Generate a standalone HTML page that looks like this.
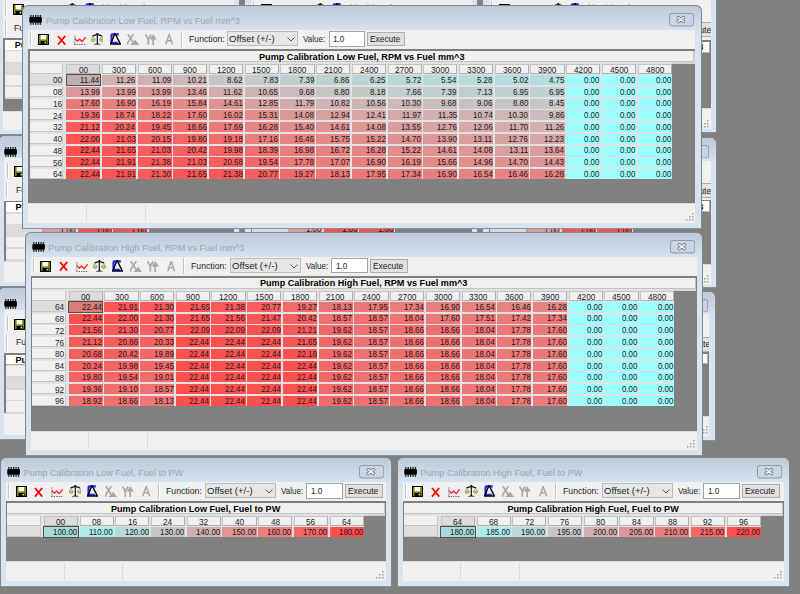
<!DOCTYPE html>
<html><head><meta charset="utf-8"><style>
html,body{margin:0;padding:0;}
body{width:800px;height:594px;overflow:hidden;position:relative;background:#808080;font-family:"Liberation Sans", sans-serif;}
.win{position:absolute;overflow:hidden;}
.win div{position:absolute;}
.t{white-space:nowrap;line-height:1;transform-origin:0 0;}
</style></head><body>
<div class="win" style="left:-3.5px;top:-27px;width:243.5px;height:162px;">
<div style="left:0px;top:0px;width:243.5px;height:162px;background:linear-gradient(#bccad9 0px,#c6d4e3 10px,#d4e0ed 22px,#d8e4f0 30px);border:1px solid #80868e;border-bottom-color:#8a9098;border-radius:6px 6px 0 0;box-sizing:border-box;"></div>
<svg style="position:absolute;left:6.5px;top:11.8px" width="13.2" height="9.8" viewBox="0 0 13.2 9.8"><rect x="0.3" y="2.1" width="12.6" height="5.6" rx="1" fill="#000"/><rect x="1.20" y="0" width="1.3" height="2.6" fill="#222"/><rect x="1.20" y="7.2" width="1.3" height="2.6" fill="#222"/><rect x="3.60" y="0" width="1.3" height="2.6" fill="#222"/><rect x="3.60" y="7.2" width="1.3" height="2.6" fill="#222"/><rect x="6.00" y="0" width="1.3" height="2.6" fill="#222"/><rect x="6.00" y="7.2" width="1.3" height="2.6" fill="#222"/><rect x="8.40" y="0" width="1.3" height="2.6" fill="#222"/><rect x="8.40" y="7.2" width="1.3" height="2.6" fill="#222"/><rect x="10.80" y="0" width="1.3" height="2.6" fill="#222"/><rect x="10.80" y="7.2" width="1.3" height="2.6" fill="#222"/></svg>
<svg style="position:absolute;left:210.5px;top:7.5px" width="25.2" height="13.5" viewBox="0 0 25.2 13.5"><rect x="0.5" y="0.5" width="24.2" height="12.5" rx="2.5" fill="#c9d5e2" stroke="#8d9bae" stroke-width="1"/><path d="M9.2 4.6 L14.6 8.6 M14.6 4.6 L9.2 8.6" stroke="#737b86" stroke-width="3.4" stroke-linecap="round" fill="none"/><path d="M9.2 4.6 L14.6 8.6 M14.6 4.6 L9.2 8.6" stroke="#f0f0f0" stroke-width="1.8" stroke-linecap="round" fill="none"/></svg>
<div style="left:6.5px;top:22.3px;width:230.8px;height:134.7px;background:#f0f0f0;"></div>
<div style="left:8.9px;top:28.2px;width:1px;height:15px;background:#c4c4c4;border-right:1px solid #fff;"></div>
<svg style="position:absolute;left:16.5px;top:31px" width="11" height="11" viewBox="0 0 11 11"><rect x="0.5" y="0.5" width="10" height="10" fill="#808000" stroke="#000" stroke-width="1"/><rect x="2.6" y="1" width="5.6" height="4.4" fill="#fff"/><rect x="2.6" y="7" width="6" height="3" fill="#000"/><rect x="6.6" y="7.8" width="1.3" height="1.6" fill="#fff"/></svg>
<svg style="position:absolute;left:35.3px;top:31.6px" width="9.2" height="10.6" viewBox="0 0 9.2 10.6"><path d="M1 1 L8.2 9.6 M8.2 1 L1 9.6" stroke="#ff0000" stroke-width="1.8" fill="none"/></svg>
<svg style="position:absolute;left:52.2px;top:31.9px" width="12" height="10.4" viewBox="0 0 12 10.4"><rect x="0.3" y="0" width="1.1" height="9.6" fill="#a8a8a8"/><path d="M0.3 9.7 H12" stroke="#333" stroke-width="1.1" stroke-dasharray="1.3 1.1" fill="none"/><path d="M0.8 3.6 L3.3 6.2 L5.6 4.2 L8.2 6.6 L11.6 2.2" stroke="#ff2020" stroke-width="1.3" fill="none"/></svg>
<svg style="position:absolute;left:69.5px;top:30.2px" width="12.6" height="11.8" viewBox="0 0 12.6 11.8"><path d="M1.6 2.8 L6.3 1.4 L11 2.8" stroke="#111" stroke-width="1.3" fill="none"/><circle cx="6.3" cy="1.2" r="1.1" fill="#000"/><rect x="5.7" y="1" width="1.3" height="10" fill="#222"/><path d="M1.8 2.8 L0.2 6.6 M1.8 2.8 L3.6 6.6 M10.8 2.8 L9 6.6 M10.8 2.8 L12.4 6.6" stroke="#888" stroke-width="0.7" fill="none"/><path d="M-0.2 6.3 H4.2 Q4 8.6 2 8.6 Q0 8.6 -0.2 6.3 Z" fill="#e2e200" stroke="#666" stroke-width="0.5"/><path d="M8.4 6.3 H12.8 Q12.6 8.6 10.6 8.6 Q8.6 8.6 8.4 6.3 Z" fill="#e2e200" stroke="#666" stroke-width="0.5"/><path d="M2.4 11.6 Q6.3 9.6 10.2 11.6 Z" fill="#000"/></svg>
<svg style="position:absolute;left:88.2px;top:30px" width="11" height="11.8" viewBox="0 0 11 11.8"><path d="M8.8 1.4 H2.6 Q1.5 1.4 1.5 2.6 V9.8 H7.8" stroke="#2020ff" stroke-width="2.1" fill="none"/><path d="M5.0 0.3 L0.7 11.0 H10.3 Z" stroke="#000" stroke-width="1.4" fill="none" stroke-linejoin="miter"/></svg>
<svg style="position:absolute;left:105.7px;top:31.2px" width="12" height="11" viewBox="0 0 12 11"><path d="M0.8 0.2 L6.3 8.5 M6.3 0.2 L0.8 8.5 L0.3 10.8" stroke="#a8a8a8" stroke-width="1.6" fill="none"/><path d="M3.2 11 L8.3 5.8 L12 11 Z" fill="#a8a8a8"/></svg>
<svg style="position:absolute;left:123.3px;top:31.2px" width="12" height="11" viewBox="0 0 12 11"><path d="M0.5 0.5 L3.3 5.2 L6.1 0.5 M3.3 5 V10.8" stroke="#a8a8a8" stroke-width="1.7" fill="none"/><path d="M8.2 11 V4.5" stroke="#a8a8a8" stroke-width="1.7" fill="none"/><path d="M4.6 5.6 L8.2 0.2 L11.8 5.6 Z" fill="#a8a8a8"/></svg>
<svg style="position:absolute;left:143.3px;top:31.2px" width="8.4" height="10.6" viewBox="0 0 8.4 10.6"><path d="M0.7 10.3 L4.2 0.5 L7.7 10.3 M2 6.8 H6.4" stroke="#a8a8a8" stroke-width="1.5" fill="none"/></svg>
<div style="left:8.5px;top:47px;width:1px;height:16.7px;background:#c4c4c4;border-right:1px solid #fff;"></div>
<div class="t" style="left:17.8px;top:51.28px;font-size:9px;color:#1e1e1e;transform:scaleX(0.9661);">Function:</div>
<div style="left:56.6px;top:47.3px;width:70.9px;height:14.6px;background:#e6e6e6;border:1px solid #bcbcbc;box-sizing:border-box;"></div>
<div class="t" style="left:58.67px;top:51.28px;font-size:9px;color:#1e1e1e;transform:scaleX(1.0577);">Offset (+/-)</div>
<svg style="position:absolute;left:116.5px;top:53px" width="8" height="5" viewBox="0 0 8 5"><path d="M0.5 0.5 L4 4 L7.5 0.5" stroke="#5a5a5a" stroke-width="1" fill="none"/></svg>
<div class="t" style="left:132.5px;top:51.28px;font-size:9px;color:#1e1e1e;transform:scaleX(0.8930);">Value:</div>
<div style="left:158px;top:47.1px;width:36.7px;height:15.3px;background:#fff;border:1px solid #a5a5a5;box-sizing:border-box;"></div>
<div class="t" style="left:162.68px;top:51.28px;font-size:9px;color:#1e1e1e;transform:scaleX(0.9115);">1.0</div>
<div style="left:203.3px;top:46.5px;width:38.3px;height:15px;background:#e1e1e1;border:1px solid #adadad;box-sizing:border-box;"></div>
<div class="t" style="left:206.61px;top:49.88px;font-size:9px;color:#1e1e1e;transform:scaleX(0.9615);">Execute</div>
<div style="left:237.3px;top:45.5px;width:5.2px;height:17px;background:#d8e4f0;"></div>
<div style="left:6.5px;top:65.4px;width:230.8px;height:72.2px;background:#808080;"></div>
<div style="left:8px;top:66.9px;width:228.3px;height:10.8px;background:#ffffff;border-right:1px solid #b0b0b0;border-bottom:1px solid #b0b0b0;box-sizing:border-box;"></div>
<div class="t" style="left:18.23px;top:68.2px;font-size:9.1px;color:#000;font-weight:bold;">Pump Calibration High Fuel, RPM vs Fuel mm^3</div>
<div style="left:8px;top:76.9px;width:143.16px;height:48.7px;background:#d9d9d9;"></div>
<div style="left:8.2px;top:78.4px;width:33.8px;height:10.2px;background:#f0f0f0;"></div>
<div style="left:44px;top:78.4px;width:34.2px;height:10.2px;background:#f0f0f0;border-right:1px solid #c2c2c2;border-bottom:1px solid #c2c2c2;box-sizing:border-box;"></div>
<div style="left:79.72px;top:78.4px;width:34.2px;height:10.2px;background:#f0f0f0;border-right:1px solid #c2c2c2;border-bottom:1px solid #c2c2c2;box-sizing:border-box;"></div>
<div style="left:115.44px;top:78.4px;width:34.2px;height:10.2px;background:#f0f0f0;border-right:1px solid #c2c2c2;border-bottom:1px solid #c2c2c2;box-sizing:border-box;"></div>
<div style="left:8.2px;top:90.2px;width:33.8px;height:10.2px;background:#dcdcdc;"></div>
<div style="left:44px;top:90.2px;width:34.2px;height:10.2px;background:#d89a9a;"></div>
<div class="t" style="left:62.09px;top:91.02px;font-size:8.6px;color:#1a1a1a;transform:scaleX(0.9200);">1.00</div>
<div style="left:79.72px;top:90.2px;width:34.2px;height:10.2px;background:#ff5050;"></div>
<div class="t" style="left:97.81px;top:91.02px;font-size:8.6px;color:#1a1a1a;transform:scaleX(0.9200);">1.00</div>
<div style="left:115.44px;top:90.2px;width:34.2px;height:10.2px;background:#ff5050;"></div>
<div class="t" style="left:133.53px;top:91.02px;font-size:8.6px;color:#1a1a1a;transform:scaleX(0.9200);">1.00</div>
<div style="left:8.2px;top:102px;width:33.8px;height:10.2px;background:#f0f0f0;"></div>
<div style="left:44px;top:102px;width:34.2px;height:10.2px;background:#ff5050;"></div>
<div class="t" style="left:62.09px;top:102.82px;font-size:8.6px;color:#1a1a1a;transform:scaleX(0.9200);">1.00</div>
<div style="left:79.72px;top:102px;width:34.2px;height:10.2px;background:#ff5050;"></div>
<div class="t" style="left:97.81px;top:102.82px;font-size:8.6px;color:#1a1a1a;transform:scaleX(0.9200);">1.00</div>
<div style="left:115.44px;top:102px;width:34.2px;height:10.2px;background:#ff5050;"></div>
<div class="t" style="left:133.53px;top:102.82px;font-size:8.6px;color:#1a1a1a;transform:scaleX(0.9200);">1.00</div>
<div style="left:8.2px;top:113.8px;width:33.8px;height:10.2px;background:#f0f0f0;"></div>
<div style="left:44px;top:113.8px;width:34.2px;height:10.2px;background:#ff5050;"></div>
<div class="t" style="left:62.09px;top:114.62px;font-size:8.6px;color:#1a1a1a;transform:scaleX(0.9200);">1.00</div>
<div style="left:79.72px;top:113.8px;width:34.2px;height:10.2px;background:#ff5050;"></div>
<div class="t" style="left:97.81px;top:114.62px;font-size:8.6px;color:#1a1a1a;transform:scaleX(0.9200);">1.00</div>
<div style="left:115.44px;top:113.8px;width:34.2px;height:10.2px;background:#ff5050;"></div>
<div class="t" style="left:133.53px;top:114.62px;font-size:8.6px;color:#1a1a1a;transform:scaleX(0.9200);">1.00</div>
<div style="left:6.5px;top:137.6px;width:230.8px;height:19.2px;background:#f0f0f0;border-top:1px solid #dadada;box-sizing:border-box;"></div>
<svg style="position:absolute;left:227.8px;top:147.3px" width="8" height="8" viewBox="0 0 8 8"><rect x="6" y="0" width="1.5" height="1.5" fill="#a0a0a0"/><rect x="6" y="3" width="1.5" height="1.5" fill="#a0a0a0"/><rect x="3" y="3" width="1.5" height="1.5" fill="#a0a0a0"/><rect x="6" y="6" width="1.5" height="1.5" fill="#a0a0a0"/><rect x="3" y="6" width="1.5" height="1.5" fill="#a0a0a0"/><rect x="0" y="6" width="1.5" height="1.5" fill="#a0a0a0"/></svg>
</div>
<div class="win" style="left:-2.2px;top:135.3px;width:242.2px;height:151.4px;">
<div style="left:0px;top:0px;width:242.2px;height:151.4px;background:linear-gradient(#bccad9 0px,#c6d4e3 10px,#d4e0ed 22px,#d8e4f0 30px);border:1px solid #80868e;border-bottom-color:#8a9098;border-radius:6px 6px 0 0;box-sizing:border-box;"></div>
<svg style="position:absolute;left:6.5px;top:11.8px" width="13.2" height="9.8" viewBox="0 0 13.2 9.8"><rect x="0.3" y="2.1" width="12.6" height="5.6" rx="1" fill="#000"/><rect x="1.20" y="0" width="1.3" height="2.6" fill="#222"/><rect x="1.20" y="7.2" width="1.3" height="2.6" fill="#222"/><rect x="3.60" y="0" width="1.3" height="2.6" fill="#222"/><rect x="3.60" y="7.2" width="1.3" height="2.6" fill="#222"/><rect x="6.00" y="0" width="1.3" height="2.6" fill="#222"/><rect x="6.00" y="7.2" width="1.3" height="2.6" fill="#222"/><rect x="8.40" y="0" width="1.3" height="2.6" fill="#222"/><rect x="8.40" y="7.2" width="1.3" height="2.6" fill="#222"/><rect x="10.80" y="0" width="1.3" height="2.6" fill="#222"/><rect x="10.80" y="7.2" width="1.3" height="2.6" fill="#222"/></svg>
<svg style="position:absolute;left:209.2px;top:7.5px" width="25.2" height="13.5" viewBox="0 0 25.2 13.5"><rect x="0.5" y="0.5" width="24.2" height="12.5" rx="2.5" fill="#c9d5e2" stroke="#8d9bae" stroke-width="1"/><path d="M9.2 4.6 L14.6 8.6 M14.6 4.6 L9.2 8.6" stroke="#737b86" stroke-width="3.4" stroke-linecap="round" fill="none"/><path d="M9.2 4.6 L14.6 8.6 M14.6 4.6 L9.2 8.6" stroke="#f0f0f0" stroke-width="1.8" stroke-linecap="round" fill="none"/></svg>
<div style="left:6.5px;top:22.3px;width:229.5px;height:124.1px;background:#f0f0f0;"></div>
<div style="left:8.9px;top:27.9px;width:1px;height:15px;background:#c4c4c4;border-right:1px solid #fff;"></div>
<svg style="position:absolute;left:16.5px;top:30.7px" width="11" height="11" viewBox="0 0 11 11"><rect x="0.5" y="0.5" width="10" height="10" fill="#808000" stroke="#000" stroke-width="1"/><rect x="2.6" y="1" width="5.6" height="4.4" fill="#fff"/><rect x="2.6" y="7" width="6" height="3" fill="#000"/><rect x="6.6" y="7.8" width="1.3" height="1.6" fill="#fff"/></svg>
<svg style="position:absolute;left:35.3px;top:31.3px" width="9.2" height="10.6" viewBox="0 0 9.2 10.6"><path d="M1 1 L8.2 9.6 M8.2 1 L1 9.6" stroke="#ff0000" stroke-width="1.8" fill="none"/></svg>
<svg style="position:absolute;left:52.2px;top:31.6px" width="12" height="10.4" viewBox="0 0 12 10.4"><rect x="0.3" y="0" width="1.1" height="9.6" fill="#a8a8a8"/><path d="M0.3 9.7 H12" stroke="#333" stroke-width="1.1" stroke-dasharray="1.3 1.1" fill="none"/><path d="M0.8 3.6 L3.3 6.2 L5.6 4.2 L8.2 6.6 L11.6 2.2" stroke="#ff2020" stroke-width="1.3" fill="none"/></svg>
<svg style="position:absolute;left:69.5px;top:29.9px" width="12.6" height="11.8" viewBox="0 0 12.6 11.8"><path d="M1.6 2.8 L6.3 1.4 L11 2.8" stroke="#111" stroke-width="1.3" fill="none"/><circle cx="6.3" cy="1.2" r="1.1" fill="#000"/><rect x="5.7" y="1" width="1.3" height="10" fill="#222"/><path d="M1.8 2.8 L0.2 6.6 M1.8 2.8 L3.6 6.6 M10.8 2.8 L9 6.6 M10.8 2.8 L12.4 6.6" stroke="#888" stroke-width="0.7" fill="none"/><path d="M-0.2 6.3 H4.2 Q4 8.6 2 8.6 Q0 8.6 -0.2 6.3 Z" fill="#e2e200" stroke="#666" stroke-width="0.5"/><path d="M8.4 6.3 H12.8 Q12.6 8.6 10.6 8.6 Q8.6 8.6 8.4 6.3 Z" fill="#e2e200" stroke="#666" stroke-width="0.5"/><path d="M2.4 11.6 Q6.3 9.6 10.2 11.6 Z" fill="#000"/></svg>
<svg style="position:absolute;left:88.2px;top:29.7px" width="11" height="11.8" viewBox="0 0 11 11.8"><path d="M8.8 1.4 H2.6 Q1.5 1.4 1.5 2.6 V9.8 H7.8" stroke="#2020ff" stroke-width="2.1" fill="none"/><path d="M5.0 0.3 L0.7 11.0 H10.3 Z" stroke="#000" stroke-width="1.4" fill="none" stroke-linejoin="miter"/></svg>
<svg style="position:absolute;left:105.7px;top:30.9px" width="12" height="11" viewBox="0 0 12 11"><path d="M0.8 0.2 L6.3 8.5 M6.3 0.2 L0.8 8.5 L0.3 10.8" stroke="#a8a8a8" stroke-width="1.6" fill="none"/><path d="M3.2 11 L8.3 5.8 L12 11 Z" fill="#a8a8a8"/></svg>
<svg style="position:absolute;left:123.3px;top:30.9px" width="12" height="11" viewBox="0 0 12 11"><path d="M0.5 0.5 L3.3 5.2 L6.1 0.5 M3.3 5 V10.8" stroke="#a8a8a8" stroke-width="1.7" fill="none"/><path d="M8.2 11 V4.5" stroke="#a8a8a8" stroke-width="1.7" fill="none"/><path d="M4.6 5.6 L8.2 0.2 L11.8 5.6 Z" fill="#a8a8a8"/></svg>
<svg style="position:absolute;left:143.3px;top:30.9px" width="8.4" height="10.6" viewBox="0 0 8.4 10.6"><path d="M0.7 10.3 L4.2 0.5 L7.7 10.3 M2 6.8 H6.4" stroke="#a8a8a8" stroke-width="1.5" fill="none"/></svg>
<div style="left:8.5px;top:46.5px;width:1px;height:16.7px;background:#c4c4c4;border-right:1px solid #fff;"></div>
<div class="t" style="left:17.8px;top:50.78px;font-size:9px;color:#1e1e1e;transform:scaleX(0.9661);">Function:</div>
<div style="left:56.6px;top:46.8px;width:70.9px;height:14.6px;background:#e6e6e6;border:1px solid #bcbcbc;box-sizing:border-box;"></div>
<div class="t" style="left:58.67px;top:50.78px;font-size:9px;color:#1e1e1e;transform:scaleX(1.0577);">Offset (+/-)</div>
<svg style="position:absolute;left:116.5px;top:52.5px" width="8" height="5" viewBox="0 0 8 5"><path d="M0.5 0.5 L4 4 L7.5 0.5" stroke="#5a5a5a" stroke-width="1" fill="none"/></svg>
<div class="t" style="left:132.5px;top:50.78px;font-size:9px;color:#1e1e1e;transform:scaleX(0.8930);">Value:</div>
<div style="left:158px;top:46.6px;width:36.7px;height:15.3px;background:#fff;border:1px solid #a5a5a5;box-sizing:border-box;"></div>
<div class="t" style="left:162.68px;top:50.78px;font-size:9px;color:#1e1e1e;transform:scaleX(0.9115);">1.0</div>
<div style="left:202px;top:46.2px;width:38.3px;height:15px;background:#e1e1e1;border:1px solid #adadad;box-sizing:border-box;"></div>
<div class="t" style="left:205.31px;top:49.58px;font-size:9px;color:#1e1e1e;transform:scaleX(0.9615);">Execute</div>
<div style="left:236px;top:45.2px;width:5.2px;height:17px;background:#d8e4f0;"></div>
<div style="left:6.5px;top:65.3px;width:229.5px;height:60.8px;background:#808080;"></div>
<div style="left:8px;top:66.8px;width:227px;height:10.8px;background:#ffffff;border-right:1px solid #b0b0b0;border-bottom:1px solid #b0b0b0;box-sizing:border-box;"></div>
<div class="t" style="left:17.58px;top:68.1px;font-size:9.1px;color:#000;font-weight:bold;">Pump Calibration High Fuel, RPM vs Fuel mm^3</div>
<div style="left:8px;top:76.8px;width:143.16px;height:48.7px;background:#d9d9d9;"></div>
<div style="left:8.2px;top:78.3px;width:33.8px;height:10.2px;background:#f0f0f0;"></div>
<div style="left:44px;top:78.3px;width:34.2px;height:10.2px;background:#f0f0f0;border-right:1px solid #c2c2c2;border-bottom:1px solid #c2c2c2;box-sizing:border-box;"></div>
<div style="left:79.72px;top:78.3px;width:34.2px;height:10.2px;background:#f0f0f0;border-right:1px solid #c2c2c2;border-bottom:1px solid #c2c2c2;box-sizing:border-box;"></div>
<div style="left:115.44px;top:78.3px;width:34.2px;height:10.2px;background:#f0f0f0;border-right:1px solid #c2c2c2;border-bottom:1px solid #c2c2c2;box-sizing:border-box;"></div>
<div style="left:8.2px;top:90.1px;width:33.8px;height:10.2px;background:#dcdcdc;"></div>
<div style="left:44px;top:90.1px;width:34.2px;height:10.2px;background:#d89a9a;"></div>
<div class="t" style="left:62.09px;top:90.92px;font-size:8.6px;color:#1a1a1a;transform:scaleX(0.9200);">1.00</div>
<div style="left:79.72px;top:90.1px;width:34.2px;height:10.2px;background:#ff5050;"></div>
<div class="t" style="left:97.81px;top:90.92px;font-size:8.6px;color:#1a1a1a;transform:scaleX(0.9200);">1.00</div>
<div style="left:115.44px;top:90.1px;width:34.2px;height:10.2px;background:#ff5050;"></div>
<div class="t" style="left:133.53px;top:90.92px;font-size:8.6px;color:#1a1a1a;transform:scaleX(0.9200);">1.00</div>
<div style="left:8.2px;top:101.9px;width:33.8px;height:10.2px;background:#f0f0f0;"></div>
<div style="left:44px;top:101.9px;width:34.2px;height:10.2px;background:#ff5050;"></div>
<div class="t" style="left:62.09px;top:102.72px;font-size:8.6px;color:#1a1a1a;transform:scaleX(0.9200);">1.00</div>
<div style="left:79.72px;top:101.9px;width:34.2px;height:10.2px;background:#ff5050;"></div>
<div class="t" style="left:97.81px;top:102.72px;font-size:8.6px;color:#1a1a1a;transform:scaleX(0.9200);">1.00</div>
<div style="left:115.44px;top:101.9px;width:34.2px;height:10.2px;background:#ff5050;"></div>
<div class="t" style="left:133.53px;top:102.72px;font-size:8.6px;color:#1a1a1a;transform:scaleX(0.9200);">1.00</div>
<div style="left:8.2px;top:113.7px;width:33.8px;height:10.2px;background:#f0f0f0;"></div>
<div style="left:44px;top:113.7px;width:34.2px;height:10.2px;background:#ff5050;"></div>
<div class="t" style="left:62.09px;top:114.52px;font-size:8.6px;color:#1a1a1a;transform:scaleX(0.9200);">1.00</div>
<div style="left:79.72px;top:113.7px;width:34.2px;height:10.2px;background:#ff5050;"></div>
<div class="t" style="left:97.81px;top:114.52px;font-size:8.6px;color:#1a1a1a;transform:scaleX(0.9200);">1.00</div>
<div style="left:115.44px;top:113.7px;width:34.2px;height:10.2px;background:#ff5050;"></div>
<div class="t" style="left:133.53px;top:114.52px;font-size:8.6px;color:#1a1a1a;transform:scaleX(0.9200);">1.00</div>
<div style="left:6.5px;top:126.1px;width:229.5px;height:20.6px;background:#f0f0f0;border-top:1px solid #dadada;box-sizing:border-box;"></div>
<svg style="position:absolute;left:226.5px;top:137.2px" width="8" height="8" viewBox="0 0 8 8"><rect x="6" y="0" width="1.5" height="1.5" fill="#a0a0a0"/><rect x="6" y="3" width="1.5" height="1.5" fill="#a0a0a0"/><rect x="3" y="3" width="1.5" height="1.5" fill="#a0a0a0"/><rect x="6" y="6" width="1.5" height="1.5" fill="#a0a0a0"/><rect x="3" y="6" width="1.5" height="1.5" fill="#a0a0a0"/><rect x="0" y="6" width="1.5" height="1.5" fill="#a0a0a0"/></svg>
</div>
<div class="win" style="left:-2.2px;top:287px;width:242.2px;height:152.5px;">
<div style="left:0px;top:0px;width:242.2px;height:152.5px;background:linear-gradient(#bccad9 0px,#c6d4e3 10px,#d4e0ed 22px,#d8e4f0 30px);border:1px solid #80868e;border-bottom-color:#8a9098;border-radius:6px 6px 0 0;box-sizing:border-box;"></div>
<svg style="position:absolute;left:6.5px;top:11.8px" width="13.2" height="9.8" viewBox="0 0 13.2 9.8"><rect x="0.3" y="2.1" width="12.6" height="5.6" rx="1" fill="#000"/><rect x="1.20" y="0" width="1.3" height="2.6" fill="#222"/><rect x="1.20" y="7.2" width="1.3" height="2.6" fill="#222"/><rect x="3.60" y="0" width="1.3" height="2.6" fill="#222"/><rect x="3.60" y="7.2" width="1.3" height="2.6" fill="#222"/><rect x="6.00" y="0" width="1.3" height="2.6" fill="#222"/><rect x="6.00" y="7.2" width="1.3" height="2.6" fill="#222"/><rect x="8.40" y="0" width="1.3" height="2.6" fill="#222"/><rect x="8.40" y="7.2" width="1.3" height="2.6" fill="#222"/><rect x="10.80" y="0" width="1.3" height="2.6" fill="#222"/><rect x="10.80" y="7.2" width="1.3" height="2.6" fill="#222"/></svg>
<svg style="position:absolute;left:209.2px;top:7.5px" width="25.2" height="13.5" viewBox="0 0 25.2 13.5"><rect x="0.5" y="0.5" width="24.2" height="12.5" rx="2.5" fill="#c9d5e2" stroke="#8d9bae" stroke-width="1"/><path d="M9.2 4.6 L14.6 8.6 M14.6 4.6 L9.2 8.6" stroke="#737b86" stroke-width="3.4" stroke-linecap="round" fill="none"/><path d="M9.2 4.6 L14.6 8.6 M14.6 4.6 L9.2 8.6" stroke="#f0f0f0" stroke-width="1.8" stroke-linecap="round" fill="none"/></svg>
<div style="left:6.5px;top:23px;width:229.5px;height:124.5px;background:#f0f0f0;"></div>
<div style="left:8.9px;top:28.7px;width:1px;height:15px;background:#c4c4c4;border-right:1px solid #fff;"></div>
<svg style="position:absolute;left:16.5px;top:31.5px" width="11" height="11" viewBox="0 0 11 11"><rect x="0.5" y="0.5" width="10" height="10" fill="#808000" stroke="#000" stroke-width="1"/><rect x="2.6" y="1" width="5.6" height="4.4" fill="#fff"/><rect x="2.6" y="7" width="6" height="3" fill="#000"/><rect x="6.6" y="7.8" width="1.3" height="1.6" fill="#fff"/></svg>
<svg style="position:absolute;left:35.3px;top:32.1px" width="9.2" height="10.6" viewBox="0 0 9.2 10.6"><path d="M1 1 L8.2 9.6 M8.2 1 L1 9.6" stroke="#ff0000" stroke-width="1.8" fill="none"/></svg>
<svg style="position:absolute;left:52.2px;top:32.4px" width="12" height="10.4" viewBox="0 0 12 10.4"><rect x="0.3" y="0" width="1.1" height="9.6" fill="#a8a8a8"/><path d="M0.3 9.7 H12" stroke="#333" stroke-width="1.1" stroke-dasharray="1.3 1.1" fill="none"/><path d="M0.8 3.6 L3.3 6.2 L5.6 4.2 L8.2 6.6 L11.6 2.2" stroke="#ff2020" stroke-width="1.3" fill="none"/></svg>
<svg style="position:absolute;left:69.5px;top:30.7px" width="12.6" height="11.8" viewBox="0 0 12.6 11.8"><path d="M1.6 2.8 L6.3 1.4 L11 2.8" stroke="#111" stroke-width="1.3" fill="none"/><circle cx="6.3" cy="1.2" r="1.1" fill="#000"/><rect x="5.7" y="1" width="1.3" height="10" fill="#222"/><path d="M1.8 2.8 L0.2 6.6 M1.8 2.8 L3.6 6.6 M10.8 2.8 L9 6.6 M10.8 2.8 L12.4 6.6" stroke="#888" stroke-width="0.7" fill="none"/><path d="M-0.2 6.3 H4.2 Q4 8.6 2 8.6 Q0 8.6 -0.2 6.3 Z" fill="#e2e200" stroke="#666" stroke-width="0.5"/><path d="M8.4 6.3 H12.8 Q12.6 8.6 10.6 8.6 Q8.6 8.6 8.4 6.3 Z" fill="#e2e200" stroke="#666" stroke-width="0.5"/><path d="M2.4 11.6 Q6.3 9.6 10.2 11.6 Z" fill="#000"/></svg>
<svg style="position:absolute;left:88.2px;top:30.5px" width="11" height="11.8" viewBox="0 0 11 11.8"><path d="M8.8 1.4 H2.6 Q1.5 1.4 1.5 2.6 V9.8 H7.8" stroke="#2020ff" stroke-width="2.1" fill="none"/><path d="M5.0 0.3 L0.7 11.0 H10.3 Z" stroke="#000" stroke-width="1.4" fill="none" stroke-linejoin="miter"/></svg>
<svg style="position:absolute;left:105.7px;top:31.7px" width="12" height="11" viewBox="0 0 12 11"><path d="M0.8 0.2 L6.3 8.5 M6.3 0.2 L0.8 8.5 L0.3 10.8" stroke="#a8a8a8" stroke-width="1.6" fill="none"/><path d="M3.2 11 L8.3 5.8 L12 11 Z" fill="#a8a8a8"/></svg>
<svg style="position:absolute;left:123.3px;top:31.7px" width="12" height="11" viewBox="0 0 12 11"><path d="M0.5 0.5 L3.3 5.2 L6.1 0.5 M3.3 5 V10.8" stroke="#a8a8a8" stroke-width="1.7" fill="none"/><path d="M8.2 11 V4.5" stroke="#a8a8a8" stroke-width="1.7" fill="none"/><path d="M4.6 5.6 L8.2 0.2 L11.8 5.6 Z" fill="#a8a8a8"/></svg>
<svg style="position:absolute;left:143.3px;top:31.7px" width="8.4" height="10.6" viewBox="0 0 8.4 10.6"><path d="M0.7 10.3 L4.2 0.5 L7.7 10.3 M2 6.8 H6.4" stroke="#a8a8a8" stroke-width="1.5" fill="none"/></svg>
<div style="left:8.5px;top:47px;width:1px;height:16.7px;background:#c4c4c4;border-right:1px solid #fff;"></div>
<div class="t" style="left:17.8px;top:51.28px;font-size:9px;color:#1e1e1e;transform:scaleX(0.9661);">Function:</div>
<div style="left:56.6px;top:47.3px;width:70.9px;height:14.6px;background:#e6e6e6;border:1px solid #bcbcbc;box-sizing:border-box;"></div>
<div class="t" style="left:58.67px;top:51.28px;font-size:9px;color:#1e1e1e;transform:scaleX(1.0577);">Offset (+/-)</div>
<svg style="position:absolute;left:116.5px;top:53px" width="8" height="5" viewBox="0 0 8 5"><path d="M0.5 0.5 L4 4 L7.5 0.5" stroke="#5a5a5a" stroke-width="1" fill="none"/></svg>
<div class="t" style="left:132.5px;top:51.28px;font-size:9px;color:#1e1e1e;transform:scaleX(0.8930);">Value:</div>
<div style="left:158px;top:47.1px;width:36.7px;height:15.3px;background:#fff;border:1px solid #a5a5a5;box-sizing:border-box;"></div>
<div class="t" style="left:162.68px;top:51.28px;font-size:9px;color:#1e1e1e;transform:scaleX(0.9115);">1.0</div>
<div style="left:202px;top:47px;width:38.3px;height:15px;background:#e1e1e1;border:1px solid #adadad;box-sizing:border-box;"></div>
<div class="t" style="left:205.31px;top:50.38px;font-size:9px;color:#1e1e1e;transform:scaleX(0.9615);">Execute</div>
<div style="left:236px;top:46px;width:5.2px;height:17px;background:#d8e4f0;"></div>
<div style="left:6.5px;top:66px;width:229.5px;height:59.8px;background:#808080;"></div>
<div style="left:8px;top:67.5px;width:227px;height:10.8px;background:#ffffff;border-right:1px solid #b0b0b0;border-bottom:1px solid #b0b0b0;box-sizing:border-box;"></div>
<div class="t" style="left:17.58px;top:68.8px;font-size:9.1px;color:#000;font-weight:bold;">Pump Calibration High Fuel, RPM vs Fuel mm^3</div>
<div style="left:8px;top:77.5px;width:143.16px;height:48.7px;background:#d9d9d9;"></div>
<div style="left:8.2px;top:79px;width:33.8px;height:10.2px;background:#f0f0f0;"></div>
<div style="left:44px;top:79px;width:34.2px;height:10.2px;background:#f0f0f0;border-right:1px solid #c2c2c2;border-bottom:1px solid #c2c2c2;box-sizing:border-box;"></div>
<div style="left:79.72px;top:79px;width:34.2px;height:10.2px;background:#f0f0f0;border-right:1px solid #c2c2c2;border-bottom:1px solid #c2c2c2;box-sizing:border-box;"></div>
<div style="left:115.44px;top:79px;width:34.2px;height:10.2px;background:#f0f0f0;border-right:1px solid #c2c2c2;border-bottom:1px solid #c2c2c2;box-sizing:border-box;"></div>
<div style="left:8.2px;top:90.8px;width:33.8px;height:10.2px;background:#dcdcdc;"></div>
<div style="left:44px;top:90.8px;width:34.2px;height:10.2px;background:#d89a9a;"></div>
<div class="t" style="left:62.09px;top:91.62px;font-size:8.6px;color:#1a1a1a;transform:scaleX(0.9200);">1.00</div>
<div style="left:79.72px;top:90.8px;width:34.2px;height:10.2px;background:#ff5050;"></div>
<div class="t" style="left:97.81px;top:91.62px;font-size:8.6px;color:#1a1a1a;transform:scaleX(0.9200);">1.00</div>
<div style="left:115.44px;top:90.8px;width:34.2px;height:10.2px;background:#ff5050;"></div>
<div class="t" style="left:133.53px;top:91.62px;font-size:8.6px;color:#1a1a1a;transform:scaleX(0.9200);">1.00</div>
<div style="left:8.2px;top:102.6px;width:33.8px;height:10.2px;background:#f0f0f0;"></div>
<div style="left:44px;top:102.6px;width:34.2px;height:10.2px;background:#ff5050;"></div>
<div class="t" style="left:62.09px;top:103.42px;font-size:8.6px;color:#1a1a1a;transform:scaleX(0.9200);">1.00</div>
<div style="left:79.72px;top:102.6px;width:34.2px;height:10.2px;background:#ff5050;"></div>
<div class="t" style="left:97.81px;top:103.42px;font-size:8.6px;color:#1a1a1a;transform:scaleX(0.9200);">1.00</div>
<div style="left:115.44px;top:102.6px;width:34.2px;height:10.2px;background:#ff5050;"></div>
<div class="t" style="left:133.53px;top:103.42px;font-size:8.6px;color:#1a1a1a;transform:scaleX(0.9200);">1.00</div>
<div style="left:8.2px;top:114.4px;width:33.8px;height:10.2px;background:#f0f0f0;"></div>
<div style="left:44px;top:114.4px;width:34.2px;height:10.2px;background:#ff5050;"></div>
<div class="t" style="left:62.09px;top:115.22px;font-size:8.6px;color:#1a1a1a;transform:scaleX(0.9200);">1.00</div>
<div style="left:79.72px;top:114.4px;width:34.2px;height:10.2px;background:#ff5050;"></div>
<div class="t" style="left:97.81px;top:115.22px;font-size:8.6px;color:#1a1a1a;transform:scaleX(0.9200);">1.00</div>
<div style="left:115.44px;top:114.4px;width:34.2px;height:10.2px;background:#ff5050;"></div>
<div class="t" style="left:133.53px;top:115.22px;font-size:8.6px;color:#1a1a1a;transform:scaleX(0.9200);">1.00</div>
<div style="left:6.5px;top:125.8px;width:229.5px;height:21.2px;background:#f0f0f0;border-top:1px solid #dadada;box-sizing:border-box;"></div>
<svg style="position:absolute;left:226.5px;top:137.5px" width="8" height="8" viewBox="0 0 8 8"><rect x="6" y="0" width="1.5" height="1.5" fill="#a0a0a0"/><rect x="6" y="3" width="1.5" height="1.5" fill="#a0a0a0"/><rect x="3" y="3" width="1.5" height="1.5" fill="#a0a0a0"/><rect x="6" y="6" width="1.5" height="1.5" fill="#a0a0a0"/><rect x="3" y="6" width="1.5" height="1.5" fill="#a0a0a0"/><rect x="0" y="6" width="1.5" height="1.5" fill="#a0a0a0"/></svg>
</div>
<div class="win" style="left:244px;top:-27px;width:234px;height:162px;">
<div style="left:0px;top:0px;width:234px;height:162px;background:linear-gradient(#bccad9 0px,#c6d4e3 10px,#d4e0ed 22px,#d8e4f0 30px);border:1px solid #80868e;border-bottom-color:#8a9098;border-radius:6px 6px 0 0;box-sizing:border-box;"></div>
<svg style="position:absolute;left:6.5px;top:11.8px" width="13.2" height="9.8" viewBox="0 0 13.2 9.8"><rect x="0.3" y="2.1" width="12.6" height="5.6" rx="1" fill="#000"/><rect x="1.20" y="0" width="1.3" height="2.6" fill="#222"/><rect x="1.20" y="7.2" width="1.3" height="2.6" fill="#222"/><rect x="3.60" y="0" width="1.3" height="2.6" fill="#222"/><rect x="3.60" y="7.2" width="1.3" height="2.6" fill="#222"/><rect x="6.00" y="0" width="1.3" height="2.6" fill="#222"/><rect x="6.00" y="7.2" width="1.3" height="2.6" fill="#222"/><rect x="8.40" y="0" width="1.3" height="2.6" fill="#222"/><rect x="8.40" y="7.2" width="1.3" height="2.6" fill="#222"/><rect x="10.80" y="0" width="1.3" height="2.6" fill="#222"/><rect x="10.80" y="7.2" width="1.3" height="2.6" fill="#222"/></svg>
<svg style="position:absolute;left:201px;top:7.5px" width="25.2" height="13.5" viewBox="0 0 25.2 13.5"><rect x="0.5" y="0.5" width="24.2" height="12.5" rx="2.5" fill="#c9d5e2" stroke="#8d9bae" stroke-width="1"/><path d="M9.2 4.6 L14.6 8.6 M14.6 4.6 L9.2 8.6" stroke="#737b86" stroke-width="3.4" stroke-linecap="round" fill="none"/><path d="M9.2 4.6 L14.6 8.6 M14.6 4.6 L9.2 8.6" stroke="#f0f0f0" stroke-width="1.8" stroke-linecap="round" fill="none"/></svg>
<div style="left:6.5px;top:22.3px;width:221.3px;height:134.7px;background:#f0f0f0;"></div>
<div style="left:8.9px;top:28.2px;width:1px;height:15px;background:#c4c4c4;border-right:1px solid #fff;"></div>
<svg style="position:absolute;left:16.5px;top:31px" width="11" height="11" viewBox="0 0 11 11"><rect x="0.5" y="0.5" width="10" height="10" fill="#808000" stroke="#000" stroke-width="1"/><rect x="2.6" y="1" width="5.6" height="4.4" fill="#fff"/><rect x="2.6" y="7" width="6" height="3" fill="#000"/><rect x="6.6" y="7.8" width="1.3" height="1.6" fill="#fff"/></svg>
<svg style="position:absolute;left:35.3px;top:31.6px" width="9.2" height="10.6" viewBox="0 0 9.2 10.6"><path d="M1 1 L8.2 9.6 M8.2 1 L1 9.6" stroke="#ff0000" stroke-width="1.8" fill="none"/></svg>
<svg style="position:absolute;left:52.2px;top:31.9px" width="12" height="10.4" viewBox="0 0 12 10.4"><rect x="0.3" y="0" width="1.1" height="9.6" fill="#a8a8a8"/><path d="M0.3 9.7 H12" stroke="#333" stroke-width="1.1" stroke-dasharray="1.3 1.1" fill="none"/><path d="M0.8 3.6 L3.3 6.2 L5.6 4.2 L8.2 6.6 L11.6 2.2" stroke="#ff2020" stroke-width="1.3" fill="none"/></svg>
<svg style="position:absolute;left:69.5px;top:30.2px" width="12.6" height="11.8" viewBox="0 0 12.6 11.8"><path d="M1.6 2.8 L6.3 1.4 L11 2.8" stroke="#111" stroke-width="1.3" fill="none"/><circle cx="6.3" cy="1.2" r="1.1" fill="#000"/><rect x="5.7" y="1" width="1.3" height="10" fill="#222"/><path d="M1.8 2.8 L0.2 6.6 M1.8 2.8 L3.6 6.6 M10.8 2.8 L9 6.6 M10.8 2.8 L12.4 6.6" stroke="#888" stroke-width="0.7" fill="none"/><path d="M-0.2 6.3 H4.2 Q4 8.6 2 8.6 Q0 8.6 -0.2 6.3 Z" fill="#e2e200" stroke="#666" stroke-width="0.5"/><path d="M8.4 6.3 H12.8 Q12.6 8.6 10.6 8.6 Q8.6 8.6 8.4 6.3 Z" fill="#e2e200" stroke="#666" stroke-width="0.5"/><path d="M2.4 11.6 Q6.3 9.6 10.2 11.6 Z" fill="#000"/></svg>
<svg style="position:absolute;left:88.2px;top:30px" width="11" height="11.8" viewBox="0 0 11 11.8"><path d="M8.8 1.4 H2.6 Q1.5 1.4 1.5 2.6 V9.8 H7.8" stroke="#2020ff" stroke-width="2.1" fill="none"/><path d="M5.0 0.3 L0.7 11.0 H10.3 Z" stroke="#000" stroke-width="1.4" fill="none" stroke-linejoin="miter"/></svg>
<svg style="position:absolute;left:105.7px;top:31.2px" width="12" height="11" viewBox="0 0 12 11"><path d="M0.8 0.2 L6.3 8.5 M6.3 0.2 L0.8 8.5 L0.3 10.8" stroke="#a8a8a8" stroke-width="1.6" fill="none"/><path d="M3.2 11 L8.3 5.8 L12 11 Z" fill="#a8a8a8"/></svg>
<svg style="position:absolute;left:123.3px;top:31.2px" width="12" height="11" viewBox="0 0 12 11"><path d="M0.5 0.5 L3.3 5.2 L6.1 0.5 M3.3 5 V10.8" stroke="#a8a8a8" stroke-width="1.7" fill="none"/><path d="M8.2 11 V4.5" stroke="#a8a8a8" stroke-width="1.7" fill="none"/><path d="M4.6 5.6 L8.2 0.2 L11.8 5.6 Z" fill="#a8a8a8"/></svg>
<svg style="position:absolute;left:143.3px;top:31.2px" width="8.4" height="10.6" viewBox="0 0 8.4 10.6"><path d="M0.7 10.3 L4.2 0.5 L7.7 10.3 M2 6.8 H6.4" stroke="#a8a8a8" stroke-width="1.5" fill="none"/></svg>
<div style="left:8.5px;top:47px;width:1px;height:16.7px;background:#c4c4c4;border-right:1px solid #fff;"></div>
<div class="t" style="left:17.8px;top:51.28px;font-size:9px;color:#1e1e1e;transform:scaleX(0.9661);">Function:</div>
<div style="left:56.6px;top:47.3px;width:70.9px;height:14.6px;background:#e6e6e6;border:1px solid #bcbcbc;box-sizing:border-box;"></div>
<div class="t" style="left:58.67px;top:51.28px;font-size:9px;color:#1e1e1e;transform:scaleX(1.0577);">Offset (+/-)</div>
<svg style="position:absolute;left:116.5px;top:53px" width="8" height="5" viewBox="0 0 8 5"><path d="M0.5 0.5 L4 4 L7.5 0.5" stroke="#5a5a5a" stroke-width="1" fill="none"/></svg>
<div class="t" style="left:132.5px;top:51.28px;font-size:9px;color:#1e1e1e;transform:scaleX(0.8930);">Value:</div>
<div style="left:158px;top:47.1px;width:36.7px;height:15.3px;background:#fff;border:1px solid #a5a5a5;box-sizing:border-box;"></div>
<div class="t" style="left:162.68px;top:51.28px;font-size:9px;color:#1e1e1e;transform:scaleX(0.9115);">1.0</div>
<div style="left:193.8px;top:46.5px;width:38.3px;height:15px;background:#e1e1e1;border:1px solid #adadad;box-sizing:border-box;"></div>
<div class="t" style="left:197.11px;top:49.88px;font-size:9px;color:#1e1e1e;transform:scaleX(0.9615);">Execute</div>
<div style="left:227.8px;top:45.5px;width:5.2px;height:17px;background:#d8e4f0;"></div>
<div style="left:6.5px;top:65.4px;width:221.3px;height:72.2px;background:#808080;"></div>
<div style="left:8px;top:66.9px;width:218.8px;height:10.8px;background:#ffffff;border-right:1px solid #b0b0b0;border-bottom:1px solid #b0b0b0;box-sizing:border-box;"></div>
<div class="t" style="left:13.48px;top:68.2px;font-size:9.1px;color:#000;font-weight:bold;">Pump Calibration High Fuel, RPM vs Fuel mm^3</div>
<div style="left:8px;top:76.9px;width:143.16px;height:48.7px;background:#d9d9d9;"></div>
<div style="left:8.2px;top:78.4px;width:33.8px;height:10.2px;background:#f0f0f0;"></div>
<div style="left:44px;top:78.4px;width:34.2px;height:10.2px;background:#f0f0f0;border-right:1px solid #c2c2c2;border-bottom:1px solid #c2c2c2;box-sizing:border-box;"></div>
<div style="left:79.72px;top:78.4px;width:34.2px;height:10.2px;background:#f0f0f0;border-right:1px solid #c2c2c2;border-bottom:1px solid #c2c2c2;box-sizing:border-box;"></div>
<div style="left:115.44px;top:78.4px;width:34.2px;height:10.2px;background:#f0f0f0;border-right:1px solid #c2c2c2;border-bottom:1px solid #c2c2c2;box-sizing:border-box;"></div>
<div style="left:8.2px;top:90.2px;width:33.8px;height:10.2px;background:#dcdcdc;"></div>
<div style="left:44px;top:90.2px;width:34.2px;height:10.2px;background:#d89a9a;"></div>
<div class="t" style="left:62.09px;top:91.02px;font-size:8.6px;color:#1a1a1a;transform:scaleX(0.9200);">1.00</div>
<div style="left:79.72px;top:90.2px;width:34.2px;height:10.2px;background:#ff5050;"></div>
<div class="t" style="left:97.81px;top:91.02px;font-size:8.6px;color:#1a1a1a;transform:scaleX(0.9200);">1.00</div>
<div style="left:115.44px;top:90.2px;width:34.2px;height:10.2px;background:#ff5050;"></div>
<div class="t" style="left:133.53px;top:91.02px;font-size:8.6px;color:#1a1a1a;transform:scaleX(0.9200);">1.00</div>
<div style="left:8.2px;top:102px;width:33.8px;height:10.2px;background:#f0f0f0;"></div>
<div style="left:44px;top:102px;width:34.2px;height:10.2px;background:#ff5050;"></div>
<div class="t" style="left:62.09px;top:102.82px;font-size:8.6px;color:#1a1a1a;transform:scaleX(0.9200);">1.00</div>
<div style="left:79.72px;top:102px;width:34.2px;height:10.2px;background:#ff5050;"></div>
<div class="t" style="left:97.81px;top:102.82px;font-size:8.6px;color:#1a1a1a;transform:scaleX(0.9200);">1.00</div>
<div style="left:115.44px;top:102px;width:34.2px;height:10.2px;background:#ff5050;"></div>
<div class="t" style="left:133.53px;top:102.82px;font-size:8.6px;color:#1a1a1a;transform:scaleX(0.9200);">1.00</div>
<div style="left:8.2px;top:113.8px;width:33.8px;height:10.2px;background:#f0f0f0;"></div>
<div style="left:44px;top:113.8px;width:34.2px;height:10.2px;background:#ff5050;"></div>
<div class="t" style="left:62.09px;top:114.62px;font-size:8.6px;color:#1a1a1a;transform:scaleX(0.9200);">1.00</div>
<div style="left:79.72px;top:113.8px;width:34.2px;height:10.2px;background:#ff5050;"></div>
<div class="t" style="left:97.81px;top:114.62px;font-size:8.6px;color:#1a1a1a;transform:scaleX(0.9200);">1.00</div>
<div style="left:115.44px;top:113.8px;width:34.2px;height:10.2px;background:#ff5050;"></div>
<div class="t" style="left:133.53px;top:114.62px;font-size:8.6px;color:#1a1a1a;transform:scaleX(0.9200);">1.00</div>
<div style="left:6.5px;top:137.6px;width:221.3px;height:19.2px;background:#f0f0f0;border-top:1px solid #dadada;box-sizing:border-box;"></div>
<svg style="position:absolute;left:218.3px;top:147.3px" width="8" height="8" viewBox="0 0 8 8"><rect x="6" y="0" width="1.5" height="1.5" fill="#a0a0a0"/><rect x="6" y="3" width="1.5" height="1.5" fill="#a0a0a0"/><rect x="3" y="3" width="1.5" height="1.5" fill="#a0a0a0"/><rect x="6" y="6" width="1.5" height="1.5" fill="#a0a0a0"/><rect x="3" y="6" width="1.5" height="1.5" fill="#a0a0a0"/><rect x="0" y="6" width="1.5" height="1.5" fill="#a0a0a0"/></svg>
</div>
<div class="win" style="left:244px;top:137px;width:234px;height:153px;">
<div style="left:0px;top:0px;width:234px;height:153px;background:linear-gradient(#bccad9 0px,#c6d4e3 10px,#d4e0ed 22px,#d8e4f0 30px);border:1px solid #80868e;border-bottom-color:#8a9098;border-radius:6px 6px 0 0;box-sizing:border-box;"></div>
<svg style="position:absolute;left:6.5px;top:11.8px" width="13.2" height="9.8" viewBox="0 0 13.2 9.8"><rect x="0.3" y="2.1" width="12.6" height="5.6" rx="1" fill="#000"/><rect x="1.20" y="0" width="1.3" height="2.6" fill="#222"/><rect x="1.20" y="7.2" width="1.3" height="2.6" fill="#222"/><rect x="3.60" y="0" width="1.3" height="2.6" fill="#222"/><rect x="3.60" y="7.2" width="1.3" height="2.6" fill="#222"/><rect x="6.00" y="0" width="1.3" height="2.6" fill="#222"/><rect x="6.00" y="7.2" width="1.3" height="2.6" fill="#222"/><rect x="8.40" y="0" width="1.3" height="2.6" fill="#222"/><rect x="8.40" y="7.2" width="1.3" height="2.6" fill="#222"/><rect x="10.80" y="0" width="1.3" height="2.6" fill="#222"/><rect x="10.80" y="7.2" width="1.3" height="2.6" fill="#222"/></svg>
<svg style="position:absolute;left:201px;top:7.5px" width="25.2" height="13.5" viewBox="0 0 25.2 13.5"><rect x="0.5" y="0.5" width="24.2" height="12.5" rx="2.5" fill="#c9d5e2" stroke="#8d9bae" stroke-width="1"/><path d="M9.2 4.6 L14.6 8.6 M14.6 4.6 L9.2 8.6" stroke="#737b86" stroke-width="3.4" stroke-linecap="round" fill="none"/><path d="M9.2 4.6 L14.6 8.6 M14.6 4.6 L9.2 8.6" stroke="#f0f0f0" stroke-width="1.8" stroke-linecap="round" fill="none"/></svg>
<div style="left:6.5px;top:23.5px;width:221.3px;height:124.5px;background:#f0f0f0;"></div>
<div style="left:8.9px;top:29.2px;width:1px;height:15px;background:#c4c4c4;border-right:1px solid #fff;"></div>
<svg style="position:absolute;left:16.5px;top:32px" width="11" height="11" viewBox="0 0 11 11"><rect x="0.5" y="0.5" width="10" height="10" fill="#808000" stroke="#000" stroke-width="1"/><rect x="2.6" y="1" width="5.6" height="4.4" fill="#fff"/><rect x="2.6" y="7" width="6" height="3" fill="#000"/><rect x="6.6" y="7.8" width="1.3" height="1.6" fill="#fff"/></svg>
<svg style="position:absolute;left:35.3px;top:32.6px" width="9.2" height="10.6" viewBox="0 0 9.2 10.6"><path d="M1 1 L8.2 9.6 M8.2 1 L1 9.6" stroke="#ff0000" stroke-width="1.8" fill="none"/></svg>
<svg style="position:absolute;left:52.2px;top:32.9px" width="12" height="10.4" viewBox="0 0 12 10.4"><rect x="0.3" y="0" width="1.1" height="9.6" fill="#a8a8a8"/><path d="M0.3 9.7 H12" stroke="#333" stroke-width="1.1" stroke-dasharray="1.3 1.1" fill="none"/><path d="M0.8 3.6 L3.3 6.2 L5.6 4.2 L8.2 6.6 L11.6 2.2" stroke="#ff2020" stroke-width="1.3" fill="none"/></svg>
<svg style="position:absolute;left:69.5px;top:31.2px" width="12.6" height="11.8" viewBox="0 0 12.6 11.8"><path d="M1.6 2.8 L6.3 1.4 L11 2.8" stroke="#111" stroke-width="1.3" fill="none"/><circle cx="6.3" cy="1.2" r="1.1" fill="#000"/><rect x="5.7" y="1" width="1.3" height="10" fill="#222"/><path d="M1.8 2.8 L0.2 6.6 M1.8 2.8 L3.6 6.6 M10.8 2.8 L9 6.6 M10.8 2.8 L12.4 6.6" stroke="#888" stroke-width="0.7" fill="none"/><path d="M-0.2 6.3 H4.2 Q4 8.6 2 8.6 Q0 8.6 -0.2 6.3 Z" fill="#e2e200" stroke="#666" stroke-width="0.5"/><path d="M8.4 6.3 H12.8 Q12.6 8.6 10.6 8.6 Q8.6 8.6 8.4 6.3 Z" fill="#e2e200" stroke="#666" stroke-width="0.5"/><path d="M2.4 11.6 Q6.3 9.6 10.2 11.6 Z" fill="#000"/></svg>
<svg style="position:absolute;left:88.2px;top:31px" width="11" height="11.8" viewBox="0 0 11 11.8"><path d="M8.8 1.4 H2.6 Q1.5 1.4 1.5 2.6 V9.8 H7.8" stroke="#2020ff" stroke-width="2.1" fill="none"/><path d="M5.0 0.3 L0.7 11.0 H10.3 Z" stroke="#000" stroke-width="1.4" fill="none" stroke-linejoin="miter"/></svg>
<svg style="position:absolute;left:105.7px;top:32.2px" width="12" height="11" viewBox="0 0 12 11"><path d="M0.8 0.2 L6.3 8.5 M6.3 0.2 L0.8 8.5 L0.3 10.8" stroke="#a8a8a8" stroke-width="1.6" fill="none"/><path d="M3.2 11 L8.3 5.8 L12 11 Z" fill="#a8a8a8"/></svg>
<svg style="position:absolute;left:123.3px;top:32.2px" width="12" height="11" viewBox="0 0 12 11"><path d="M0.5 0.5 L3.3 5.2 L6.1 0.5 M3.3 5 V10.8" stroke="#a8a8a8" stroke-width="1.7" fill="none"/><path d="M8.2 11 V4.5" stroke="#a8a8a8" stroke-width="1.7" fill="none"/><path d="M4.6 5.6 L8.2 0.2 L11.8 5.6 Z" fill="#a8a8a8"/></svg>
<svg style="position:absolute;left:143.3px;top:32.2px" width="8.4" height="10.6" viewBox="0 0 8.4 10.6"><path d="M0.7 10.3 L4.2 0.5 L7.7 10.3 M2 6.8 H6.4" stroke="#a8a8a8" stroke-width="1.5" fill="none"/></svg>
<div style="left:8.5px;top:45px;width:1px;height:16.7px;background:#c4c4c4;border-right:1px solid #fff;"></div>
<div class="t" style="left:17.8px;top:49.28px;font-size:9px;color:#1e1e1e;transform:scaleX(0.9661);">Function:</div>
<div style="left:56.6px;top:45.3px;width:70.9px;height:14.6px;background:#e6e6e6;border:1px solid #bcbcbc;box-sizing:border-box;"></div>
<div class="t" style="left:58.67px;top:49.28px;font-size:9px;color:#1e1e1e;transform:scaleX(1.0577);">Offset (+/-)</div>
<svg style="position:absolute;left:116.5px;top:51px" width="8" height="5" viewBox="0 0 8 5"><path d="M0.5 0.5 L4 4 L7.5 0.5" stroke="#5a5a5a" stroke-width="1" fill="none"/></svg>
<div class="t" style="left:132.5px;top:49.28px;font-size:9px;color:#1e1e1e;transform:scaleX(0.8930);">Value:</div>
<div style="left:158px;top:45.1px;width:36.7px;height:15.3px;background:#fff;border:1px solid #a5a5a5;box-sizing:border-box;"></div>
<div class="t" style="left:162.68px;top:49.28px;font-size:9px;color:#1e1e1e;transform:scaleX(0.9115);">1.0</div>
<div style="left:193.8px;top:45.3px;width:38.3px;height:15px;background:#e1e1e1;border:1px solid #adadad;box-sizing:border-box;"></div>
<div class="t" style="left:197.11px;top:48.68px;font-size:9px;color:#1e1e1e;transform:scaleX(0.9615);">Execute</div>
<div style="left:227.8px;top:44.3px;width:5.2px;height:17px;background:#d8e4f0;"></div>
<div style="left:6.5px;top:62.7px;width:221.3px;height:65.3px;background:#808080;"></div>
<div style="left:8px;top:64.2px;width:218.8px;height:10.8px;background:#ffffff;border-right:1px solid #b0b0b0;border-bottom:1px solid #b0b0b0;box-sizing:border-box;"></div>
<div class="t" style="left:13.48px;top:65.5px;font-size:9.1px;color:#000;font-weight:bold;">Pump Calibration High Fuel, RPM vs Fuel mm^3</div>
<div style="left:8px;top:74.2px;width:143.16px;height:48.7px;background:#d9d9d9;"></div>
<div style="left:8.2px;top:75.7px;width:33.8px;height:10.2px;background:#f0f0f0;"></div>
<div style="left:44px;top:75.7px;width:34.2px;height:10.2px;background:#f0f0f0;border-right:1px solid #c2c2c2;border-bottom:1px solid #c2c2c2;box-sizing:border-box;"></div>
<div style="left:79.72px;top:75.7px;width:34.2px;height:10.2px;background:#f0f0f0;border-right:1px solid #c2c2c2;border-bottom:1px solid #c2c2c2;box-sizing:border-box;"></div>
<div style="left:115.44px;top:75.7px;width:34.2px;height:10.2px;background:#f0f0f0;border-right:1px solid #c2c2c2;border-bottom:1px solid #c2c2c2;box-sizing:border-box;"></div>
<div style="left:8.2px;top:87.5px;width:33.8px;height:10.2px;background:#dcdcdc;"></div>
<div style="left:44px;top:87.5px;width:34.2px;height:10.2px;background:#d89a9a;"></div>
<div class="t" style="left:62.09px;top:88.32px;font-size:8.6px;color:#1a1a1a;transform:scaleX(0.9200);">1.00</div>
<div style="left:79.72px;top:87.5px;width:34.2px;height:10.2px;background:#ff5050;"></div>
<div class="t" style="left:97.81px;top:88.32px;font-size:8.6px;color:#1a1a1a;transform:scaleX(0.9200);">1.00</div>
<div style="left:115.44px;top:87.5px;width:34.2px;height:10.2px;background:#ff5050;"></div>
<div class="t" style="left:133.53px;top:88.32px;font-size:8.6px;color:#1a1a1a;transform:scaleX(0.9200);">1.00</div>
<div style="left:8.2px;top:99.3px;width:33.8px;height:10.2px;background:#f0f0f0;"></div>
<div style="left:44px;top:99.3px;width:34.2px;height:10.2px;background:#ff5050;"></div>
<div class="t" style="left:62.09px;top:100.12px;font-size:8.6px;color:#1a1a1a;transform:scaleX(0.9200);">1.00</div>
<div style="left:79.72px;top:99.3px;width:34.2px;height:10.2px;background:#ff5050;"></div>
<div class="t" style="left:97.81px;top:100.12px;font-size:8.6px;color:#1a1a1a;transform:scaleX(0.9200);">1.00</div>
<div style="left:115.44px;top:99.3px;width:34.2px;height:10.2px;background:#ff5050;"></div>
<div class="t" style="left:133.53px;top:100.12px;font-size:8.6px;color:#1a1a1a;transform:scaleX(0.9200);">1.00</div>
<div style="left:8.2px;top:111.1px;width:33.8px;height:10.2px;background:#f0f0f0;"></div>
<div style="left:44px;top:111.1px;width:34.2px;height:10.2px;background:#ff5050;"></div>
<div class="t" style="left:62.09px;top:111.92px;font-size:8.6px;color:#1a1a1a;transform:scaleX(0.9200);">1.00</div>
<div style="left:79.72px;top:111.1px;width:34.2px;height:10.2px;background:#ff5050;"></div>
<div class="t" style="left:97.81px;top:111.92px;font-size:8.6px;color:#1a1a1a;transform:scaleX(0.9200);">1.00</div>
<div style="left:115.44px;top:111.1px;width:34.2px;height:10.2px;background:#ff5050;"></div>
<div class="t" style="left:133.53px;top:111.92px;font-size:8.6px;color:#1a1a1a;transform:scaleX(0.9200);">1.00</div>
<div style="left:6.5px;top:128px;width:221.3px;height:20px;background:#f0f0f0;border-top:1px solid #dadada;box-sizing:border-box;"></div>
<svg style="position:absolute;left:218.3px;top:138.5px" width="8" height="8" viewBox="0 0 8 8"><rect x="6" y="0" width="1.5" height="1.5" fill="#a0a0a0"/><rect x="6" y="3" width="1.5" height="1.5" fill="#a0a0a0"/><rect x="3" y="3" width="1.5" height="1.5" fill="#a0a0a0"/><rect x="6" y="6" width="1.5" height="1.5" fill="#a0a0a0"/><rect x="3" y="6" width="1.5" height="1.5" fill="#a0a0a0"/><rect x="0" y="6" width="1.5" height="1.5" fill="#a0a0a0"/></svg>
</div>
<div class="win" style="left:244px;top:291px;width:234px;height:149.4px;">
<div style="left:0px;top:0px;width:234px;height:149.4px;background:linear-gradient(#bccad9 0px,#c6d4e3 10px,#d4e0ed 22px,#d8e4f0 30px);border:1px solid #80868e;border-bottom-color:#8a9098;border-radius:6px 6px 0 0;box-sizing:border-box;"></div>
<svg style="position:absolute;left:6.5px;top:11.8px" width="13.2" height="9.8" viewBox="0 0 13.2 9.8"><rect x="0.3" y="2.1" width="12.6" height="5.6" rx="1" fill="#000"/><rect x="1.20" y="0" width="1.3" height="2.6" fill="#222"/><rect x="1.20" y="7.2" width="1.3" height="2.6" fill="#222"/><rect x="3.60" y="0" width="1.3" height="2.6" fill="#222"/><rect x="3.60" y="7.2" width="1.3" height="2.6" fill="#222"/><rect x="6.00" y="0" width="1.3" height="2.6" fill="#222"/><rect x="6.00" y="7.2" width="1.3" height="2.6" fill="#222"/><rect x="8.40" y="0" width="1.3" height="2.6" fill="#222"/><rect x="8.40" y="7.2" width="1.3" height="2.6" fill="#222"/><rect x="10.80" y="0" width="1.3" height="2.6" fill="#222"/><rect x="10.80" y="7.2" width="1.3" height="2.6" fill="#222"/></svg>
<svg style="position:absolute;left:201px;top:7.5px" width="25.2" height="13.5" viewBox="0 0 25.2 13.5"><rect x="0.5" y="0.5" width="24.2" height="12.5" rx="2.5" fill="#c9d5e2" stroke="#8d9bae" stroke-width="1"/><path d="M9.2 4.6 L14.6 8.6 M14.6 4.6 L9.2 8.6" stroke="#737b86" stroke-width="3.4" stroke-linecap="round" fill="none"/><path d="M9.2 4.6 L14.6 8.6 M14.6 4.6 L9.2 8.6" stroke="#f0f0f0" stroke-width="1.8" stroke-linecap="round" fill="none"/></svg>
<div style="left:6.5px;top:23px;width:221.3px;height:121.4px;background:#f0f0f0;"></div>
<div style="left:8.9px;top:28.7px;width:1px;height:15px;background:#c4c4c4;border-right:1px solid #fff;"></div>
<svg style="position:absolute;left:16.5px;top:31.5px" width="11" height="11" viewBox="0 0 11 11"><rect x="0.5" y="0.5" width="10" height="10" fill="#808000" stroke="#000" stroke-width="1"/><rect x="2.6" y="1" width="5.6" height="4.4" fill="#fff"/><rect x="2.6" y="7" width="6" height="3" fill="#000"/><rect x="6.6" y="7.8" width="1.3" height="1.6" fill="#fff"/></svg>
<svg style="position:absolute;left:35.3px;top:32.1px" width="9.2" height="10.6" viewBox="0 0 9.2 10.6"><path d="M1 1 L8.2 9.6 M8.2 1 L1 9.6" stroke="#ff0000" stroke-width="1.8" fill="none"/></svg>
<svg style="position:absolute;left:52.2px;top:32.4px" width="12" height="10.4" viewBox="0 0 12 10.4"><rect x="0.3" y="0" width="1.1" height="9.6" fill="#a8a8a8"/><path d="M0.3 9.7 H12" stroke="#333" stroke-width="1.1" stroke-dasharray="1.3 1.1" fill="none"/><path d="M0.8 3.6 L3.3 6.2 L5.6 4.2 L8.2 6.6 L11.6 2.2" stroke="#ff2020" stroke-width="1.3" fill="none"/></svg>
<svg style="position:absolute;left:69.5px;top:30.7px" width="12.6" height="11.8" viewBox="0 0 12.6 11.8"><path d="M1.6 2.8 L6.3 1.4 L11 2.8" stroke="#111" stroke-width="1.3" fill="none"/><circle cx="6.3" cy="1.2" r="1.1" fill="#000"/><rect x="5.7" y="1" width="1.3" height="10" fill="#222"/><path d="M1.8 2.8 L0.2 6.6 M1.8 2.8 L3.6 6.6 M10.8 2.8 L9 6.6 M10.8 2.8 L12.4 6.6" stroke="#888" stroke-width="0.7" fill="none"/><path d="M-0.2 6.3 H4.2 Q4 8.6 2 8.6 Q0 8.6 -0.2 6.3 Z" fill="#e2e200" stroke="#666" stroke-width="0.5"/><path d="M8.4 6.3 H12.8 Q12.6 8.6 10.6 8.6 Q8.6 8.6 8.4 6.3 Z" fill="#e2e200" stroke="#666" stroke-width="0.5"/><path d="M2.4 11.6 Q6.3 9.6 10.2 11.6 Z" fill="#000"/></svg>
<svg style="position:absolute;left:88.2px;top:30.5px" width="11" height="11.8" viewBox="0 0 11 11.8"><path d="M8.8 1.4 H2.6 Q1.5 1.4 1.5 2.6 V9.8 H7.8" stroke="#2020ff" stroke-width="2.1" fill="none"/><path d="M5.0 0.3 L0.7 11.0 H10.3 Z" stroke="#000" stroke-width="1.4" fill="none" stroke-linejoin="miter"/></svg>
<svg style="position:absolute;left:105.7px;top:31.7px" width="12" height="11" viewBox="0 0 12 11"><path d="M0.8 0.2 L6.3 8.5 M6.3 0.2 L0.8 8.5 L0.3 10.8" stroke="#a8a8a8" stroke-width="1.6" fill="none"/><path d="M3.2 11 L8.3 5.8 L12 11 Z" fill="#a8a8a8"/></svg>
<svg style="position:absolute;left:123.3px;top:31.7px" width="12" height="11" viewBox="0 0 12 11"><path d="M0.5 0.5 L3.3 5.2 L6.1 0.5 M3.3 5 V10.8" stroke="#a8a8a8" stroke-width="1.7" fill="none"/><path d="M8.2 11 V4.5" stroke="#a8a8a8" stroke-width="1.7" fill="none"/><path d="M4.6 5.6 L8.2 0.2 L11.8 5.6 Z" fill="#a8a8a8"/></svg>
<svg style="position:absolute;left:143.3px;top:31.7px" width="8.4" height="10.6" viewBox="0 0 8.4 10.6"><path d="M0.7 10.3 L4.2 0.5 L7.7 10.3 M2 6.8 H6.4" stroke="#a8a8a8" stroke-width="1.5" fill="none"/></svg>
<div style="left:8.5px;top:47px;width:1px;height:16.7px;background:#c4c4c4;border-right:1px solid #fff;"></div>
<div class="t" style="left:17.8px;top:51.28px;font-size:9px;color:#1e1e1e;transform:scaleX(0.9661);">Function:</div>
<div style="left:56.6px;top:47.3px;width:70.9px;height:14.6px;background:#e6e6e6;border:1px solid #bcbcbc;box-sizing:border-box;"></div>
<div class="t" style="left:58.67px;top:51.28px;font-size:9px;color:#1e1e1e;transform:scaleX(1.0577);">Offset (+/-)</div>
<svg style="position:absolute;left:116.5px;top:53px" width="8" height="5" viewBox="0 0 8 5"><path d="M0.5 0.5 L4 4 L7.5 0.5" stroke="#5a5a5a" stroke-width="1" fill="none"/></svg>
<div class="t" style="left:132.5px;top:51.28px;font-size:9px;color:#1e1e1e;transform:scaleX(0.8930);">Value:</div>
<div style="left:158px;top:47.1px;width:36.7px;height:15.3px;background:#fff;border:1px solid #a5a5a5;box-sizing:border-box;"></div>
<div class="t" style="left:162.68px;top:51.28px;font-size:9px;color:#1e1e1e;transform:scaleX(0.9115);">1.0</div>
<div style="left:193.8px;top:47px;width:38.3px;height:15px;background:#e1e1e1;border:1px solid #adadad;box-sizing:border-box;"></div>
<div class="t" style="left:197.11px;top:50.38px;font-size:9px;color:#1e1e1e;transform:scaleX(0.9615);">Execute</div>
<div style="left:227.8px;top:46px;width:5.2px;height:17px;background:#d8e4f0;"></div>
<div style="left:6.5px;top:64px;width:221.3px;height:60px;background:#808080;"></div>
<div style="left:8px;top:65.5px;width:218.8px;height:10.8px;background:#ffffff;border-right:1px solid #b0b0b0;border-bottom:1px solid #b0b0b0;box-sizing:border-box;"></div>
<div class="t" style="left:13.48px;top:66.8px;font-size:9.1px;color:#000;font-weight:bold;">Pump Calibration High Fuel, RPM vs Fuel mm^3</div>
<div style="left:8px;top:75.5px;width:143.16px;height:48.7px;background:#d9d9d9;"></div>
<div style="left:8.2px;top:77px;width:33.8px;height:10.2px;background:#f0f0f0;"></div>
<div style="left:44px;top:77px;width:34.2px;height:10.2px;background:#f0f0f0;border-right:1px solid #c2c2c2;border-bottom:1px solid #c2c2c2;box-sizing:border-box;"></div>
<div style="left:79.72px;top:77px;width:34.2px;height:10.2px;background:#f0f0f0;border-right:1px solid #c2c2c2;border-bottom:1px solid #c2c2c2;box-sizing:border-box;"></div>
<div style="left:115.44px;top:77px;width:34.2px;height:10.2px;background:#f0f0f0;border-right:1px solid #c2c2c2;border-bottom:1px solid #c2c2c2;box-sizing:border-box;"></div>
<div style="left:8.2px;top:88.8px;width:33.8px;height:10.2px;background:#dcdcdc;"></div>
<div style="left:44px;top:88.8px;width:34.2px;height:10.2px;background:#d89a9a;"></div>
<div class="t" style="left:62.09px;top:89.62px;font-size:8.6px;color:#1a1a1a;transform:scaleX(0.9200);">1.00</div>
<div style="left:79.72px;top:88.8px;width:34.2px;height:10.2px;background:#ff5050;"></div>
<div class="t" style="left:97.81px;top:89.62px;font-size:8.6px;color:#1a1a1a;transform:scaleX(0.9200);">1.00</div>
<div style="left:115.44px;top:88.8px;width:34.2px;height:10.2px;background:#ff5050;"></div>
<div class="t" style="left:133.53px;top:89.62px;font-size:8.6px;color:#1a1a1a;transform:scaleX(0.9200);">1.00</div>
<div style="left:8.2px;top:100.6px;width:33.8px;height:10.2px;background:#f0f0f0;"></div>
<div style="left:44px;top:100.6px;width:34.2px;height:10.2px;background:#ff5050;"></div>
<div class="t" style="left:62.09px;top:101.42px;font-size:8.6px;color:#1a1a1a;transform:scaleX(0.9200);">1.00</div>
<div style="left:79.72px;top:100.6px;width:34.2px;height:10.2px;background:#ff5050;"></div>
<div class="t" style="left:97.81px;top:101.42px;font-size:8.6px;color:#1a1a1a;transform:scaleX(0.9200);">1.00</div>
<div style="left:115.44px;top:100.6px;width:34.2px;height:10.2px;background:#ff5050;"></div>
<div class="t" style="left:133.53px;top:101.42px;font-size:8.6px;color:#1a1a1a;transform:scaleX(0.9200);">1.00</div>
<div style="left:8.2px;top:112.4px;width:33.8px;height:10.2px;background:#f0f0f0;"></div>
<div style="left:44px;top:112.4px;width:34.2px;height:10.2px;background:#ff5050;"></div>
<div class="t" style="left:62.09px;top:113.22px;font-size:8.6px;color:#1a1a1a;transform:scaleX(0.9200);">1.00</div>
<div style="left:79.72px;top:112.4px;width:34.2px;height:10.2px;background:#ff5050;"></div>
<div class="t" style="left:97.81px;top:113.22px;font-size:8.6px;color:#1a1a1a;transform:scaleX(0.9200);">1.00</div>
<div style="left:115.44px;top:112.4px;width:34.2px;height:10.2px;background:#ff5050;"></div>
<div class="t" style="left:133.53px;top:113.22px;font-size:8.6px;color:#1a1a1a;transform:scaleX(0.9200);">1.00</div>
<div style="left:6.5px;top:124px;width:221.3px;height:20px;background:#f0f0f0;border-top:1px solid #dadada;box-sizing:border-box;"></div>
<svg style="position:absolute;left:218.3px;top:134.5px" width="8" height="8" viewBox="0 0 8 8"><rect x="6" y="0" width="1.5" height="1.5" fill="#a0a0a0"/><rect x="6" y="3" width="1.5" height="1.5" fill="#a0a0a0"/><rect x="3" y="3" width="1.5" height="1.5" fill="#a0a0a0"/><rect x="6" y="6" width="1.5" height="1.5" fill="#a0a0a0"/><rect x="3" y="6" width="1.5" height="1.5" fill="#a0a0a0"/><rect x="0" y="6" width="1.5" height="1.5" fill="#a0a0a0"/></svg>
</div>
<div class="win" style="left:482px;top:-27px;width:234.8px;height:160.4px;">
<div style="left:0px;top:0px;width:234.8px;height:160.4px;background:linear-gradient(#bccad9 0px,#c6d4e3 10px,#d4e0ed 22px,#d8e4f0 30px);border:1px solid #80868e;border-bottom-color:#8a9098;border-radius:6px 6px 0 0;box-sizing:border-box;"></div>
<svg style="position:absolute;left:6.5px;top:11.8px" width="13.2" height="9.8" viewBox="0 0 13.2 9.8"><rect x="0.3" y="2.1" width="12.6" height="5.6" rx="1" fill="#000"/><rect x="1.20" y="0" width="1.3" height="2.6" fill="#222"/><rect x="1.20" y="7.2" width="1.3" height="2.6" fill="#222"/><rect x="3.60" y="0" width="1.3" height="2.6" fill="#222"/><rect x="3.60" y="7.2" width="1.3" height="2.6" fill="#222"/><rect x="6.00" y="0" width="1.3" height="2.6" fill="#222"/><rect x="6.00" y="7.2" width="1.3" height="2.6" fill="#222"/><rect x="8.40" y="0" width="1.3" height="2.6" fill="#222"/><rect x="8.40" y="7.2" width="1.3" height="2.6" fill="#222"/><rect x="10.80" y="0" width="1.3" height="2.6" fill="#222"/><rect x="10.80" y="7.2" width="1.3" height="2.6" fill="#222"/></svg>
<svg style="position:absolute;left:201.8px;top:7.5px" width="25.2" height="13.5" viewBox="0 0 25.2 13.5"><rect x="0.5" y="0.5" width="24.2" height="12.5" rx="2.5" fill="#c9d5e2" stroke="#8d9bae" stroke-width="1"/><path d="M9.2 4.6 L14.6 8.6 M14.6 4.6 L9.2 8.6" stroke="#737b86" stroke-width="3.4" stroke-linecap="round" fill="none"/><path d="M9.2 4.6 L14.6 8.6 M14.6 4.6 L9.2 8.6" stroke="#f0f0f0" stroke-width="1.8" stroke-linecap="round" fill="none"/></svg>
<div style="left:6.5px;top:22.3px;width:222.1px;height:133.1px;background:#f0f0f0;"></div>
<div style="left:8.9px;top:28.2px;width:1px;height:15px;background:#c4c4c4;border-right:1px solid #fff;"></div>
<svg style="position:absolute;left:16.5px;top:31px" width="11" height="11" viewBox="0 0 11 11"><rect x="0.5" y="0.5" width="10" height="10" fill="#808000" stroke="#000" stroke-width="1"/><rect x="2.6" y="1" width="5.6" height="4.4" fill="#fff"/><rect x="2.6" y="7" width="6" height="3" fill="#000"/><rect x="6.6" y="7.8" width="1.3" height="1.6" fill="#fff"/></svg>
<svg style="position:absolute;left:35.3px;top:31.6px" width="9.2" height="10.6" viewBox="0 0 9.2 10.6"><path d="M1 1 L8.2 9.6 M8.2 1 L1 9.6" stroke="#ff0000" stroke-width="1.8" fill="none"/></svg>
<svg style="position:absolute;left:52.2px;top:31.9px" width="12" height="10.4" viewBox="0 0 12 10.4"><rect x="0.3" y="0" width="1.1" height="9.6" fill="#a8a8a8"/><path d="M0.3 9.7 H12" stroke="#333" stroke-width="1.1" stroke-dasharray="1.3 1.1" fill="none"/><path d="M0.8 3.6 L3.3 6.2 L5.6 4.2 L8.2 6.6 L11.6 2.2" stroke="#ff2020" stroke-width="1.3" fill="none"/></svg>
<svg style="position:absolute;left:69.5px;top:30.2px" width="12.6" height="11.8" viewBox="0 0 12.6 11.8"><path d="M1.6 2.8 L6.3 1.4 L11 2.8" stroke="#111" stroke-width="1.3" fill="none"/><circle cx="6.3" cy="1.2" r="1.1" fill="#000"/><rect x="5.7" y="1" width="1.3" height="10" fill="#222"/><path d="M1.8 2.8 L0.2 6.6 M1.8 2.8 L3.6 6.6 M10.8 2.8 L9 6.6 M10.8 2.8 L12.4 6.6" stroke="#888" stroke-width="0.7" fill="none"/><path d="M-0.2 6.3 H4.2 Q4 8.6 2 8.6 Q0 8.6 -0.2 6.3 Z" fill="#e2e200" stroke="#666" stroke-width="0.5"/><path d="M8.4 6.3 H12.8 Q12.6 8.6 10.6 8.6 Q8.6 8.6 8.4 6.3 Z" fill="#e2e200" stroke="#666" stroke-width="0.5"/><path d="M2.4 11.6 Q6.3 9.6 10.2 11.6 Z" fill="#000"/></svg>
<svg style="position:absolute;left:88.2px;top:30px" width="11" height="11.8" viewBox="0 0 11 11.8"><path d="M8.8 1.4 H2.6 Q1.5 1.4 1.5 2.6 V9.8 H7.8" stroke="#2020ff" stroke-width="2.1" fill="none"/><path d="M5.0 0.3 L0.7 11.0 H10.3 Z" stroke="#000" stroke-width="1.4" fill="none" stroke-linejoin="miter"/></svg>
<svg style="position:absolute;left:105.7px;top:31.2px" width="12" height="11" viewBox="0 0 12 11"><path d="M0.8 0.2 L6.3 8.5 M6.3 0.2 L0.8 8.5 L0.3 10.8" stroke="#a8a8a8" stroke-width="1.6" fill="none"/><path d="M3.2 11 L8.3 5.8 L12 11 Z" fill="#a8a8a8"/></svg>
<svg style="position:absolute;left:123.3px;top:31.2px" width="12" height="11" viewBox="0 0 12 11"><path d="M0.5 0.5 L3.3 5.2 L6.1 0.5 M3.3 5 V10.8" stroke="#a8a8a8" stroke-width="1.7" fill="none"/><path d="M8.2 11 V4.5" stroke="#a8a8a8" stroke-width="1.7" fill="none"/><path d="M4.6 5.6 L8.2 0.2 L11.8 5.6 Z" fill="#a8a8a8"/></svg>
<svg style="position:absolute;left:143.3px;top:31.2px" width="8.4" height="10.6" viewBox="0 0 8.4 10.6"><path d="M0.7 10.3 L4.2 0.5 L7.7 10.3 M2 6.8 H6.4" stroke="#a8a8a8" stroke-width="1.5" fill="none"/></svg>
<div style="left:8.5px;top:47px;width:1px;height:16.7px;background:#c4c4c4;border-right:1px solid #fff;"></div>
<div class="t" style="left:17.8px;top:51.28px;font-size:9px;color:#1e1e1e;transform:scaleX(0.9661);">Function:</div>
<div style="left:56.6px;top:47.3px;width:70.9px;height:14.6px;background:#e6e6e6;border:1px solid #bcbcbc;box-sizing:border-box;"></div>
<div class="t" style="left:58.67px;top:51.28px;font-size:9px;color:#1e1e1e;transform:scaleX(1.0577);">Offset (+/-)</div>
<svg style="position:absolute;left:116.5px;top:53px" width="8" height="5" viewBox="0 0 8 5"><path d="M0.5 0.5 L4 4 L7.5 0.5" stroke="#5a5a5a" stroke-width="1" fill="none"/></svg>
<div class="t" style="left:132.5px;top:51.28px;font-size:9px;color:#1e1e1e;transform:scaleX(0.8930);">Value:</div>
<div style="left:158px;top:47.1px;width:36.7px;height:15.3px;background:#fff;border:1px solid #a5a5a5;box-sizing:border-box;"></div>
<div class="t" style="left:162.68px;top:51.28px;font-size:9px;color:#1e1e1e;transform:scaleX(0.9115);">1.0</div>
<div style="left:194.6px;top:49.2px;width:38.3px;height:15px;background:#e1e1e1;border:1px solid #adadad;box-sizing:border-box;"></div>
<div class="t" style="left:197.91px;top:52.58px;font-size:9px;color:#1e1e1e;transform:scaleX(0.9615);">Execute</div>
<div style="left:228.6px;top:48.2px;width:5.2px;height:17px;background:#d8e4f0;"></div>
<div style="left:6.5px;top:67.4px;width:222.1px;height:67.6px;background:#808080;"></div>
<div style="left:8px;top:68.9px;width:219.6px;height:10.8px;background:#ffffff;border-right:1px solid #b0b0b0;border-bottom:1px solid #b0b0b0;box-sizing:border-box;"></div>
<div class="t" style="left:13.88px;top:70.2px;font-size:9.1px;color:#000;font-weight:bold;">Pump Calibration High Fuel, RPM vs Fuel mm^3</div>
<div style="left:8px;top:78.9px;width:143.16px;height:48.7px;background:#d9d9d9;"></div>
<div style="left:8.2px;top:80.4px;width:33.8px;height:10.2px;background:#f0f0f0;"></div>
<div style="left:44px;top:80.4px;width:34.2px;height:10.2px;background:#f0f0f0;border-right:1px solid #c2c2c2;border-bottom:1px solid #c2c2c2;box-sizing:border-box;"></div>
<div style="left:79.72px;top:80.4px;width:34.2px;height:10.2px;background:#f0f0f0;border-right:1px solid #c2c2c2;border-bottom:1px solid #c2c2c2;box-sizing:border-box;"></div>
<div style="left:115.44px;top:80.4px;width:34.2px;height:10.2px;background:#f0f0f0;border-right:1px solid #c2c2c2;border-bottom:1px solid #c2c2c2;box-sizing:border-box;"></div>
<div style="left:8.2px;top:92.2px;width:33.8px;height:10.2px;background:#dcdcdc;"></div>
<div style="left:44px;top:92.2px;width:34.2px;height:10.2px;background:#d89a9a;"></div>
<div class="t" style="left:62.09px;top:93.02px;font-size:8.6px;color:#1a1a1a;transform:scaleX(0.9200);">1.00</div>
<div style="left:79.72px;top:92.2px;width:34.2px;height:10.2px;background:#ff5050;"></div>
<div class="t" style="left:97.81px;top:93.02px;font-size:8.6px;color:#1a1a1a;transform:scaleX(0.9200);">1.00</div>
<div style="left:115.44px;top:92.2px;width:34.2px;height:10.2px;background:#ff5050;"></div>
<div class="t" style="left:133.53px;top:93.02px;font-size:8.6px;color:#1a1a1a;transform:scaleX(0.9200);">1.00</div>
<div style="left:8.2px;top:104px;width:33.8px;height:10.2px;background:#f0f0f0;"></div>
<div style="left:44px;top:104px;width:34.2px;height:10.2px;background:#ff5050;"></div>
<div class="t" style="left:62.09px;top:104.82px;font-size:8.6px;color:#1a1a1a;transform:scaleX(0.9200);">1.00</div>
<div style="left:79.72px;top:104px;width:34.2px;height:10.2px;background:#ff5050;"></div>
<div class="t" style="left:97.81px;top:104.82px;font-size:8.6px;color:#1a1a1a;transform:scaleX(0.9200);">1.00</div>
<div style="left:115.44px;top:104px;width:34.2px;height:10.2px;background:#ff5050;"></div>
<div class="t" style="left:133.53px;top:104.82px;font-size:8.6px;color:#1a1a1a;transform:scaleX(0.9200);">1.00</div>
<div style="left:8.2px;top:115.8px;width:33.8px;height:10.2px;background:#f0f0f0;"></div>
<div style="left:44px;top:115.8px;width:34.2px;height:10.2px;background:#ff5050;"></div>
<div class="t" style="left:62.09px;top:116.62px;font-size:8.6px;color:#1a1a1a;transform:scaleX(0.9200);">1.00</div>
<div style="left:79.72px;top:115.8px;width:34.2px;height:10.2px;background:#ff5050;"></div>
<div class="t" style="left:97.81px;top:116.62px;font-size:8.6px;color:#1a1a1a;transform:scaleX(0.9200);">1.00</div>
<div style="left:115.44px;top:115.8px;width:34.2px;height:10.2px;background:#ff5050;"></div>
<div class="t" style="left:133.53px;top:116.62px;font-size:8.6px;color:#1a1a1a;transform:scaleX(0.9200);">1.00</div>
<div style="left:6.5px;top:135px;width:222.1px;height:21.3px;background:#f0f0f0;border-top:1px solid #dadada;box-sizing:border-box;"></div>
<svg style="position:absolute;left:219.1px;top:146.8px" width="8" height="8" viewBox="0 0 8 8"><rect x="6" y="0" width="1.5" height="1.5" fill="#a0a0a0"/><rect x="6" y="3" width="1.5" height="1.5" fill="#a0a0a0"/><rect x="3" y="3" width="1.5" height="1.5" fill="#a0a0a0"/><rect x="6" y="6" width="1.5" height="1.5" fill="#a0a0a0"/><rect x="3" y="6" width="1.5" height="1.5" fill="#a0a0a0"/><rect x="0" y="6" width="1.5" height="1.5" fill="#a0a0a0"/></svg>
</div>
<div class="win" style="left:482px;top:137.2px;width:235px;height:151.3px;">
<div style="left:0px;top:0px;width:235px;height:151.3px;background:linear-gradient(#bccad9 0px,#c6d4e3 10px,#d4e0ed 22px,#d8e4f0 30px);border:1px solid #80868e;border-bottom-color:#8a9098;border-radius:6px 6px 0 0;box-sizing:border-box;"></div>
<svg style="position:absolute;left:6.5px;top:11.8px" width="13.2" height="9.8" viewBox="0 0 13.2 9.8"><rect x="0.3" y="2.1" width="12.6" height="5.6" rx="1" fill="#000"/><rect x="1.20" y="0" width="1.3" height="2.6" fill="#222"/><rect x="1.20" y="7.2" width="1.3" height="2.6" fill="#222"/><rect x="3.60" y="0" width="1.3" height="2.6" fill="#222"/><rect x="3.60" y="7.2" width="1.3" height="2.6" fill="#222"/><rect x="6.00" y="0" width="1.3" height="2.6" fill="#222"/><rect x="6.00" y="7.2" width="1.3" height="2.6" fill="#222"/><rect x="8.40" y="0" width="1.3" height="2.6" fill="#222"/><rect x="8.40" y="7.2" width="1.3" height="2.6" fill="#222"/><rect x="10.80" y="0" width="1.3" height="2.6" fill="#222"/><rect x="10.80" y="7.2" width="1.3" height="2.6" fill="#222"/></svg>
<svg style="position:absolute;left:202px;top:7.5px" width="25.2" height="13.5" viewBox="0 0 25.2 13.5"><rect x="0.5" y="0.5" width="24.2" height="12.5" rx="2.5" fill="#c9d5e2" stroke="#8d9bae" stroke-width="1"/><path d="M9.2 4.6 L14.6 8.6 M14.6 4.6 L9.2 8.6" stroke="#737b86" stroke-width="3.4" stroke-linecap="round" fill="none"/><path d="M9.2 4.6 L14.6 8.6 M14.6 4.6 L9.2 8.6" stroke="#f0f0f0" stroke-width="1.8" stroke-linecap="round" fill="none"/></svg>
<div style="left:6.5px;top:23.6px;width:222.3px;height:122.7px;background:#f0f0f0;"></div>
<div style="left:8.9px;top:29.5px;width:1px;height:15px;background:#c4c4c4;border-right:1px solid #fff;"></div>
<svg style="position:absolute;left:16.5px;top:32.3px" width="11" height="11" viewBox="0 0 11 11"><rect x="0.5" y="0.5" width="10" height="10" fill="#808000" stroke="#000" stroke-width="1"/><rect x="2.6" y="1" width="5.6" height="4.4" fill="#fff"/><rect x="2.6" y="7" width="6" height="3" fill="#000"/><rect x="6.6" y="7.8" width="1.3" height="1.6" fill="#fff"/></svg>
<svg style="position:absolute;left:35.3px;top:32.9px" width="9.2" height="10.6" viewBox="0 0 9.2 10.6"><path d="M1 1 L8.2 9.6 M8.2 1 L1 9.6" stroke="#ff0000" stroke-width="1.8" fill="none"/></svg>
<svg style="position:absolute;left:52.2px;top:33.2px" width="12" height="10.4" viewBox="0 0 12 10.4"><rect x="0.3" y="0" width="1.1" height="9.6" fill="#a8a8a8"/><path d="M0.3 9.7 H12" stroke="#333" stroke-width="1.1" stroke-dasharray="1.3 1.1" fill="none"/><path d="M0.8 3.6 L3.3 6.2 L5.6 4.2 L8.2 6.6 L11.6 2.2" stroke="#ff2020" stroke-width="1.3" fill="none"/></svg>
<svg style="position:absolute;left:69.5px;top:31.5px" width="12.6" height="11.8" viewBox="0 0 12.6 11.8"><path d="M1.6 2.8 L6.3 1.4 L11 2.8" stroke="#111" stroke-width="1.3" fill="none"/><circle cx="6.3" cy="1.2" r="1.1" fill="#000"/><rect x="5.7" y="1" width="1.3" height="10" fill="#222"/><path d="M1.8 2.8 L0.2 6.6 M1.8 2.8 L3.6 6.6 M10.8 2.8 L9 6.6 M10.8 2.8 L12.4 6.6" stroke="#888" stroke-width="0.7" fill="none"/><path d="M-0.2 6.3 H4.2 Q4 8.6 2 8.6 Q0 8.6 -0.2 6.3 Z" fill="#e2e200" stroke="#666" stroke-width="0.5"/><path d="M8.4 6.3 H12.8 Q12.6 8.6 10.6 8.6 Q8.6 8.6 8.4 6.3 Z" fill="#e2e200" stroke="#666" stroke-width="0.5"/><path d="M2.4 11.6 Q6.3 9.6 10.2 11.6 Z" fill="#000"/></svg>
<svg style="position:absolute;left:88.2px;top:31.3px" width="11" height="11.8" viewBox="0 0 11 11.8"><path d="M8.8 1.4 H2.6 Q1.5 1.4 1.5 2.6 V9.8 H7.8" stroke="#2020ff" stroke-width="2.1" fill="none"/><path d="M5.0 0.3 L0.7 11.0 H10.3 Z" stroke="#000" stroke-width="1.4" fill="none" stroke-linejoin="miter"/></svg>
<svg style="position:absolute;left:105.7px;top:32.5px" width="12" height="11" viewBox="0 0 12 11"><path d="M0.8 0.2 L6.3 8.5 M6.3 0.2 L0.8 8.5 L0.3 10.8" stroke="#a8a8a8" stroke-width="1.6" fill="none"/><path d="M3.2 11 L8.3 5.8 L12 11 Z" fill="#a8a8a8"/></svg>
<svg style="position:absolute;left:123.3px;top:32.5px" width="12" height="11" viewBox="0 0 12 11"><path d="M0.5 0.5 L3.3 5.2 L6.1 0.5 M3.3 5 V10.8" stroke="#a8a8a8" stroke-width="1.7" fill="none"/><path d="M8.2 11 V4.5" stroke="#a8a8a8" stroke-width="1.7" fill="none"/><path d="M4.6 5.6 L8.2 0.2 L11.8 5.6 Z" fill="#a8a8a8"/></svg>
<svg style="position:absolute;left:143.3px;top:32.5px" width="8.4" height="10.6" viewBox="0 0 8.4 10.6"><path d="M0.7 10.3 L4.2 0.5 L7.7 10.3 M2 6.8 H6.4" stroke="#a8a8a8" stroke-width="1.5" fill="none"/></svg>
<div style="left:8.5px;top:45.8px;width:1px;height:16.7px;background:#c4c4c4;border-right:1px solid #fff;"></div>
<div class="t" style="left:17.8px;top:50.08px;font-size:9px;color:#1e1e1e;transform:scaleX(0.9661);">Function:</div>
<div style="left:56.6px;top:46.1px;width:70.9px;height:14.6px;background:#e6e6e6;border:1px solid #bcbcbc;box-sizing:border-box;"></div>
<div class="t" style="left:58.67px;top:50.08px;font-size:9px;color:#1e1e1e;transform:scaleX(1.0577);">Offset (+/-)</div>
<svg style="position:absolute;left:116.5px;top:51.8px" width="8" height="5" viewBox="0 0 8 5"><path d="M0.5 0.5 L4 4 L7.5 0.5" stroke="#5a5a5a" stroke-width="1" fill="none"/></svg>
<div class="t" style="left:132.5px;top:50.08px;font-size:9px;color:#1e1e1e;transform:scaleX(0.8930);">Value:</div>
<div style="left:158px;top:45.9px;width:36.7px;height:15.3px;background:#fff;border:1px solid #a5a5a5;box-sizing:border-box;"></div>
<div class="t" style="left:162.68px;top:50.08px;font-size:9px;color:#1e1e1e;transform:scaleX(0.9115);">1.0</div>
<div style="left:194.8px;top:46.3px;width:38.3px;height:15px;background:#e1e1e1;border:1px solid #adadad;box-sizing:border-box;"></div>
<div class="t" style="left:198.11px;top:49.68px;font-size:9px;color:#1e1e1e;transform:scaleX(0.9615);">Execute</div>
<div style="left:228.8px;top:45.3px;width:5.2px;height:17px;background:#d8e4f0;"></div>
<div style="left:6.5px;top:62.8px;width:222.3px;height:64px;background:#808080;"></div>
<div style="left:8px;top:64.3px;width:219.8px;height:10.8px;background:#ffffff;border-right:1px solid #b0b0b0;border-bottom:1px solid #b0b0b0;box-sizing:border-box;"></div>
<div class="t" style="left:13.98px;top:65.6px;font-size:9.1px;color:#000;font-weight:bold;">Pump Calibration High Fuel, RPM vs Fuel mm^3</div>
<div style="left:8px;top:74.3px;width:143.16px;height:48.7px;background:#d9d9d9;"></div>
<div style="left:8.2px;top:75.8px;width:33.8px;height:10.2px;background:#f0f0f0;"></div>
<div style="left:44px;top:75.8px;width:34.2px;height:10.2px;background:#f0f0f0;border-right:1px solid #c2c2c2;border-bottom:1px solid #c2c2c2;box-sizing:border-box;"></div>
<div style="left:79.72px;top:75.8px;width:34.2px;height:10.2px;background:#f0f0f0;border-right:1px solid #c2c2c2;border-bottom:1px solid #c2c2c2;box-sizing:border-box;"></div>
<div style="left:115.44px;top:75.8px;width:34.2px;height:10.2px;background:#f0f0f0;border-right:1px solid #c2c2c2;border-bottom:1px solid #c2c2c2;box-sizing:border-box;"></div>
<div style="left:8.2px;top:87.6px;width:33.8px;height:10.2px;background:#dcdcdc;"></div>
<div style="left:44px;top:87.6px;width:34.2px;height:10.2px;background:#d89a9a;"></div>
<div class="t" style="left:62.09px;top:88.42px;font-size:8.6px;color:#1a1a1a;transform:scaleX(0.9200);">1.00</div>
<div style="left:79.72px;top:87.6px;width:34.2px;height:10.2px;background:#ff5050;"></div>
<div class="t" style="left:97.81px;top:88.42px;font-size:8.6px;color:#1a1a1a;transform:scaleX(0.9200);">1.00</div>
<div style="left:115.44px;top:87.6px;width:34.2px;height:10.2px;background:#ff5050;"></div>
<div class="t" style="left:133.53px;top:88.42px;font-size:8.6px;color:#1a1a1a;transform:scaleX(0.9200);">1.00</div>
<div style="left:8.2px;top:99.4px;width:33.8px;height:10.2px;background:#f0f0f0;"></div>
<div style="left:44px;top:99.4px;width:34.2px;height:10.2px;background:#ff5050;"></div>
<div class="t" style="left:62.09px;top:100.22px;font-size:8.6px;color:#1a1a1a;transform:scaleX(0.9200);">1.00</div>
<div style="left:79.72px;top:99.4px;width:34.2px;height:10.2px;background:#ff5050;"></div>
<div class="t" style="left:97.81px;top:100.22px;font-size:8.6px;color:#1a1a1a;transform:scaleX(0.9200);">1.00</div>
<div style="left:115.44px;top:99.4px;width:34.2px;height:10.2px;background:#ff5050;"></div>
<div class="t" style="left:133.53px;top:100.22px;font-size:8.6px;color:#1a1a1a;transform:scaleX(0.9200);">1.00</div>
<div style="left:8.2px;top:111.2px;width:33.8px;height:10.2px;background:#f0f0f0;"></div>
<div style="left:44px;top:111.2px;width:34.2px;height:10.2px;background:#ff5050;"></div>
<div class="t" style="left:62.09px;top:112.02px;font-size:8.6px;color:#1a1a1a;transform:scaleX(0.9200);">1.00</div>
<div style="left:79.72px;top:111.2px;width:34.2px;height:10.2px;background:#ff5050;"></div>
<div class="t" style="left:97.81px;top:112.02px;font-size:8.6px;color:#1a1a1a;transform:scaleX(0.9200);">1.00</div>
<div style="left:115.44px;top:111.2px;width:34.2px;height:10.2px;background:#ff5050;"></div>
<div class="t" style="left:133.53px;top:112.02px;font-size:8.6px;color:#1a1a1a;transform:scaleX(0.9200);">1.00</div>
<div style="left:6.5px;top:126.8px;width:222.3px;height:21px;background:#f0f0f0;border-top:1px solid #dadada;box-sizing:border-box;"></div>
<svg style="position:absolute;left:219.3px;top:138.3px" width="8" height="8" viewBox="0 0 8 8"><rect x="6" y="0" width="1.5" height="1.5" fill="#a0a0a0"/><rect x="6" y="3" width="1.5" height="1.5" fill="#a0a0a0"/><rect x="3" y="3" width="1.5" height="1.5" fill="#a0a0a0"/><rect x="6" y="6" width="1.5" height="1.5" fill="#a0a0a0"/><rect x="3" y="6" width="1.5" height="1.5" fill="#a0a0a0"/><rect x="0" y="6" width="1.5" height="1.5" fill="#a0a0a0"/></svg>
</div>
<div class="win" style="left:482px;top:291px;width:233.5px;height:149.6px;">
<div style="left:0px;top:0px;width:233.5px;height:149.6px;background:linear-gradient(#bccad9 0px,#c6d4e3 10px,#d4e0ed 22px,#d8e4f0 30px);border:1px solid #80868e;border-bottom-color:#8a9098;border-radius:6px 6px 0 0;box-sizing:border-box;"></div>
<svg style="position:absolute;left:6.5px;top:11.8px" width="13.2" height="9.8" viewBox="0 0 13.2 9.8"><rect x="0.3" y="2.1" width="12.6" height="5.6" rx="1" fill="#000"/><rect x="1.20" y="0" width="1.3" height="2.6" fill="#222"/><rect x="1.20" y="7.2" width="1.3" height="2.6" fill="#222"/><rect x="3.60" y="0" width="1.3" height="2.6" fill="#222"/><rect x="3.60" y="7.2" width="1.3" height="2.6" fill="#222"/><rect x="6.00" y="0" width="1.3" height="2.6" fill="#222"/><rect x="6.00" y="7.2" width="1.3" height="2.6" fill="#222"/><rect x="8.40" y="0" width="1.3" height="2.6" fill="#222"/><rect x="8.40" y="7.2" width="1.3" height="2.6" fill="#222"/><rect x="10.80" y="0" width="1.3" height="2.6" fill="#222"/><rect x="10.80" y="7.2" width="1.3" height="2.6" fill="#222"/></svg>
<svg style="position:absolute;left:200.5px;top:7.5px" width="25.2" height="13.5" viewBox="0 0 25.2 13.5"><rect x="0.5" y="0.5" width="24.2" height="12.5" rx="2.5" fill="#c9d5e2" stroke="#8d9bae" stroke-width="1"/><path d="M9.2 4.6 L14.6 8.6 M14.6 4.6 L9.2 8.6" stroke="#737b86" stroke-width="3.4" stroke-linecap="round" fill="none"/><path d="M9.2 4.6 L14.6 8.6 M14.6 4.6 L9.2 8.6" stroke="#f0f0f0" stroke-width="1.8" stroke-linecap="round" fill="none"/></svg>
<div style="left:6.5px;top:23px;width:220.8px;height:121.6px;background:#f0f0f0;"></div>
<div style="left:8.9px;top:28.7px;width:1px;height:15px;background:#c4c4c4;border-right:1px solid #fff;"></div>
<svg style="position:absolute;left:16.5px;top:31.5px" width="11" height="11" viewBox="0 0 11 11"><rect x="0.5" y="0.5" width="10" height="10" fill="#808000" stroke="#000" stroke-width="1"/><rect x="2.6" y="1" width="5.6" height="4.4" fill="#fff"/><rect x="2.6" y="7" width="6" height="3" fill="#000"/><rect x="6.6" y="7.8" width="1.3" height="1.6" fill="#fff"/></svg>
<svg style="position:absolute;left:35.3px;top:32.1px" width="9.2" height="10.6" viewBox="0 0 9.2 10.6"><path d="M1 1 L8.2 9.6 M8.2 1 L1 9.6" stroke="#ff0000" stroke-width="1.8" fill="none"/></svg>
<svg style="position:absolute;left:52.2px;top:32.4px" width="12" height="10.4" viewBox="0 0 12 10.4"><rect x="0.3" y="0" width="1.1" height="9.6" fill="#a8a8a8"/><path d="M0.3 9.7 H12" stroke="#333" stroke-width="1.1" stroke-dasharray="1.3 1.1" fill="none"/><path d="M0.8 3.6 L3.3 6.2 L5.6 4.2 L8.2 6.6 L11.6 2.2" stroke="#ff2020" stroke-width="1.3" fill="none"/></svg>
<svg style="position:absolute;left:69.5px;top:30.7px" width="12.6" height="11.8" viewBox="0 0 12.6 11.8"><path d="M1.6 2.8 L6.3 1.4 L11 2.8" stroke="#111" stroke-width="1.3" fill="none"/><circle cx="6.3" cy="1.2" r="1.1" fill="#000"/><rect x="5.7" y="1" width="1.3" height="10" fill="#222"/><path d="M1.8 2.8 L0.2 6.6 M1.8 2.8 L3.6 6.6 M10.8 2.8 L9 6.6 M10.8 2.8 L12.4 6.6" stroke="#888" stroke-width="0.7" fill="none"/><path d="M-0.2 6.3 H4.2 Q4 8.6 2 8.6 Q0 8.6 -0.2 6.3 Z" fill="#e2e200" stroke="#666" stroke-width="0.5"/><path d="M8.4 6.3 H12.8 Q12.6 8.6 10.6 8.6 Q8.6 8.6 8.4 6.3 Z" fill="#e2e200" stroke="#666" stroke-width="0.5"/><path d="M2.4 11.6 Q6.3 9.6 10.2 11.6 Z" fill="#000"/></svg>
<svg style="position:absolute;left:88.2px;top:30.5px" width="11" height="11.8" viewBox="0 0 11 11.8"><path d="M8.8 1.4 H2.6 Q1.5 1.4 1.5 2.6 V9.8 H7.8" stroke="#2020ff" stroke-width="2.1" fill="none"/><path d="M5.0 0.3 L0.7 11.0 H10.3 Z" stroke="#000" stroke-width="1.4" fill="none" stroke-linejoin="miter"/></svg>
<svg style="position:absolute;left:105.7px;top:31.7px" width="12" height="11" viewBox="0 0 12 11"><path d="M0.8 0.2 L6.3 8.5 M6.3 0.2 L0.8 8.5 L0.3 10.8" stroke="#a8a8a8" stroke-width="1.6" fill="none"/><path d="M3.2 11 L8.3 5.8 L12 11 Z" fill="#a8a8a8"/></svg>
<svg style="position:absolute;left:123.3px;top:31.7px" width="12" height="11" viewBox="0 0 12 11"><path d="M0.5 0.5 L3.3 5.2 L6.1 0.5 M3.3 5 V10.8" stroke="#a8a8a8" stroke-width="1.7" fill="none"/><path d="M8.2 11 V4.5" stroke="#a8a8a8" stroke-width="1.7" fill="none"/><path d="M4.6 5.6 L8.2 0.2 L11.8 5.6 Z" fill="#a8a8a8"/></svg>
<svg style="position:absolute;left:143.3px;top:31.7px" width="8.4" height="10.6" viewBox="0 0 8.4 10.6"><path d="M0.7 10.3 L4.2 0.5 L7.7 10.3 M2 6.8 H6.4" stroke="#a8a8a8" stroke-width="1.5" fill="none"/></svg>
<div style="left:8.5px;top:45px;width:1px;height:16.7px;background:#c4c4c4;border-right:1px solid #fff;"></div>
<div class="t" style="left:17.8px;top:49.28px;font-size:9px;color:#1e1e1e;transform:scaleX(0.9661);">Function:</div>
<div style="left:56.6px;top:45.3px;width:70.9px;height:14.6px;background:#e6e6e6;border:1px solid #bcbcbc;box-sizing:border-box;"></div>
<div class="t" style="left:58.67px;top:49.28px;font-size:9px;color:#1e1e1e;transform:scaleX(1.0577);">Offset (+/-)</div>
<svg style="position:absolute;left:116.5px;top:51px" width="8" height="5" viewBox="0 0 8 5"><path d="M0.5 0.5 L4 4 L7.5 0.5" stroke="#5a5a5a" stroke-width="1" fill="none"/></svg>
<div class="t" style="left:132.5px;top:49.28px;font-size:9px;color:#1e1e1e;transform:scaleX(0.8930);">Value:</div>
<div style="left:158px;top:45.1px;width:36.7px;height:15.3px;background:#fff;border:1px solid #a5a5a5;box-sizing:border-box;"></div>
<div class="t" style="left:162.68px;top:49.28px;font-size:9px;color:#1e1e1e;transform:scaleX(0.9115);">1.0</div>
<div style="left:193.3px;top:45.5px;width:38.3px;height:15px;background:#e1e1e1;border:1px solid #adadad;box-sizing:border-box;"></div>
<div class="t" style="left:196.61px;top:48.88px;font-size:9px;color:#1e1e1e;transform:scaleX(0.9615);">Execute</div>
<div style="left:227.3px;top:44.5px;width:5.2px;height:17px;background:#d8e4f0;"></div>
<div style="left:6.5px;top:61px;width:220.8px;height:64px;background:#808080;"></div>
<div style="left:8px;top:62.5px;width:218.3px;height:10.8px;background:#ffffff;border-right:1px solid #b0b0b0;border-bottom:1px solid #b0b0b0;box-sizing:border-box;"></div>
<div class="t" style="left:13.23px;top:63.8px;font-size:9.1px;color:#000;font-weight:bold;">Pump Calibration High Fuel, RPM vs Fuel mm^3</div>
<div style="left:8px;top:72.5px;width:143.16px;height:48.7px;background:#d9d9d9;"></div>
<div style="left:8.2px;top:74px;width:33.8px;height:10.2px;background:#f0f0f0;"></div>
<div style="left:44px;top:74px;width:34.2px;height:10.2px;background:#f0f0f0;border-right:1px solid #c2c2c2;border-bottom:1px solid #c2c2c2;box-sizing:border-box;"></div>
<div style="left:79.72px;top:74px;width:34.2px;height:10.2px;background:#f0f0f0;border-right:1px solid #c2c2c2;border-bottom:1px solid #c2c2c2;box-sizing:border-box;"></div>
<div style="left:115.44px;top:74px;width:34.2px;height:10.2px;background:#f0f0f0;border-right:1px solid #c2c2c2;border-bottom:1px solid #c2c2c2;box-sizing:border-box;"></div>
<div style="left:8.2px;top:85.8px;width:33.8px;height:10.2px;background:#dcdcdc;"></div>
<div style="left:44px;top:85.8px;width:34.2px;height:10.2px;background:#d89a9a;"></div>
<div class="t" style="left:62.09px;top:86.62px;font-size:8.6px;color:#1a1a1a;transform:scaleX(0.9200);">1.00</div>
<div style="left:79.72px;top:85.8px;width:34.2px;height:10.2px;background:#ff5050;"></div>
<div class="t" style="left:97.81px;top:86.62px;font-size:8.6px;color:#1a1a1a;transform:scaleX(0.9200);">1.00</div>
<div style="left:115.44px;top:85.8px;width:34.2px;height:10.2px;background:#ff5050;"></div>
<div class="t" style="left:133.53px;top:86.62px;font-size:8.6px;color:#1a1a1a;transform:scaleX(0.9200);">1.00</div>
<div style="left:8.2px;top:97.6px;width:33.8px;height:10.2px;background:#f0f0f0;"></div>
<div style="left:44px;top:97.6px;width:34.2px;height:10.2px;background:#ff5050;"></div>
<div class="t" style="left:62.09px;top:98.42px;font-size:8.6px;color:#1a1a1a;transform:scaleX(0.9200);">1.00</div>
<div style="left:79.72px;top:97.6px;width:34.2px;height:10.2px;background:#ff5050;"></div>
<div class="t" style="left:97.81px;top:98.42px;font-size:8.6px;color:#1a1a1a;transform:scaleX(0.9200);">1.00</div>
<div style="left:115.44px;top:97.6px;width:34.2px;height:10.2px;background:#ff5050;"></div>
<div class="t" style="left:133.53px;top:98.42px;font-size:8.6px;color:#1a1a1a;transform:scaleX(0.9200);">1.00</div>
<div style="left:8.2px;top:109.4px;width:33.8px;height:10.2px;background:#f0f0f0;"></div>
<div style="left:44px;top:109.4px;width:34.2px;height:10.2px;background:#ff5050;"></div>
<div class="t" style="left:62.09px;top:110.22px;font-size:8.6px;color:#1a1a1a;transform:scaleX(0.9200);">1.00</div>
<div style="left:79.72px;top:109.4px;width:34.2px;height:10.2px;background:#ff5050;"></div>
<div class="t" style="left:97.81px;top:110.22px;font-size:8.6px;color:#1a1a1a;transform:scaleX(0.9200);">1.00</div>
<div style="left:115.44px;top:109.4px;width:34.2px;height:10.2px;background:#ff5050;"></div>
<div class="t" style="left:133.53px;top:110.22px;font-size:8.6px;color:#1a1a1a;transform:scaleX(0.9200);">1.00</div>
<div style="left:6.5px;top:125px;width:220.8px;height:19.5px;background:#f0f0f0;border-top:1px solid #dadada;box-sizing:border-box;"></div>
<svg style="position:absolute;left:217.8px;top:135px" width="8" height="8" viewBox="0 0 8 8"><rect x="6" y="0" width="1.5" height="1.5" fill="#a0a0a0"/><rect x="6" y="3" width="1.5" height="1.5" fill="#a0a0a0"/><rect x="3" y="3" width="1.5" height="1.5" fill="#a0a0a0"/><rect x="6" y="6" width="1.5" height="1.5" fill="#a0a0a0"/><rect x="3" y="6" width="1.5" height="1.5" fill="#a0a0a0"/><rect x="0" y="6" width="1.5" height="1.5" fill="#a0a0a0"/></svg>
</div>
<div class="win" style="left:22px;top:5.4px;width:679.7px;height:223.6px;">
<div style="left:0px;top:0px;width:679.7px;height:223.6px;background:linear-gradient(#bccad9 0px,#c6d4e3 10px,#d4e0ed 22px,#d8e4f0 30px);border:1px solid #80868e;border-bottom-color:#8a9098;border-radius:6px 6px 0 0;box-sizing:border-box;"></div>
<svg style="position:absolute;left:7.1px;top:9.9px" width="13.2" height="9.8" viewBox="0 0 13.2 9.8"><rect x="0.3" y="2.1" width="12.6" height="5.6" rx="1" fill="#000"/><rect x="1.20" y="0" width="1.3" height="2.6" fill="#222"/><rect x="1.20" y="7.2" width="1.3" height="2.6" fill="#222"/><rect x="3.60" y="0" width="1.3" height="2.6" fill="#222"/><rect x="3.60" y="7.2" width="1.3" height="2.6" fill="#222"/><rect x="6.00" y="0" width="1.3" height="2.6" fill="#222"/><rect x="6.00" y="7.2" width="1.3" height="2.6" fill="#222"/><rect x="8.40" y="0" width="1.3" height="2.6" fill="#222"/><rect x="8.40" y="7.2" width="1.3" height="2.6" fill="#222"/><rect x="10.80" y="0" width="1.3" height="2.6" fill="#222"/><rect x="10.80" y="7.2" width="1.3" height="2.6" fill="#222"/></svg>
<div class="t" style="left:23.87px;top:11.25px;font-size:9.15px;color:#9ea6b0;">Pump Calibration Low Fuel, RPM vs Fuel mm^3</div>
<svg style="position:absolute;left:646.7px;top:7.85px" width="25.2" height="13.5" viewBox="0 0 25.2 13.5"><rect x="0.5" y="0.5" width="24.2" height="12.5" rx="2.5" fill="#c9d5e2" stroke="#8d9bae" stroke-width="1"/><path d="M9.2 4.6 L14.6 8.6 M14.6 4.6 L9.2 8.6" stroke="#737b86" stroke-width="3.4" stroke-linecap="round" fill="none"/><path d="M9.2 4.6 L14.6 8.6 M14.6 4.6 L9.2 8.6" stroke="#f0f0f0" stroke-width="1.8" stroke-linecap="round" fill="none"/></svg>
<div style="left:6px;top:24.4px;width:667.2px;height:193px;background:#f0f0f0;"></div>
<div style="left:8.2px;top:25.8px;width:1px;height:15px;background:#c4c4c4;border-right:1px solid #fff;"></div>
<svg style="position:absolute;left:15.8px;top:28.6px" width="11" height="11" viewBox="0 0 11 11"><rect x="0.5" y="0.5" width="10" height="10" fill="#808000" stroke="#000" stroke-width="1"/><rect x="2.6" y="1" width="5.6" height="4.4" fill="#fff"/><rect x="2.6" y="7" width="6" height="3" fill="#000"/><rect x="6.6" y="7.8" width="1.3" height="1.6" fill="#fff"/></svg>
<svg style="position:absolute;left:34.6px;top:29.2px" width="9.2" height="10.6" viewBox="0 0 9.2 10.6"><path d="M1 1 L8.2 9.6 M8.2 1 L1 9.6" stroke="#ff0000" stroke-width="1.8" fill="none"/></svg>
<svg style="position:absolute;left:51.5px;top:29.5px" width="12" height="10.4" viewBox="0 0 12 10.4"><rect x="0.3" y="0" width="1.1" height="9.6" fill="#a8a8a8"/><path d="M0.3 9.7 H12" stroke="#333" stroke-width="1.1" stroke-dasharray="1.3 1.1" fill="none"/><path d="M0.8 3.6 L3.3 6.2 L5.6 4.2 L8.2 6.6 L11.6 2.2" stroke="#ff2020" stroke-width="1.3" fill="none"/></svg>
<svg style="position:absolute;left:68.8px;top:27.8px" width="12.6" height="11.8" viewBox="0 0 12.6 11.8"><path d="M1.6 2.8 L6.3 1.4 L11 2.8" stroke="#111" stroke-width="1.3" fill="none"/><circle cx="6.3" cy="1.2" r="1.1" fill="#000"/><rect x="5.7" y="1" width="1.3" height="10" fill="#222"/><path d="M1.8 2.8 L0.2 6.6 M1.8 2.8 L3.6 6.6 M10.8 2.8 L9 6.6 M10.8 2.8 L12.4 6.6" stroke="#888" stroke-width="0.7" fill="none"/><path d="M-0.2 6.3 H4.2 Q4 8.6 2 8.6 Q0 8.6 -0.2 6.3 Z" fill="#e2e200" stroke="#666" stroke-width="0.5"/><path d="M8.4 6.3 H12.8 Q12.6 8.6 10.6 8.6 Q8.6 8.6 8.4 6.3 Z" fill="#e2e200" stroke="#666" stroke-width="0.5"/><path d="M2.4 11.6 Q6.3 9.6 10.2 11.6 Z" fill="#000"/></svg>
<svg style="position:absolute;left:87.5px;top:27.6px" width="11" height="11.8" viewBox="0 0 11 11.8"><path d="M8.8 1.4 H2.6 Q1.5 1.4 1.5 2.6 V9.8 H7.8" stroke="#2020ff" stroke-width="2.1" fill="none"/><path d="M5.0 0.3 L0.7 11.0 H10.3 Z" stroke="#000" stroke-width="1.4" fill="none" stroke-linejoin="miter"/></svg>
<svg style="position:absolute;left:105px;top:28.8px" width="12" height="11" viewBox="0 0 12 11"><path d="M0.8 0.2 L6.3 8.5 M6.3 0.2 L0.8 8.5 L0.3 10.8" stroke="#a8a8a8" stroke-width="1.6" fill="none"/><path d="M3.2 11 L8.3 5.8 L12 11 Z" fill="#a8a8a8"/></svg>
<svg style="position:absolute;left:122.6px;top:28.8px" width="12" height="11" viewBox="0 0 12 11"><path d="M0.5 0.5 L3.3 5.2 L6.1 0.5 M3.3 5 V10.8" stroke="#a8a8a8" stroke-width="1.7" fill="none"/><path d="M8.2 11 V4.5" stroke="#a8a8a8" stroke-width="1.7" fill="none"/><path d="M4.6 5.6 L8.2 0.2 L11.8 5.6 Z" fill="#a8a8a8"/></svg>
<svg style="position:absolute;left:142.6px;top:28.8px" width="8.4" height="10.6" viewBox="0 0 8.4 10.6"><path d="M0.7 10.3 L4.2 0.5 L7.7 10.3 M2 6.8 H6.4" stroke="#a8a8a8" stroke-width="1.5" fill="none"/></svg>
<div style="left:158.6px;top:25.8px;width:1px;height:16px;background:#c4c4c4;border-right:1px solid #fff;"></div>
<div class="t" style="left:166.5px;top:30.08px;font-size:9px;color:#1e1e1e;transform:scaleX(0.9661);">Function:</div>
<div style="left:205.3px;top:26.1px;width:70.9px;height:14.6px;background:#e6e6e6;border:1px solid #bcbcbc;box-sizing:border-box;"></div>
<div class="t" style="left:207.37px;top:30.08px;font-size:9px;color:#1e1e1e;transform:scaleX(1.0577);">Offset (+/-)</div>
<svg style="position:absolute;left:265.2px;top:31.8px" width="8" height="5" viewBox="0 0 8 5"><path d="M0.5 0.5 L4 4 L7.5 0.5" stroke="#5a5a5a" stroke-width="1" fill="none"/></svg>
<div class="t" style="left:281.2px;top:30.08px;font-size:9px;color:#1e1e1e;transform:scaleX(0.8930);">Value:</div>
<div style="left:306.7px;top:25.9px;width:36.7px;height:15.3px;background:#fff;border:1px solid #a5a5a5;box-sizing:border-box;"></div>
<div class="t" style="left:311.38px;top:30.08px;font-size:9px;color:#1e1e1e;transform:scaleX(0.9115);">1.0</div>
<div style="left:345.1px;top:26.8px;width:38.3px;height:14px;background:#e1e1e1;border:1px solid #adadad;box-sizing:border-box;"></div>
<div class="t" style="left:348.43px;top:30.08px;font-size:9px;color:#1e1e1e;transform:scaleX(0.9296);">Execute</div>
<div style="left:6px;top:43.7px;width:667.2px;height:154.2px;background:#808080;"></div>
<div style="left:7.5px;top:45.3px;width:665px;height:13px;background:#d6d6d6;"></div>
<div style="left:7.6px;top:45.3px;width:664.7px;height:11.4px;background:#f0f0f0;border-right:1px solid #c4c4c4;border-bottom:1px solid #c4c4c4;box-sizing:border-box;"></div>
<div class="t" style="left:237.05px;top:47.2px;font-size:9.1px;color:#000;font-weight:bold;">Pump Calibration Low Fuel, RPM vs Fuel mm^3</div>
<div style="left:7.5px;top:56.7px;width:642.32px;height:116.98px;background:#e2e2e2;"></div>
<div style="left:7.7px;top:58.3px;width:33.7px;height:10px;background:#f0f0f0;border-right:1px solid #c6c6c6;border-bottom:1px solid #c6c6c6;box-sizing:border-box;"></div>
<div style="left:44.1px;top:58.3px;width:34.2px;height:10px;background:#dcdcdc;border:1px solid #c4c4c4;border-right-color:#b0b0b0;border-bottom-color:#b0b0b0;box-sizing:border-box;"></div>
<div class="t" style="left:56.6px;top:60.98px;font-size:9px;color:#262626;transform:scaleX(0.9200);">00</div>
<div style="left:79.82px;top:58.3px;width:34.2px;height:10px;background:#f0f0f0;border:1px solid #c4c4c4;border-right-color:#b0b0b0;border-bottom-color:#b0b0b0;box-sizing:border-box;"></div>
<div class="t" style="left:90.03px;top:60.98px;font-size:9px;color:#262626;transform:scaleX(0.9200);">300</div>
<div style="left:115.54px;top:58.3px;width:34.2px;height:10px;background:#f0f0f0;border:1px solid #c4c4c4;border-right-color:#b0b0b0;border-bottom-color:#b0b0b0;box-sizing:border-box;"></div>
<div class="t" style="left:125.68px;top:60.98px;font-size:9px;color:#262626;transform:scaleX(0.9200);">600</div>
<div style="left:151.26px;top:58.3px;width:34.2px;height:10px;background:#f0f0f0;border:1px solid #c4c4c4;border-right-color:#b0b0b0;border-bottom-color:#b0b0b0;box-sizing:border-box;"></div>
<div class="t" style="left:161.43px;top:60.98px;font-size:9px;color:#262626;transform:scaleX(0.9200);">900</div>
<div style="left:186.98px;top:58.3px;width:34.2px;height:10px;background:#f0f0f0;border:1px solid #c4c4c4;border-right-color:#b0b0b0;border-bottom-color:#b0b0b0;box-sizing:border-box;"></div>
<div class="t" style="left:194.7px;top:60.98px;font-size:9px;color:#262626;transform:scaleX(0.9200);">1200</div>
<div style="left:222.7px;top:58.3px;width:34.2px;height:10px;background:#f0f0f0;border:1px solid #c4c4c4;border-right-color:#b0b0b0;border-bottom-color:#b0b0b0;box-sizing:border-box;"></div>
<div class="t" style="left:230.42px;top:60.98px;font-size:9px;color:#262626;transform:scaleX(0.9200);">1500</div>
<div style="left:258.42px;top:58.3px;width:34.2px;height:10px;background:#f0f0f0;border:1px solid #c4c4c4;border-right-color:#b0b0b0;border-bottom-color:#b0b0b0;box-sizing:border-box;"></div>
<div class="t" style="left:266.14px;top:60.98px;font-size:9px;color:#262626;transform:scaleX(0.9200);">1800</div>
<div style="left:294.14px;top:58.3px;width:34.2px;height:10px;background:#f0f0f0;border:1px solid #c4c4c4;border-right-color:#b0b0b0;border-bottom-color:#b0b0b0;box-sizing:border-box;"></div>
<div class="t" style="left:301.97px;top:60.98px;font-size:9px;color:#262626;transform:scaleX(0.9200);">2100</div>
<div style="left:329.86px;top:58.3px;width:34.2px;height:10px;background:#f0f0f0;border:1px solid #c4c4c4;border-right-color:#b0b0b0;border-bottom-color:#b0b0b0;box-sizing:border-box;"></div>
<div class="t" style="left:337.69px;top:60.98px;font-size:9px;color:#262626;transform:scaleX(0.9200);">2400</div>
<div style="left:365.58px;top:58.3px;width:34.2px;height:10px;background:#f0f0f0;border:1px solid #c4c4c4;border-right-color:#b0b0b0;border-bottom-color:#b0b0b0;box-sizing:border-box;"></div>
<div class="t" style="left:373.41px;top:60.98px;font-size:9px;color:#262626;transform:scaleX(0.9200);">2700</div>
<div style="left:401.3px;top:58.3px;width:34.2px;height:10px;background:#f0f0f0;border:1px solid #c4c4c4;border-right-color:#b0b0b0;border-bottom-color:#b0b0b0;box-sizing:border-box;"></div>
<div class="t" style="left:409.19px;top:60.98px;font-size:9px;color:#262626;transform:scaleX(0.9200);">3000</div>
<div style="left:437.02px;top:58.3px;width:34.2px;height:10px;background:#f0f0f0;border:1px solid #c4c4c4;border-right-color:#b0b0b0;border-bottom-color:#b0b0b0;box-sizing:border-box;"></div>
<div class="t" style="left:444.91px;top:60.98px;font-size:9px;color:#262626;transform:scaleX(0.9200);">3300</div>
<div style="left:472.74px;top:58.3px;width:34.2px;height:10px;background:#f0f0f0;border:1px solid #c4c4c4;border-right-color:#b0b0b0;border-bottom-color:#b0b0b0;box-sizing:border-box;"></div>
<div class="t" style="left:480.63px;top:60.98px;font-size:9px;color:#262626;transform:scaleX(0.9200);">3600</div>
<div style="left:508.46px;top:58.3px;width:34.2px;height:10px;background:#f0f0f0;border:1px solid #c4c4c4;border-right-color:#b0b0b0;border-bottom-color:#b0b0b0;box-sizing:border-box;"></div>
<div class="t" style="left:516.35px;top:60.98px;font-size:9px;color:#262626;transform:scaleX(0.9200);">3900</div>
<div style="left:544.18px;top:58.3px;width:34.2px;height:10px;background:#f0f0f0;border:1px solid #c4c4c4;border-right-color:#b0b0b0;border-bottom-color:#b0b0b0;box-sizing:border-box;"></div>
<div class="t" style="left:552.13px;top:60.98px;font-size:9px;color:#262626;transform:scaleX(0.9200);">4200</div>
<div style="left:579.9px;top:58.3px;width:34.2px;height:10px;background:#f0f0f0;border:1px solid #c4c4c4;border-right-color:#b0b0b0;border-bottom-color:#b0b0b0;box-sizing:border-box;"></div>
<div class="t" style="left:587.85px;top:60.98px;font-size:9px;color:#262626;transform:scaleX(0.9200);">4500</div>
<div style="left:615.62px;top:58.3px;width:34.2px;height:10px;background:#f0f0f0;border:1px solid #c4c4c4;border-right-color:#b0b0b0;border-bottom-color:#b0b0b0;box-sizing:border-box;"></div>
<div class="t" style="left:623.57px;top:60.98px;font-size:9px;color:#262626;transform:scaleX(0.9200);">4800</div>
<div style="left:7.7px;top:69.6px;width:33.7px;height:10px;background:#dedede;border-right:1px solid #c6c6c6;border-bottom:1px solid #c6c6c6;box-sizing:border-box;"></div>
<div class="t" style="left:30.9px;top:70.98px;font-size:9px;color:#262626;transform:scaleX(0.9200);">00</div>
<div style="left:43.6px;top:69.1px;width:35.4px;height:11.2px;background:#c2aeae;border:1.5px solid #505050;box-sizing:border-box;"></div>
<div class="t" style="left:58.31px;top:70.42px;font-size:8.6px;color:#1a1a1a;transform:scaleX(0.9200);">11.44</div>
<div style="left:79.82px;top:69.6px;width:34.2px;height:10px;background:#d1afaf;"></div>
<div class="t" style="left:94.15px;top:70.42px;font-size:8.6px;color:#1a1a1a;transform:scaleX(0.9200);">11.26</div>
<div style="left:115.54px;top:69.6px;width:34.2px;height:10px;background:#d0b0b0;"></div>
<div class="t" style="left:129.91px;top:70.42px;font-size:8.6px;color:#1a1a1a;transform:scaleX(0.9200);">11.09</div>
<div style="left:151.26px;top:69.6px;width:34.2px;height:10px;background:#cdb8b8;"></div>
<div class="t" style="left:165.04px;top:70.42px;font-size:8.6px;color:#1a1a1a;transform:scaleX(0.9200);">10.21</div>
<div style="left:186.98px;top:69.6px;width:34.2px;height:10px;background:#c6c5c5;"></div>
<div class="t" style="left:205.15px;top:70.42px;font-size:8.6px;color:#1a1a1a;transform:scaleX(0.9200);">8.62</div>
<div style="left:222.7px;top:69.6px;width:34.2px;height:10px;background:#c3cbcb;"></div>
<div class="t" style="left:240.83px;top:70.42px;font-size:8.6px;color:#1a1a1a;transform:scaleX(0.9200);">7.83</div>
<div style="left:258.42px;top:69.6px;width:34.2px;height:10px;background:#c1cece;"></div>
<div class="t" style="left:276.59px;top:70.42px;font-size:8.6px;color:#1a1a1a;transform:scaleX(0.9200);">7.39</div>
<div style="left:294.14px;top:69.6px;width:34.2px;height:10px;background:#bed1d1;"></div>
<div class="t" style="left:312.27px;top:70.42px;font-size:8.6px;color:#1a1a1a;transform:scaleX(0.9200);">6.86</div>
<div style="left:329.86px;top:69.6px;width:34.2px;height:10px;background:#bbd5d5;"></div>
<div class="t" style="left:347.99px;top:70.42px;font-size:8.6px;color:#1a1a1a;transform:scaleX(0.9200);">6.25</div>
<div style="left:365.58px;top:69.6px;width:34.2px;height:10px;background:#b9d9d9;"></div>
<div class="t" style="left:383.75px;top:70.42px;font-size:8.6px;color:#1a1a1a;transform:scaleX(0.9200);">5.72</div>
<div style="left:401.3px;top:69.6px;width:34.2px;height:10px;background:#b8dada;"></div>
<div class="t" style="left:419.31px;top:70.42px;font-size:8.6px;color:#1a1a1a;transform:scaleX(0.9200);">5.54</div>
<div style="left:437.02px;top:69.6px;width:34.2px;height:10px;background:#b7dcdc;"></div>
<div class="t" style="left:455.15px;top:70.42px;font-size:8.6px;color:#1a1a1a;transform:scaleX(0.9200);">5.28</div>
<div style="left:472.74px;top:69.6px;width:34.2px;height:10px;background:#b6dddd;"></div>
<div class="t" style="left:490.91px;top:70.42px;font-size:8.6px;color:#1a1a1a;transform:scaleX(0.9200);">5.02</div>
<div style="left:508.46px;top:69.6px;width:34.2px;height:10px;background:#b4dfdf;"></div>
<div class="t" style="left:526.59px;top:70.42px;font-size:8.6px;color:#1a1a1a;transform:scaleX(0.9200);">4.75</div>
<div style="left:544.18px;top:69.6px;width:34.2px;height:10px;background:#9effff;"></div>
<div class="t" style="left:562.27px;top:70.42px;font-size:8.6px;color:#1a1a1a;transform:scaleX(0.9200);">0.00</div>
<div style="left:579.9px;top:69.6px;width:34.2px;height:10px;background:#9effff;"></div>
<div class="t" style="left:597.99px;top:70.42px;font-size:8.6px;color:#1a1a1a;transform:scaleX(0.9200);">0.00</div>
<div style="left:615.62px;top:69.6px;width:34.2px;height:10px;background:#9effff;"></div>
<div class="t" style="left:633.71px;top:70.42px;font-size:8.6px;color:#1a1a1a;transform:scaleX(0.9200);">0.00</div>
<div style="left:7.7px;top:81.36px;width:33.7px;height:10px;background:#f0f0f0;border-right:1px solid #c6c6c6;border-bottom:1px solid #c6c6c6;box-sizing:border-box;"></div>
<div class="t" style="left:30.94px;top:82.74px;font-size:9px;color:#262626;transform:scaleX(0.9200);">08</div>
<div style="left:44.1px;top:81.36px;width:34.2px;height:10px;background:#dc9898;"></div>
<div class="t" style="left:57.88px;top:82.18px;font-size:8.6px;color:#1a1a1a;transform:scaleX(0.9200);">13.99</div>
<div style="left:79.82px;top:81.36px;width:34.2px;height:10px;background:#dc9898;"></div>
<div class="t" style="left:93.6px;top:82.18px;font-size:8.6px;color:#1a1a1a;transform:scaleX(0.9200);">13.99</div>
<div style="left:115.54px;top:81.36px;width:34.2px;height:10px;background:#dc9898;"></div>
<div class="t" style="left:129.32px;top:82.18px;font-size:8.6px;color:#1a1a1a;transform:scaleX(0.9200);">13.99</div>
<div style="left:151.26px;top:81.36px;width:34.2px;height:10px;background:#da9c9c;"></div>
<div class="t" style="left:165px;top:82.18px;font-size:8.6px;color:#1a1a1a;transform:scaleX(0.9200);">13.46</div>
<div style="left:186.98px;top:81.36px;width:34.2px;height:10px;background:#d3acac;"></div>
<div class="t" style="left:201.35px;top:82.18px;font-size:8.6px;color:#1a1a1a;transform:scaleX(0.9200);">11.62</div>
<div style="left:222.7px;top:81.36px;width:34.2px;height:10px;background:#cfb4b4;"></div>
<div class="t" style="left:236.44px;top:82.18px;font-size:8.6px;color:#1a1a1a;transform:scaleX(0.9200);">10.65</div>
<div style="left:258.42px;top:81.36px;width:34.2px;height:10px;background:#cbbcbc;"></div>
<div class="t" style="left:276.55px;top:82.18px;font-size:8.6px;color:#1a1a1a;transform:scaleX(0.9200);">9.68</div>
<div style="left:294.14px;top:81.36px;width:34.2px;height:10px;background:#c7c4c4;"></div>
<div class="t" style="left:312.23px;top:82.18px;font-size:8.6px;color:#1a1a1a;transform:scaleX(0.9200);">8.80</div>
<div style="left:329.86px;top:81.36px;width:34.2px;height:10px;background:#c4c8c8;"></div>
<div class="t" style="left:347.99px;top:82.18px;font-size:8.6px;color:#1a1a1a;transform:scaleX(0.9200);">8.18</div>
<div style="left:365.58px;top:81.36px;width:34.2px;height:10px;background:#c2cccc;"></div>
<div class="t" style="left:383.71px;top:82.18px;font-size:8.6px;color:#1a1a1a;transform:scaleX(0.9200);">7.66</div>
<div style="left:401.3px;top:81.36px;width:34.2px;height:10px;background:#c1cece;"></div>
<div class="t" style="left:419.47px;top:82.18px;font-size:8.6px;color:#1a1a1a;transform:scaleX(0.9200);">7.39</div>
<div style="left:437.02px;top:81.36px;width:34.2px;height:10px;background:#bfcfcf;"></div>
<div class="t" style="left:455.15px;top:82.18px;font-size:8.6px;color:#1a1a1a;transform:scaleX(0.9200);">7.13</div>
<div style="left:472.74px;top:81.36px;width:34.2px;height:10px;background:#bfd1d1;"></div>
<div class="t" style="left:490.87px;top:82.18px;font-size:8.6px;color:#1a1a1a;transform:scaleX(0.9200);">6.95</div>
<div style="left:508.46px;top:81.36px;width:34.2px;height:10px;background:#bfd1d1;"></div>
<div class="t" style="left:526.59px;top:82.18px;font-size:8.6px;color:#1a1a1a;transform:scaleX(0.9200);">6.95</div>
<div style="left:544.18px;top:81.36px;width:34.2px;height:10px;background:#9effff;"></div>
<div class="t" style="left:562.27px;top:82.18px;font-size:8.6px;color:#1a1a1a;transform:scaleX(0.9200);">0.00</div>
<div style="left:579.9px;top:81.36px;width:34.2px;height:10px;background:#9effff;"></div>
<div class="t" style="left:597.99px;top:82.18px;font-size:8.6px;color:#1a1a1a;transform:scaleX(0.9200);">0.00</div>
<div style="left:615.62px;top:81.36px;width:34.2px;height:10px;background:#9effff;"></div>
<div class="t" style="left:633.71px;top:82.18px;font-size:8.6px;color:#1a1a1a;transform:scaleX(0.9200);">0.00</div>
<div style="left:7.7px;top:93.12px;width:33.7px;height:10px;background:#f0f0f0;border-right:1px solid #c6c6c6;border-bottom:1px solid #c6c6c6;box-sizing:border-box;"></div>
<div class="t" style="left:30.94px;top:94.5px;font-size:9px;color:#262626;transform:scaleX(0.9200);">16</div>
<div style="left:44.1px;top:93.12px;width:34.2px;height:10px;background:#eb7979;"></div>
<div class="t" style="left:57.8px;top:93.94px;font-size:8.6px;color:#1a1a1a;transform:scaleX(0.9200);">17.60</div>
<div style="left:79.82px;top:93.12px;width:34.2px;height:10px;background:#e87f7f;"></div>
<div class="t" style="left:93.52px;top:93.94px;font-size:8.6px;color:#1a1a1a;transform:scaleX(0.9200);">16.90</div>
<div style="left:115.54px;top:93.12px;width:34.2px;height:10px;background:#e58585;"></div>
<div class="t" style="left:129.32px;top:93.94px;font-size:8.6px;color:#1a1a1a;transform:scaleX(0.9200);">16.19</div>
<div style="left:151.26px;top:93.12px;width:34.2px;height:10px;background:#e48888;"></div>
<div class="t" style="left:164.88px;top:93.94px;font-size:8.6px;color:#1a1a1a;transform:scaleX(0.9200);">15.84</div>
<div style="left:186.98px;top:93.12px;width:34.2px;height:10px;background:#df9292;"></div>
<div class="t" style="left:200.76px;top:93.94px;font-size:8.6px;color:#1a1a1a;transform:scaleX(0.9200);">14.61</div>
<div style="left:222.7px;top:93.12px;width:34.2px;height:10px;background:#d8a1a1;"></div>
<div class="t" style="left:236.44px;top:93.94px;font-size:8.6px;color:#1a1a1a;transform:scaleX(0.9200);">12.85</div>
<div style="left:258.42px;top:93.12px;width:34.2px;height:10px;background:#d3aaaa;"></div>
<div class="t" style="left:272.79px;top:93.94px;font-size:8.6px;color:#1a1a1a;transform:scaleX(0.9200);">11.79</div>
<div style="left:294.14px;top:93.12px;width:34.2px;height:10px;background:#cfb3b3;"></div>
<div class="t" style="left:307.92px;top:93.94px;font-size:8.6px;color:#1a1a1a;transform:scaleX(0.9200);">10.82</div>
<div style="left:329.86px;top:93.12px;width:34.2px;height:10px;background:#ceb5b5;"></div>
<div class="t" style="left:343.6px;top:93.94px;font-size:8.6px;color:#1a1a1a;transform:scaleX(0.9200);">10.56</div>
<div style="left:365.58px;top:93.12px;width:34.2px;height:10px;background:#cdb7b7;"></div>
<div class="t" style="left:379.28px;top:93.94px;font-size:8.6px;color:#1a1a1a;transform:scaleX(0.9200);">10.30</div>
<div style="left:401.3px;top:93.12px;width:34.2px;height:10px;background:#cbbcbc;"></div>
<div class="t" style="left:419.43px;top:93.94px;font-size:8.6px;color:#1a1a1a;transform:scaleX(0.9200);">9.68</div>
<div style="left:437.02px;top:93.12px;width:34.2px;height:10px;background:#c8c1c1;"></div>
<div class="t" style="left:455.15px;top:93.94px;font-size:8.6px;color:#1a1a1a;transform:scaleX(0.9200);">9.06</div>
<div style="left:472.74px;top:93.12px;width:34.2px;height:10px;background:#c7c4c4;"></div>
<div class="t" style="left:490.83px;top:93.94px;font-size:8.6px;color:#1a1a1a;transform:scaleX(0.9200);">8.80</div>
<div style="left:508.46px;top:93.12px;width:34.2px;height:10px;background:#c6c7c7;"></div>
<div class="t" style="left:526.59px;top:93.94px;font-size:8.6px;color:#1a1a1a;transform:scaleX(0.9200);">8.45</div>
<div style="left:544.18px;top:93.12px;width:34.2px;height:10px;background:#9effff;"></div>
<div class="t" style="left:562.27px;top:93.94px;font-size:8.6px;color:#1a1a1a;transform:scaleX(0.9200);">0.00</div>
<div style="left:579.9px;top:93.12px;width:34.2px;height:10px;background:#9effff;"></div>
<div class="t" style="left:597.99px;top:93.94px;font-size:8.6px;color:#1a1a1a;transform:scaleX(0.9200);">0.00</div>
<div style="left:615.62px;top:93.12px;width:34.2px;height:10px;background:#9effff;"></div>
<div class="t" style="left:633.71px;top:93.94px;font-size:8.6px;color:#1a1a1a;transform:scaleX(0.9200);">0.00</div>
<div style="left:7.7px;top:104.88px;width:33.7px;height:10px;background:#f0f0f0;border-right:1px solid #c6c6c6;border-bottom:1px solid #c6c6c6;box-sizing:border-box;"></div>
<div class="t" style="left:30.82px;top:106.26px;font-size:9px;color:#262626;transform:scaleX(0.9200);">24</div>
<div style="left:44.1px;top:104.88px;width:34.2px;height:10px;background:#f26a6a;"></div>
<div class="t" style="left:57.84px;top:105.7px;font-size:8.6px;color:#1a1a1a;transform:scaleX(0.9200);">19.36</div>
<div style="left:79.82px;top:104.88px;width:34.2px;height:10px;background:#f06f6f;"></div>
<div class="t" style="left:93.44px;top:105.7px;font-size:8.6px;color:#1a1a1a;transform:scaleX(0.9200);">18.74</div>
<div style="left:115.54px;top:104.88px;width:34.2px;height:10px;background:#ee7474;"></div>
<div class="t" style="left:129.32px;top:105.7px;font-size:8.6px;color:#1a1a1a;transform:scaleX(0.9200);">18.22</div>
<div style="left:151.26px;top:104.88px;width:34.2px;height:10px;background:#eb7979;"></div>
<div class="t" style="left:164.96px;top:105.7px;font-size:8.6px;color:#1a1a1a;transform:scaleX(0.9200);">17.60</div>
<div style="left:186.98px;top:104.88px;width:34.2px;height:10px;background:#e58686;"></div>
<div class="t" style="left:200.76px;top:105.7px;font-size:8.6px;color:#1a1a1a;transform:scaleX(0.9200);">16.02</div>
<div style="left:222.7px;top:104.88px;width:34.2px;height:10px;background:#e28c8c;"></div>
<div class="t" style="left:236.48px;top:105.7px;font-size:8.6px;color:#1a1a1a;transform:scaleX(0.9200);">15.31</div>
<div style="left:258.42px;top:104.88px;width:34.2px;height:10px;background:#dd9797;"></div>
<div class="t" style="left:272.16px;top:105.7px;font-size:8.6px;color:#1a1a1a;transform:scaleX(0.9200);">14.08</div>
<div style="left:294.14px;top:104.88px;width:34.2px;height:10px;background:#d8a1a1;"></div>
<div class="t" style="left:307.76px;top:105.7px;font-size:8.6px;color:#1a1a1a;transform:scaleX(0.9200);">12.94</div>
<div style="left:329.86px;top:104.88px;width:34.2px;height:10px;background:#d6a5a5;"></div>
<div class="t" style="left:343.64px;top:105.7px;font-size:8.6px;color:#1a1a1a;transform:scaleX(0.9200);">12.41</div>
<div style="left:365.58px;top:104.88px;width:34.2px;height:10px;background:#d4a9a9;"></div>
<div class="t" style="left:379.95px;top:105.7px;font-size:8.6px;color:#1a1a1a;transform:scaleX(0.9200);">11.97</div>
<div style="left:401.3px;top:104.88px;width:34.2px;height:10px;background:#d2aeae;"></div>
<div class="t" style="left:415.63px;top:105.7px;font-size:8.6px;color:#1a1a1a;transform:scaleX(0.9200);">11.35</div>
<div style="left:437.02px;top:104.88px;width:34.2px;height:10px;background:#cfb3b3;"></div>
<div class="t" style="left:450.64px;top:105.7px;font-size:8.6px;color:#1a1a1a;transform:scaleX(0.9200);">10.74</div>
<div style="left:472.74px;top:104.88px;width:34.2px;height:10px;background:#cdb7b7;"></div>
<div class="t" style="left:486.44px;top:105.7px;font-size:8.6px;color:#1a1a1a;transform:scaleX(0.9200);">10.30</div>
<div style="left:508.46px;top:104.88px;width:34.2px;height:10px;background:#cbbbbb;"></div>
<div class="t" style="left:526.59px;top:105.7px;font-size:8.6px;color:#1a1a1a;transform:scaleX(0.9200);">9.86</div>
<div style="left:544.18px;top:104.88px;width:34.2px;height:10px;background:#9effff;"></div>
<div class="t" style="left:562.27px;top:105.7px;font-size:8.6px;color:#1a1a1a;transform:scaleX(0.9200);">0.00</div>
<div style="left:579.9px;top:104.88px;width:34.2px;height:10px;background:#9effff;"></div>
<div class="t" style="left:597.99px;top:105.7px;font-size:8.6px;color:#1a1a1a;transform:scaleX(0.9200);">0.00</div>
<div style="left:615.62px;top:104.88px;width:34.2px;height:10px;background:#9effff;"></div>
<div class="t" style="left:633.71px;top:105.7px;font-size:8.6px;color:#1a1a1a;transform:scaleX(0.9200);">0.00</div>
<div style="left:7.7px;top:116.64px;width:33.7px;height:10px;background:#f0f0f0;border-right:1px solid #c6c6c6;border-bottom:1px solid #c6c6c6;box-sizing:border-box;"></div>
<div class="t" style="left:30.98px;top:118.02px;font-size:9px;color:#262626;transform:scaleX(0.9200);">32</div>
<div style="left:44.1px;top:116.64px;width:34.2px;height:10px;background:#fa5b5b;"></div>
<div class="t" style="left:57.88px;top:117.46px;font-size:8.6px;color:#1a1a1a;transform:scaleX(0.9200);">21.12</div>
<div style="left:79.82px;top:116.64px;width:34.2px;height:10px;background:#f66363;"></div>
<div class="t" style="left:93.44px;top:117.46px;font-size:8.6px;color:#1a1a1a;transform:scaleX(0.9200);">20.24</div>
<div style="left:115.54px;top:116.64px;width:34.2px;height:10px;background:#f36969;"></div>
<div class="t" style="left:129.28px;top:117.46px;font-size:8.6px;color:#1a1a1a;transform:scaleX(0.9200);">19.45</div>
<div style="left:151.26px;top:116.64px;width:34.2px;height:10px;background:#f07070;"></div>
<div class="t" style="left:165px;top:117.46px;font-size:8.6px;color:#1a1a1a;transform:scaleX(0.9200);">18.66</div>
<div style="left:186.98px;top:116.64px;width:34.2px;height:10px;background:#ec7878;"></div>
<div class="t" style="left:200.76px;top:117.46px;font-size:8.6px;color:#1a1a1a;transform:scaleX(0.9200);">17.69</div>
<div style="left:222.7px;top:116.64px;width:34.2px;height:10px;background:#e68484;"></div>
<div class="t" style="left:236.44px;top:117.46px;font-size:8.6px;color:#1a1a1a;transform:scaleX(0.9200);">16.28</div>
<div style="left:258.42px;top:116.64px;width:34.2px;height:10px;background:#e28c8c;"></div>
<div class="t" style="left:272.12px;top:117.46px;font-size:8.6px;color:#1a1a1a;transform:scaleX(0.9200);">15.40</div>
<div style="left:294.14px;top:116.64px;width:34.2px;height:10px;background:#df9292;"></div>
<div class="t" style="left:307.92px;top:117.46px;font-size:8.6px;color:#1a1a1a;transform:scaleX(0.9200);">14.61</div>
<div style="left:329.86px;top:116.64px;width:34.2px;height:10px;background:#dd9797;"></div>
<div class="t" style="left:343.6px;top:117.46px;font-size:8.6px;color:#1a1a1a;transform:scaleX(0.9200);">14.08</div>
<div style="left:365.58px;top:116.64px;width:34.2px;height:10px;background:#db9b9b;"></div>
<div class="t" style="left:379.32px;top:117.46px;font-size:8.6px;color:#1a1a1a;transform:scaleX(0.9200);">13.55</div>
<div style="left:401.3px;top:116.64px;width:34.2px;height:10px;background:#d7a2a2;"></div>
<div class="t" style="left:415.04px;top:117.46px;font-size:8.6px;color:#1a1a1a;transform:scaleX(0.9200);">12.76</div>
<div style="left:437.02px;top:116.64px;width:34.2px;height:10px;background:#d4a8a8;"></div>
<div class="t" style="left:450.76px;top:117.46px;font-size:8.6px;color:#1a1a1a;transform:scaleX(0.9200);">12.06</div>
<div style="left:472.74px;top:116.64px;width:34.2px;height:10px;background:#d3abab;"></div>
<div class="t" style="left:487.03px;top:117.46px;font-size:8.6px;color:#1a1a1a;transform:scaleX(0.9200);">11.70</div>
<div style="left:508.46px;top:116.64px;width:34.2px;height:10px;background:#d1afaf;"></div>
<div class="t" style="left:522.79px;top:117.46px;font-size:8.6px;color:#1a1a1a;transform:scaleX(0.9200);">11.26</div>
<div style="left:544.18px;top:116.64px;width:34.2px;height:10px;background:#9effff;"></div>
<div class="t" style="left:562.27px;top:117.46px;font-size:8.6px;color:#1a1a1a;transform:scaleX(0.9200);">0.00</div>
<div style="left:579.9px;top:116.64px;width:34.2px;height:10px;background:#9effff;"></div>
<div class="t" style="left:597.99px;top:117.46px;font-size:8.6px;color:#1a1a1a;transform:scaleX(0.9200);">0.00</div>
<div style="left:615.62px;top:116.64px;width:34.2px;height:10px;background:#9effff;"></div>
<div class="t" style="left:633.71px;top:117.46px;font-size:8.6px;color:#1a1a1a;transform:scaleX(0.9200);">0.00</div>
<div style="left:7.7px;top:128.4px;width:33.7px;height:10px;background:#f0f0f0;border-right:1px solid #c6c6c6;border-bottom:1px solid #c6c6c6;box-sizing:border-box;"></div>
<div class="t" style="left:30.9px;top:129.78px;font-size:9px;color:#262626;transform:scaleX(0.9200);">40</div>
<div style="left:44.1px;top:128.4px;width:34.2px;height:10px;background:#fd5454;"></div>
<div class="t" style="left:57.8px;top:129.22px;font-size:8.6px;color:#1a1a1a;transform:scaleX(0.9200);">22.00</div>
<div style="left:79.82px;top:128.4px;width:34.2px;height:10px;background:#f95c5c;"></div>
<div class="t" style="left:93.56px;top:129.22px;font-size:8.6px;color:#1a1a1a;transform:scaleX(0.9200);">21.03</div>
<div style="left:115.54px;top:128.4px;width:34.2px;height:10px;background:#f66363;"></div>
<div class="t" style="left:129.28px;top:129.22px;font-size:8.6px;color:#1a1a1a;transform:scaleX(0.9200);">20.15</div>
<div style="left:151.26px;top:128.4px;width:34.2px;height:10px;background:#f46666;"></div>
<div class="t" style="left:164.96px;top:129.22px;font-size:8.6px;color:#1a1a1a;transform:scaleX(0.9200);">19.80</div>
<div style="left:186.98px;top:128.4px;width:34.2px;height:10px;background:#f26c6c;"></div>
<div class="t" style="left:200.72px;top:129.22px;font-size:8.6px;color:#1a1a1a;transform:scaleX(0.9200);">19.18</div>
<div style="left:222.7px;top:128.4px;width:34.2px;height:10px;background:#e97d7d;"></div>
<div class="t" style="left:236.44px;top:129.22px;font-size:8.6px;color:#1a1a1a;transform:scaleX(0.9200);">17.16</div>
<div style="left:258.42px;top:128.4px;width:34.2px;height:10px;background:#e78383;"></div>
<div class="t" style="left:272.16px;top:129.22px;font-size:8.6px;color:#1a1a1a;transform:scaleX(0.9200);">16.46</div>
<div style="left:294.14px;top:128.4px;width:34.2px;height:10px;background:#e48989;"></div>
<div class="t" style="left:307.88px;top:129.22px;font-size:8.6px;color:#1a1a1a;transform:scaleX(0.9200);">15.75</div>
<div style="left:329.86px;top:128.4px;width:34.2px;height:10px;background:#e18d8d;"></div>
<div class="t" style="left:343.64px;top:129.22px;font-size:8.6px;color:#1a1a1a;transform:scaleX(0.9200);">15.22</div>
<div style="left:365.58px;top:128.4px;width:34.2px;height:10px;background:#df9292;"></div>
<div class="t" style="left:379.28px;top:129.22px;font-size:8.6px;color:#1a1a1a;transform:scaleX(0.9200);">14.70</div>
<div style="left:401.3px;top:128.4px;width:34.2px;height:10px;background:#dc9898;"></div>
<div class="t" style="left:415px;top:129.22px;font-size:8.6px;color:#1a1a1a;transform:scaleX(0.9200);">13.90</div>
<div style="left:437.02px;top:128.4px;width:34.2px;height:10px;background:#d99f9f;"></div>
<div class="t" style="left:451.39px;top:129.22px;font-size:8.6px;color:#1a1a1a;transform:scaleX(0.9200);">13.11</div>
<div style="left:472.74px;top:128.4px;width:34.2px;height:10px;background:#d7a2a2;"></div>
<div class="t" style="left:486.48px;top:129.22px;font-size:8.6px;color:#1a1a1a;transform:scaleX(0.9200);">12.76</div>
<div style="left:508.46px;top:128.4px;width:34.2px;height:10px;background:#d5a7a7;"></div>
<div class="t" style="left:522.2px;top:129.22px;font-size:8.6px;color:#1a1a1a;transform:scaleX(0.9200);">12.23</div>
<div style="left:544.18px;top:128.4px;width:34.2px;height:10px;background:#9effff;"></div>
<div class="t" style="left:562.27px;top:129.22px;font-size:8.6px;color:#1a1a1a;transform:scaleX(0.9200);">0.00</div>
<div style="left:579.9px;top:128.4px;width:34.2px;height:10px;background:#9effff;"></div>
<div class="t" style="left:597.99px;top:129.22px;font-size:8.6px;color:#1a1a1a;transform:scaleX(0.9200);">0.00</div>
<div style="left:615.62px;top:128.4px;width:34.2px;height:10px;background:#9effff;"></div>
<div class="t" style="left:633.71px;top:129.22px;font-size:8.6px;color:#1a1a1a;transform:scaleX(0.9200);">0.00</div>
<div style="left:7.7px;top:140.16px;width:33.7px;height:10px;background:#f0f0f0;border-right:1px solid #c6c6c6;border-bottom:1px solid #c6c6c6;box-sizing:border-box;"></div>
<div class="t" style="left:30.94px;top:141.54px;font-size:9px;color:#262626;transform:scaleX(0.9200);">48</div>
<div style="left:44.1px;top:140.16px;width:34.2px;height:10px;background:#ff5050;"></div>
<div class="t" style="left:57.72px;top:140.98px;font-size:8.6px;color:#1a1a1a;transform:scaleX(0.9200);">22.44</div>
<div style="left:79.82px;top:140.16px;width:34.2px;height:10px;background:#fc5757;"></div>
<div class="t" style="left:93.56px;top:140.98px;font-size:8.6px;color:#1a1a1a;transform:scaleX(0.9200);">21.65</div>
<div style="left:115.54px;top:140.16px;width:34.2px;height:10px;background:#f95c5c;"></div>
<div class="t" style="left:129.28px;top:140.98px;font-size:8.6px;color:#1a1a1a;transform:scaleX(0.9200);">21.03</div>
<div style="left:151.26px;top:140.16px;width:34.2px;height:10px;background:#f76161;"></div>
<div class="t" style="left:165.04px;top:140.98px;font-size:8.6px;color:#1a1a1a;transform:scaleX(0.9200);">20.42</div>
<div style="left:186.98px;top:140.16px;width:34.2px;height:10px;background:#f56565;"></div>
<div class="t" style="left:200.72px;top:140.98px;font-size:8.6px;color:#1a1a1a;transform:scaleX(0.9200);">19.98</div>
<div style="left:222.7px;top:140.16px;width:34.2px;height:10px;background:#ee7272;"></div>
<div class="t" style="left:236.48px;top:140.98px;font-size:8.6px;color:#1a1a1a;transform:scaleX(0.9200);">18.39</div>
<div style="left:258.42px;top:140.16px;width:34.2px;height:10px;background:#e97e7e;"></div>
<div class="t" style="left:272.16px;top:140.98px;font-size:8.6px;color:#1a1a1a;transform:scaleX(0.9200);">16.98</div>
<div style="left:294.14px;top:140.16px;width:34.2px;height:10px;background:#e88181;"></div>
<div class="t" style="left:307.92px;top:140.98px;font-size:8.6px;color:#1a1a1a;transform:scaleX(0.9200);">16.72</div>
<div style="left:329.86px;top:140.16px;width:34.2px;height:10px;background:#e68484;"></div>
<div class="t" style="left:343.6px;top:140.98px;font-size:8.6px;color:#1a1a1a;transform:scaleX(0.9200);">16.28</div>
<div style="left:365.58px;top:140.16px;width:34.2px;height:10px;background:#e18d8d;"></div>
<div class="t" style="left:379.36px;top:140.98px;font-size:8.6px;color:#1a1a1a;transform:scaleX(0.9200);">15.22</div>
<div style="left:401.3px;top:140.16px;width:34.2px;height:10px;background:#df9292;"></div>
<div class="t" style="left:415.08px;top:140.98px;font-size:8.6px;color:#1a1a1a;transform:scaleX(0.9200);">14.61</div>
<div style="left:437.02px;top:140.16px;width:34.2px;height:10px;background:#dd9797;"></div>
<div class="t" style="left:450.76px;top:140.98px;font-size:8.6px;color:#1a1a1a;transform:scaleX(0.9200);">14.08</div>
<div style="left:472.74px;top:140.16px;width:34.2px;height:10px;background:#d99f9f;"></div>
<div class="t" style="left:487.11px;top:140.98px;font-size:8.6px;color:#1a1a1a;transform:scaleX(0.9200);">13.11</div>
<div style="left:508.46px;top:140.16px;width:34.2px;height:10px;background:#db9b9b;"></div>
<div class="t" style="left:522.08px;top:140.98px;font-size:8.6px;color:#1a1a1a;transform:scaleX(0.9200);">13.64</div>
<div style="left:544.18px;top:140.16px;width:34.2px;height:10px;background:#9effff;"></div>
<div class="t" style="left:562.27px;top:140.98px;font-size:8.6px;color:#1a1a1a;transform:scaleX(0.9200);">0.00</div>
<div style="left:579.9px;top:140.16px;width:34.2px;height:10px;background:#9effff;"></div>
<div class="t" style="left:597.99px;top:140.98px;font-size:8.6px;color:#1a1a1a;transform:scaleX(0.9200);">0.00</div>
<div style="left:615.62px;top:140.16px;width:34.2px;height:10px;background:#9effff;"></div>
<div class="t" style="left:633.71px;top:140.98px;font-size:8.6px;color:#1a1a1a;transform:scaleX(0.9200);">0.00</div>
<div style="left:7.7px;top:151.92px;width:33.7px;height:10px;background:#f0f0f0;border-right:1px solid #c6c6c6;border-bottom:1px solid #c6c6c6;box-sizing:border-box;"></div>
<div class="t" style="left:30.94px;top:153.3px;font-size:9px;color:#262626;transform:scaleX(0.9200);">56</div>
<div style="left:44.1px;top:151.92px;width:34.2px;height:10px;background:#ff5050;"></div>
<div class="t" style="left:57.72px;top:152.74px;font-size:8.6px;color:#1a1a1a;transform:scaleX(0.9200);">22.44</div>
<div style="left:79.82px;top:151.92px;width:34.2px;height:10px;background:#fd5454;"></div>
<div class="t" style="left:93.6px;top:152.74px;font-size:8.6px;color:#1a1a1a;transform:scaleX(0.9200);">21.91</div>
<div style="left:115.54px;top:151.92px;width:34.2px;height:10px;background:#fb5959;"></div>
<div class="t" style="left:129.28px;top:152.74px;font-size:8.6px;color:#1a1a1a;transform:scaleX(0.9200);">21.38</div>
<div style="left:151.26px;top:151.92px;width:34.2px;height:10px;background:#f95c5c;"></div>
<div class="t" style="left:165px;top:152.74px;font-size:8.6px;color:#1a1a1a;transform:scaleX(0.9200);">21.03</div>
<div style="left:186.98px;top:151.92px;width:34.2px;height:10px;background:#f85f5f;"></div>
<div class="t" style="left:200.72px;top:152.74px;font-size:8.6px;color:#1a1a1a;transform:scaleX(0.9200);">20.68</div>
<div style="left:222.7px;top:151.92px;width:34.2px;height:10px;background:#f36969;"></div>
<div class="t" style="left:236.32px;top:152.74px;font-size:8.6px;color:#1a1a1a;transform:scaleX(0.9200);">19.54</div>
<div style="left:258.42px;top:151.92px;width:34.2px;height:10px;background:#ec7878;"></div>
<div class="t" style="left:272.16px;top:152.74px;font-size:8.6px;color:#1a1a1a;transform:scaleX(0.9200);">17.78</div>
<div style="left:294.14px;top:151.92px;width:34.2px;height:10px;background:#e97e7e;"></div>
<div class="t" style="left:307.92px;top:152.74px;font-size:8.6px;color:#1a1a1a;transform:scaleX(0.9200);">17.07</div>
<div style="left:329.86px;top:151.92px;width:34.2px;height:10px;background:#e87f7f;"></div>
<div class="t" style="left:343.56px;top:152.74px;font-size:8.6px;color:#1a1a1a;transform:scaleX(0.9200);">16.90</div>
<div style="left:365.58px;top:151.92px;width:34.2px;height:10px;background:#e58585;"></div>
<div class="t" style="left:379.36px;top:152.74px;font-size:8.6px;color:#1a1a1a;transform:scaleX(0.9200);">16.19</div>
<div style="left:401.3px;top:151.92px;width:34.2px;height:10px;background:#e38a8a;"></div>
<div class="t" style="left:415.04px;top:152.74px;font-size:8.6px;color:#1a1a1a;transform:scaleX(0.9200);">15.66</div>
<div style="left:437.02px;top:151.92px;width:34.2px;height:10px;background:#e08f8f;"></div>
<div class="t" style="left:450.76px;top:152.74px;font-size:8.6px;color:#1a1a1a;transform:scaleX(0.9200);">14.96</div>
<div style="left:472.74px;top:151.92px;width:34.2px;height:10px;background:#df9292;"></div>
<div class="t" style="left:486.44px;top:152.74px;font-size:8.6px;color:#1a1a1a;transform:scaleX(0.9200);">14.70</div>
<div style="left:508.46px;top:151.92px;width:34.2px;height:10px;background:#de9494;"></div>
<div class="t" style="left:522.2px;top:152.74px;font-size:8.6px;color:#1a1a1a;transform:scaleX(0.9200);">14.43</div>
<div style="left:544.18px;top:151.92px;width:34.2px;height:10px;background:#9effff;"></div>
<div class="t" style="left:562.27px;top:152.74px;font-size:8.6px;color:#1a1a1a;transform:scaleX(0.9200);">0.00</div>
<div style="left:579.9px;top:151.92px;width:34.2px;height:10px;background:#9effff;"></div>
<div class="t" style="left:597.99px;top:152.74px;font-size:8.6px;color:#1a1a1a;transform:scaleX(0.9200);">0.00</div>
<div style="left:615.62px;top:151.92px;width:34.2px;height:10px;background:#9effff;"></div>
<div class="t" style="left:633.71px;top:152.74px;font-size:8.6px;color:#1a1a1a;transform:scaleX(0.9200);">0.00</div>
<div style="left:7.7px;top:163.68px;width:33.7px;height:10px;background:#f0f0f0;border-right:1px solid #c6c6c6;border-bottom:1px solid #c6c6c6;box-sizing:border-box;"></div>
<div class="t" style="left:30.82px;top:165.06px;font-size:9px;color:#262626;transform:scaleX(0.9200);">64</div>
<div style="left:44.1px;top:163.68px;width:34.2px;height:10px;background:#ff5050;"></div>
<div class="t" style="left:57.72px;top:164.5px;font-size:8.6px;color:#1a1a1a;transform:scaleX(0.9200);">22.44</div>
<div style="left:79.82px;top:163.68px;width:34.2px;height:10px;background:#fd5454;"></div>
<div class="t" style="left:93.6px;top:164.5px;font-size:8.6px;color:#1a1a1a;transform:scaleX(0.9200);">21.91</div>
<div style="left:115.54px;top:163.68px;width:34.2px;height:10px;background:#fa5a5a;"></div>
<div class="t" style="left:129.24px;top:164.5px;font-size:8.6px;color:#1a1a1a;transform:scaleX(0.9200);">21.30</div>
<div style="left:151.26px;top:163.68px;width:34.2px;height:10px;background:#fc5757;"></div>
<div class="t" style="left:165px;top:164.5px;font-size:8.6px;color:#1a1a1a;transform:scaleX(0.9200);">21.65</div>
<div style="left:186.98px;top:163.68px;width:34.2px;height:10px;background:#fb5959;"></div>
<div class="t" style="left:200.72px;top:164.5px;font-size:8.6px;color:#1a1a1a;transform:scaleX(0.9200);">21.38</div>
<div style="left:222.7px;top:163.68px;width:34.2px;height:10px;background:#f85e5e;"></div>
<div class="t" style="left:236.48px;top:164.5px;font-size:8.6px;color:#1a1a1a;transform:scaleX(0.9200);">20.77</div>
<div style="left:258.42px;top:163.68px;width:34.2px;height:10px;background:#f26b6b;"></div>
<div class="t" style="left:272.2px;top:164.5px;font-size:8.6px;color:#1a1a1a;transform:scaleX(0.9200);">19.27</div>
<div style="left:294.14px;top:163.68px;width:34.2px;height:10px;background:#ed7575;"></div>
<div class="t" style="left:307.88px;top:164.5px;font-size:8.6px;color:#1a1a1a;transform:scaleX(0.9200);">18.13</div>
<div style="left:329.86px;top:163.68px;width:34.2px;height:10px;background:#ed7676;"></div>
<div class="t" style="left:343.6px;top:164.5px;font-size:8.6px;color:#1a1a1a;transform:scaleX(0.9200);">17.95</div>
<div style="left:365.58px;top:163.68px;width:34.2px;height:10px;background:#ea7b7b;"></div>
<div class="t" style="left:379.2px;top:164.5px;font-size:8.6px;color:#1a1a1a;transform:scaleX(0.9200);">17.34</div>
<div style="left:401.3px;top:163.68px;width:34.2px;height:10px;background:#e87f7f;"></div>
<div class="t" style="left:415px;top:164.5px;font-size:8.6px;color:#1a1a1a;transform:scaleX(0.9200);">16.90</div>
<div style="left:437.02px;top:163.68px;width:34.2px;height:10px;background:#e78282;"></div>
<div class="t" style="left:450.64px;top:164.5px;font-size:8.6px;color:#1a1a1a;transform:scaleX(0.9200);">16.54</div>
<div style="left:472.74px;top:163.68px;width:34.2px;height:10px;background:#e78383;"></div>
<div class="t" style="left:486.48px;top:164.5px;font-size:8.6px;color:#1a1a1a;transform:scaleX(0.9200);">16.46</div>
<div style="left:508.46px;top:163.68px;width:34.2px;height:10px;background:#e68484;"></div>
<div class="t" style="left:522.2px;top:164.5px;font-size:8.6px;color:#1a1a1a;transform:scaleX(0.9200);">16.28</div>
<div style="left:544.18px;top:163.68px;width:34.2px;height:10px;background:#9effff;"></div>
<div class="t" style="left:562.27px;top:164.5px;font-size:8.6px;color:#1a1a1a;transform:scaleX(0.9200);">0.00</div>
<div style="left:579.9px;top:163.68px;width:34.2px;height:10px;background:#9effff;"></div>
<div class="t" style="left:597.99px;top:164.5px;font-size:8.6px;color:#1a1a1a;transform:scaleX(0.9200);">0.00</div>
<div style="left:615.62px;top:163.68px;width:34.2px;height:10px;background:#9effff;"></div>
<div class="t" style="left:633.71px;top:164.5px;font-size:8.6px;color:#1a1a1a;transform:scaleX(0.9200);">0.00</div>
<div style="left:6px;top:197.9px;width:667.2px;height:19.5px;background:#f0f0f0;border-top:1px solid #dcdcdc;box-sizing:border-box;"></div>
<div style="left:63.8px;top:199.9px;width:1px;height:16.5px;background:#dadada;"></div>
<div style="left:122.5px;top:199.9px;width:1px;height:16.5px;background:#dadada;"></div>
<svg style="position:absolute;left:663.7px;top:207.9px" width="8" height="8" viewBox="0 0 8 8"><rect x="6" y="0" width="1.5" height="1.5" fill="#a0a0a0"/><rect x="6" y="3" width="1.5" height="1.5" fill="#a0a0a0"/><rect x="3" y="3" width="1.5" height="1.5" fill="#a0a0a0"/><rect x="6" y="6" width="1.5" height="1.5" fill="#a0a0a0"/><rect x="3" y="6" width="1.5" height="1.5" fill="#a0a0a0"/><rect x="0" y="6" width="1.5" height="1.5" fill="#a0a0a0"/></svg>
</div>
<div class="win" style="left:24.5px;top:232.3px;width:678.5px;height:223.5px;">
<div style="left:0px;top:0px;width:678.5px;height:223.5px;background:linear-gradient(#bccad9 0px,#c6d4e3 10px,#d4e0ed 22px,#d8e4f0 30px);border:1px solid #80868e;border-bottom-color:#8a9098;border-radius:6px 6px 0 0;box-sizing:border-box;"></div>
<svg style="position:absolute;left:7.1px;top:9.9px" width="13.2" height="9.8" viewBox="0 0 13.2 9.8"><rect x="0.3" y="2.1" width="12.6" height="5.6" rx="1" fill="#000"/><rect x="1.20" y="0" width="1.3" height="2.6" fill="#222"/><rect x="1.20" y="7.2" width="1.3" height="2.6" fill="#222"/><rect x="3.60" y="0" width="1.3" height="2.6" fill="#222"/><rect x="3.60" y="7.2" width="1.3" height="2.6" fill="#222"/><rect x="6.00" y="0" width="1.3" height="2.6" fill="#222"/><rect x="6.00" y="7.2" width="1.3" height="2.6" fill="#222"/><rect x="8.40" y="0" width="1.3" height="2.6" fill="#222"/><rect x="8.40" y="7.2" width="1.3" height="2.6" fill="#222"/><rect x="10.80" y="0" width="1.3" height="2.6" fill="#222"/><rect x="10.80" y="7.2" width="1.3" height="2.6" fill="#222"/></svg>
<div class="t" style="left:23.87px;top:11.25px;font-size:9.15px;color:#9ea6b0;">Pump Calibration High Fuel, RPM vs Fuel mm^3</div>
<svg style="position:absolute;left:645.5px;top:7.85px" width="25.2" height="13.5" viewBox="0 0 25.2 13.5"><rect x="0.5" y="0.5" width="24.2" height="12.5" rx="2.5" fill="#c9d5e2" stroke="#8d9bae" stroke-width="1"/><path d="M9.2 4.6 L14.6 8.6 M14.6 4.6 L9.2 8.6" stroke="#737b86" stroke-width="3.4" stroke-linecap="round" fill="none"/><path d="M9.2 4.6 L14.6 8.6 M14.6 4.6 L9.2 8.6" stroke="#f0f0f0" stroke-width="1.8" stroke-linecap="round" fill="none"/></svg>
<div style="left:6px;top:24.4px;width:666px;height:192.9px;background:#f0f0f0;"></div>
<div style="left:8.2px;top:25.8px;width:1px;height:15px;background:#c4c4c4;border-right:1px solid #fff;"></div>
<svg style="position:absolute;left:15.8px;top:28.6px" width="11" height="11" viewBox="0 0 11 11"><rect x="0.5" y="0.5" width="10" height="10" fill="#808000" stroke="#000" stroke-width="1"/><rect x="2.6" y="1" width="5.6" height="4.4" fill="#fff"/><rect x="2.6" y="7" width="6" height="3" fill="#000"/><rect x="6.6" y="7.8" width="1.3" height="1.6" fill="#fff"/></svg>
<svg style="position:absolute;left:34.6px;top:29.2px" width="9.2" height="10.6" viewBox="0 0 9.2 10.6"><path d="M1 1 L8.2 9.6 M8.2 1 L1 9.6" stroke="#ff0000" stroke-width="1.8" fill="none"/></svg>
<svg style="position:absolute;left:51.5px;top:29.5px" width="12" height="10.4" viewBox="0 0 12 10.4"><rect x="0.3" y="0" width="1.1" height="9.6" fill="#a8a8a8"/><path d="M0.3 9.7 H12" stroke="#333" stroke-width="1.1" stroke-dasharray="1.3 1.1" fill="none"/><path d="M0.8 3.6 L3.3 6.2 L5.6 4.2 L8.2 6.6 L11.6 2.2" stroke="#ff2020" stroke-width="1.3" fill="none"/></svg>
<svg style="position:absolute;left:68.8px;top:27.8px" width="12.6" height="11.8" viewBox="0 0 12.6 11.8"><path d="M1.6 2.8 L6.3 1.4 L11 2.8" stroke="#111" stroke-width="1.3" fill="none"/><circle cx="6.3" cy="1.2" r="1.1" fill="#000"/><rect x="5.7" y="1" width="1.3" height="10" fill="#222"/><path d="M1.8 2.8 L0.2 6.6 M1.8 2.8 L3.6 6.6 M10.8 2.8 L9 6.6 M10.8 2.8 L12.4 6.6" stroke="#888" stroke-width="0.7" fill="none"/><path d="M-0.2 6.3 H4.2 Q4 8.6 2 8.6 Q0 8.6 -0.2 6.3 Z" fill="#e2e200" stroke="#666" stroke-width="0.5"/><path d="M8.4 6.3 H12.8 Q12.6 8.6 10.6 8.6 Q8.6 8.6 8.4 6.3 Z" fill="#e2e200" stroke="#666" stroke-width="0.5"/><path d="M2.4 11.6 Q6.3 9.6 10.2 11.6 Z" fill="#000"/></svg>
<svg style="position:absolute;left:87.5px;top:27.6px" width="11" height="11.8" viewBox="0 0 11 11.8"><path d="M8.8 1.4 H2.6 Q1.5 1.4 1.5 2.6 V9.8 H7.8" stroke="#2020ff" stroke-width="2.1" fill="none"/><path d="M5.0 0.3 L0.7 11.0 H10.3 Z" stroke="#000" stroke-width="1.4" fill="none" stroke-linejoin="miter"/></svg>
<svg style="position:absolute;left:105px;top:28.8px" width="12" height="11" viewBox="0 0 12 11"><path d="M0.8 0.2 L6.3 8.5 M6.3 0.2 L0.8 8.5 L0.3 10.8" stroke="#a8a8a8" stroke-width="1.6" fill="none"/><path d="M3.2 11 L8.3 5.8 L12 11 Z" fill="#a8a8a8"/></svg>
<svg style="position:absolute;left:122.6px;top:28.8px" width="12" height="11" viewBox="0 0 12 11"><path d="M0.5 0.5 L3.3 5.2 L6.1 0.5 M3.3 5 V10.8" stroke="#a8a8a8" stroke-width="1.7" fill="none"/><path d="M8.2 11 V4.5" stroke="#a8a8a8" stroke-width="1.7" fill="none"/><path d="M4.6 5.6 L8.2 0.2 L11.8 5.6 Z" fill="#a8a8a8"/></svg>
<svg style="position:absolute;left:142.6px;top:28.8px" width="8.4" height="10.6" viewBox="0 0 8.4 10.6"><path d="M0.7 10.3 L4.2 0.5 L7.7 10.3 M2 6.8 H6.4" stroke="#a8a8a8" stroke-width="1.5" fill="none"/></svg>
<div style="left:158.6px;top:25.8px;width:1px;height:16px;background:#c4c4c4;border-right:1px solid #fff;"></div>
<div class="t" style="left:166.5px;top:30.08px;font-size:9px;color:#1e1e1e;transform:scaleX(0.9661);">Function:</div>
<div style="left:205.3px;top:26.1px;width:70.9px;height:14.6px;background:#e6e6e6;border:1px solid #bcbcbc;box-sizing:border-box;"></div>
<div class="t" style="left:207.37px;top:30.08px;font-size:9px;color:#1e1e1e;transform:scaleX(1.0577);">Offset (+/-)</div>
<svg style="position:absolute;left:265.2px;top:31.8px" width="8" height="5" viewBox="0 0 8 5"><path d="M0.5 0.5 L4 4 L7.5 0.5" stroke="#5a5a5a" stroke-width="1" fill="none"/></svg>
<div class="t" style="left:281.2px;top:30.08px;font-size:9px;color:#1e1e1e;transform:scaleX(0.8930);">Value:</div>
<div style="left:306.7px;top:25.9px;width:36.7px;height:15.3px;background:#fff;border:1px solid #a5a5a5;box-sizing:border-box;"></div>
<div class="t" style="left:311.38px;top:30.08px;font-size:9px;color:#1e1e1e;transform:scaleX(0.9115);">1.0</div>
<div style="left:345.1px;top:26.8px;width:38.3px;height:14px;background:#e1e1e1;border:1px solid #adadad;box-sizing:border-box;"></div>
<div class="t" style="left:348.43px;top:30.08px;font-size:9px;color:#1e1e1e;transform:scaleX(0.9296);">Execute</div>
<div style="left:6px;top:43.7px;width:666px;height:154.6px;background:#808080;"></div>
<div style="left:7.5px;top:45.3px;width:663.8px;height:13px;background:#d6d6d6;"></div>
<div style="left:7.6px;top:45.3px;width:663.5px;height:11.4px;background:#f0f0f0;border-right:1px solid #c4c4c4;border-bottom:1px solid #c4c4c4;box-sizing:border-box;"></div>
<div class="t" style="left:235.43px;top:47.2px;font-size:9.1px;color:#000;font-weight:bold;">Pump Calibration High Fuel, RPM vs Fuel mm^3</div>
<div style="left:7.5px;top:56.7px;width:642.32px;height:116.98px;background:#e2e2e2;"></div>
<div style="left:7.7px;top:58.3px;width:33.7px;height:10px;background:#f0f0f0;border-right:1px solid #c6c6c6;border-bottom:1px solid #c6c6c6;box-sizing:border-box;"></div>
<div style="left:44.1px;top:58.3px;width:34.2px;height:10px;background:#dcdcdc;border:1px solid #c4c4c4;border-right-color:#b0b0b0;border-bottom-color:#b0b0b0;box-sizing:border-box;"></div>
<div class="t" style="left:56.6px;top:60.98px;font-size:9px;color:#262626;transform:scaleX(0.9200);">00</div>
<div style="left:79.82px;top:58.3px;width:34.2px;height:10px;background:#f0f0f0;border:1px solid #c4c4c4;border-right-color:#b0b0b0;border-bottom-color:#b0b0b0;box-sizing:border-box;"></div>
<div class="t" style="left:90.03px;top:60.98px;font-size:9px;color:#262626;transform:scaleX(0.9200);">300</div>
<div style="left:115.54px;top:58.3px;width:34.2px;height:10px;background:#f0f0f0;border:1px solid #c4c4c4;border-right-color:#b0b0b0;border-bottom-color:#b0b0b0;box-sizing:border-box;"></div>
<div class="t" style="left:125.68px;top:60.98px;font-size:9px;color:#262626;transform:scaleX(0.9200);">600</div>
<div style="left:151.26px;top:58.3px;width:34.2px;height:10px;background:#f0f0f0;border:1px solid #c4c4c4;border-right-color:#b0b0b0;border-bottom-color:#b0b0b0;box-sizing:border-box;"></div>
<div class="t" style="left:161.43px;top:60.98px;font-size:9px;color:#262626;transform:scaleX(0.9200);">900</div>
<div style="left:186.98px;top:58.3px;width:34.2px;height:10px;background:#f0f0f0;border:1px solid #c4c4c4;border-right-color:#b0b0b0;border-bottom-color:#b0b0b0;box-sizing:border-box;"></div>
<div class="t" style="left:194.7px;top:60.98px;font-size:9px;color:#262626;transform:scaleX(0.9200);">1200</div>
<div style="left:222.7px;top:58.3px;width:34.2px;height:10px;background:#f0f0f0;border:1px solid #c4c4c4;border-right-color:#b0b0b0;border-bottom-color:#b0b0b0;box-sizing:border-box;"></div>
<div class="t" style="left:230.42px;top:60.98px;font-size:9px;color:#262626;transform:scaleX(0.9200);">1500</div>
<div style="left:258.42px;top:58.3px;width:34.2px;height:10px;background:#f0f0f0;border:1px solid #c4c4c4;border-right-color:#b0b0b0;border-bottom-color:#b0b0b0;box-sizing:border-box;"></div>
<div class="t" style="left:266.14px;top:60.98px;font-size:9px;color:#262626;transform:scaleX(0.9200);">1800</div>
<div style="left:294.14px;top:58.3px;width:34.2px;height:10px;background:#f0f0f0;border:1px solid #c4c4c4;border-right-color:#b0b0b0;border-bottom-color:#b0b0b0;box-sizing:border-box;"></div>
<div class="t" style="left:301.97px;top:60.98px;font-size:9px;color:#262626;transform:scaleX(0.9200);">2100</div>
<div style="left:329.86px;top:58.3px;width:34.2px;height:10px;background:#f0f0f0;border:1px solid #c4c4c4;border-right-color:#b0b0b0;border-bottom-color:#b0b0b0;box-sizing:border-box;"></div>
<div class="t" style="left:337.69px;top:60.98px;font-size:9px;color:#262626;transform:scaleX(0.9200);">2400</div>
<div style="left:365.58px;top:58.3px;width:34.2px;height:10px;background:#f0f0f0;border:1px solid #c4c4c4;border-right-color:#b0b0b0;border-bottom-color:#b0b0b0;box-sizing:border-box;"></div>
<div class="t" style="left:373.41px;top:60.98px;font-size:9px;color:#262626;transform:scaleX(0.9200);">2700</div>
<div style="left:401.3px;top:58.3px;width:34.2px;height:10px;background:#f0f0f0;border:1px solid #c4c4c4;border-right-color:#b0b0b0;border-bottom-color:#b0b0b0;box-sizing:border-box;"></div>
<div class="t" style="left:409.19px;top:60.98px;font-size:9px;color:#262626;transform:scaleX(0.9200);">3000</div>
<div style="left:437.02px;top:58.3px;width:34.2px;height:10px;background:#f0f0f0;border:1px solid #c4c4c4;border-right-color:#b0b0b0;border-bottom-color:#b0b0b0;box-sizing:border-box;"></div>
<div class="t" style="left:444.91px;top:60.98px;font-size:9px;color:#262626;transform:scaleX(0.9200);">3300</div>
<div style="left:472.74px;top:58.3px;width:34.2px;height:10px;background:#f0f0f0;border:1px solid #c4c4c4;border-right-color:#b0b0b0;border-bottom-color:#b0b0b0;box-sizing:border-box;"></div>
<div class="t" style="left:480.63px;top:60.98px;font-size:9px;color:#262626;transform:scaleX(0.9200);">3600</div>
<div style="left:508.46px;top:58.3px;width:34.2px;height:10px;background:#f0f0f0;border:1px solid #c4c4c4;border-right-color:#b0b0b0;border-bottom-color:#b0b0b0;box-sizing:border-box;"></div>
<div class="t" style="left:516.35px;top:60.98px;font-size:9px;color:#262626;transform:scaleX(0.9200);">3900</div>
<div style="left:544.18px;top:58.3px;width:34.2px;height:10px;background:#f0f0f0;border:1px solid #c4c4c4;border-right-color:#b0b0b0;border-bottom-color:#b0b0b0;box-sizing:border-box;"></div>
<div class="t" style="left:552.13px;top:60.98px;font-size:9px;color:#262626;transform:scaleX(0.9200);">4200</div>
<div style="left:579.9px;top:58.3px;width:34.2px;height:10px;background:#f0f0f0;border:1px solid #c4c4c4;border-right-color:#b0b0b0;border-bottom-color:#b0b0b0;box-sizing:border-box;"></div>
<div class="t" style="left:587.85px;top:60.98px;font-size:9px;color:#262626;transform:scaleX(0.9200);">4500</div>
<div style="left:615.62px;top:58.3px;width:34.2px;height:10px;background:#f0f0f0;border:1px solid #c4c4c4;border-right-color:#b0b0b0;border-bottom-color:#b0b0b0;box-sizing:border-box;"></div>
<div class="t" style="left:623.57px;top:60.98px;font-size:9px;color:#262626;transform:scaleX(0.9200);">4800</div>
<div style="left:7.7px;top:69.6px;width:33.7px;height:10px;background:#dedede;border-right:1px solid #c6c6c6;border-bottom:1px solid #c6c6c6;box-sizing:border-box;"></div>
<div class="t" style="left:30.82px;top:70.98px;font-size:9px;color:#262626;transform:scaleX(0.9200);">64</div>
<div style="left:43.6px;top:69.1px;width:35.4px;height:11.2px;background:#db7b7b;border:1.5px solid #505050;box-sizing:border-box;"></div>
<div class="t" style="left:57.72px;top:70.42px;font-size:8.6px;color:#1a1a1a;transform:scaleX(0.9200);">22.44</div>
<div style="left:79.82px;top:69.6px;width:34.2px;height:10px;background:#fd5454;"></div>
<div class="t" style="left:93.6px;top:70.42px;font-size:8.6px;color:#1a1a1a;transform:scaleX(0.9200);">21.91</div>
<div style="left:115.54px;top:69.6px;width:34.2px;height:10px;background:#fa5a5a;"></div>
<div class="t" style="left:129.24px;top:70.42px;font-size:8.6px;color:#1a1a1a;transform:scaleX(0.9200);">21.30</div>
<div style="left:151.26px;top:69.6px;width:34.2px;height:10px;background:#fc5757;"></div>
<div class="t" style="left:165px;top:70.42px;font-size:8.6px;color:#1a1a1a;transform:scaleX(0.9200);">21.65</div>
<div style="left:186.98px;top:69.6px;width:34.2px;height:10px;background:#fb5959;"></div>
<div class="t" style="left:200.72px;top:70.42px;font-size:8.6px;color:#1a1a1a;transform:scaleX(0.9200);">21.38</div>
<div style="left:222.7px;top:69.6px;width:34.2px;height:10px;background:#f85e5e;"></div>
<div class="t" style="left:236.48px;top:70.42px;font-size:8.6px;color:#1a1a1a;transform:scaleX(0.9200);">20.77</div>
<div style="left:258.42px;top:69.6px;width:34.2px;height:10px;background:#f26b6b;"></div>
<div class="t" style="left:272.2px;top:70.42px;font-size:8.6px;color:#1a1a1a;transform:scaleX(0.9200);">19.27</div>
<div style="left:294.14px;top:69.6px;width:34.2px;height:10px;background:#ed7575;"></div>
<div class="t" style="left:307.88px;top:70.42px;font-size:8.6px;color:#1a1a1a;transform:scaleX(0.9200);">18.13</div>
<div style="left:329.86px;top:69.6px;width:34.2px;height:10px;background:#ed7676;"></div>
<div class="t" style="left:343.6px;top:70.42px;font-size:8.6px;color:#1a1a1a;transform:scaleX(0.9200);">17.95</div>
<div style="left:365.58px;top:69.6px;width:34.2px;height:10px;background:#ea7b7b;"></div>
<div class="t" style="left:379.2px;top:70.42px;font-size:8.6px;color:#1a1a1a;transform:scaleX(0.9200);">17.34</div>
<div style="left:401.3px;top:69.6px;width:34.2px;height:10px;background:#e87f7f;"></div>
<div class="t" style="left:415px;top:70.42px;font-size:8.6px;color:#1a1a1a;transform:scaleX(0.9200);">16.90</div>
<div style="left:437.02px;top:69.6px;width:34.2px;height:10px;background:#e78282;"></div>
<div class="t" style="left:450.64px;top:70.42px;font-size:8.6px;color:#1a1a1a;transform:scaleX(0.9200);">16.54</div>
<div style="left:472.74px;top:69.6px;width:34.2px;height:10px;background:#e78383;"></div>
<div class="t" style="left:486.48px;top:70.42px;font-size:8.6px;color:#1a1a1a;transform:scaleX(0.9200);">16.46</div>
<div style="left:508.46px;top:69.6px;width:34.2px;height:10px;background:#e68484;"></div>
<div class="t" style="left:522.2px;top:70.42px;font-size:8.6px;color:#1a1a1a;transform:scaleX(0.9200);">16.28</div>
<div style="left:544.18px;top:69.6px;width:34.2px;height:10px;background:#9effff;"></div>
<div class="t" style="left:562.27px;top:70.42px;font-size:8.6px;color:#1a1a1a;transform:scaleX(0.9200);">0.00</div>
<div style="left:579.9px;top:69.6px;width:34.2px;height:10px;background:#9effff;"></div>
<div class="t" style="left:597.99px;top:70.42px;font-size:8.6px;color:#1a1a1a;transform:scaleX(0.9200);">0.00</div>
<div style="left:615.62px;top:69.6px;width:34.2px;height:10px;background:#9effff;"></div>
<div class="t" style="left:633.71px;top:70.42px;font-size:8.6px;color:#1a1a1a;transform:scaleX(0.9200);">0.00</div>
<div style="left:7.7px;top:81.36px;width:33.7px;height:10px;background:#f0f0f0;border-right:1px solid #c6c6c6;border-bottom:1px solid #c6c6c6;box-sizing:border-box;"></div>
<div class="t" style="left:30.94px;top:82.74px;font-size:9px;color:#262626;transform:scaleX(0.9200);">68</div>
<div style="left:44.1px;top:81.36px;width:34.2px;height:10px;background:#ff5050;"></div>
<div class="t" style="left:57.72px;top:82.18px;font-size:8.6px;color:#1a1a1a;transform:scaleX(0.9200);">22.44</div>
<div style="left:79.82px;top:81.36px;width:34.2px;height:10px;background:#fd5454;"></div>
<div class="t" style="left:93.52px;top:82.18px;font-size:8.6px;color:#1a1a1a;transform:scaleX(0.9200);">22.00</div>
<div style="left:115.54px;top:81.36px;width:34.2px;height:10px;background:#fa5a5a;"></div>
<div class="t" style="left:129.24px;top:82.18px;font-size:8.6px;color:#1a1a1a;transform:scaleX(0.9200);">21.30</div>
<div style="left:151.26px;top:81.36px;width:34.2px;height:10px;background:#fc5757;"></div>
<div class="t" style="left:165px;top:82.18px;font-size:8.6px;color:#1a1a1a;transform:scaleX(0.9200);">21.65</div>
<div style="left:186.98px;top:81.36px;width:34.2px;height:10px;background:#fb5757;"></div>
<div class="t" style="left:200.72px;top:82.18px;font-size:8.6px;color:#1a1a1a;transform:scaleX(0.9200);">21.56</div>
<div style="left:222.7px;top:81.36px;width:34.2px;height:10px;background:#fb5858;"></div>
<div class="t" style="left:236.48px;top:82.18px;font-size:8.6px;color:#1a1a1a;transform:scaleX(0.9200);">21.47</div>
<div style="left:258.42px;top:81.36px;width:34.2px;height:10px;background:#f76161;"></div>
<div class="t" style="left:272.2px;top:82.18px;font-size:8.6px;color:#1a1a1a;transform:scaleX(0.9200);">20.42</div>
<div style="left:294.14px;top:81.36px;width:34.2px;height:10px;background:#ef7171;"></div>
<div class="t" style="left:307.92px;top:82.18px;font-size:8.6px;color:#1a1a1a;transform:scaleX(0.9200);">18.57</div>
<div style="left:329.86px;top:81.36px;width:34.2px;height:10px;background:#ef7171;"></div>
<div class="t" style="left:343.64px;top:82.18px;font-size:8.6px;color:#1a1a1a;transform:scaleX(0.9200);">18.57</div>
<div style="left:365.58px;top:81.36px;width:34.2px;height:10px;background:#ed7575;"></div>
<div class="t" style="left:379.2px;top:82.18px;font-size:8.6px;color:#1a1a1a;transform:scaleX(0.9200);">18.04</div>
<div style="left:401.3px;top:81.36px;width:34.2px;height:10px;background:#eb7979;"></div>
<div class="t" style="left:415px;top:82.18px;font-size:8.6px;color:#1a1a1a;transform:scaleX(0.9200);">17.60</div>
<div style="left:437.02px;top:81.36px;width:34.2px;height:10px;background:#eb7a7a;"></div>
<div class="t" style="left:450.8px;top:82.18px;font-size:8.6px;color:#1a1a1a;transform:scaleX(0.9200);">17.51</div>
<div style="left:472.74px;top:81.36px;width:34.2px;height:10px;background:#ea7b7b;"></div>
<div class="t" style="left:486.52px;top:82.18px;font-size:8.6px;color:#1a1a1a;transform:scaleX(0.9200);">17.42</div>
<div style="left:508.46px;top:81.36px;width:34.2px;height:10px;background:#ea7b7b;"></div>
<div class="t" style="left:522.08px;top:82.18px;font-size:8.6px;color:#1a1a1a;transform:scaleX(0.9200);">17.34</div>
<div style="left:544.18px;top:81.36px;width:34.2px;height:10px;background:#9effff;"></div>
<div class="t" style="left:562.27px;top:82.18px;font-size:8.6px;color:#1a1a1a;transform:scaleX(0.9200);">0.00</div>
<div style="left:579.9px;top:81.36px;width:34.2px;height:10px;background:#9effff;"></div>
<div class="t" style="left:597.99px;top:82.18px;font-size:8.6px;color:#1a1a1a;transform:scaleX(0.9200);">0.00</div>
<div style="left:615.62px;top:81.36px;width:34.2px;height:10px;background:#9effff;"></div>
<div class="t" style="left:633.71px;top:82.18px;font-size:8.6px;color:#1a1a1a;transform:scaleX(0.9200);">0.00</div>
<div style="left:7.7px;top:93.12px;width:33.7px;height:10px;background:#f0f0f0;border-right:1px solid #c6c6c6;border-bottom:1px solid #c6c6c6;box-sizing:border-box;"></div>
<div class="t" style="left:30.98px;top:94.5px;font-size:9px;color:#262626;transform:scaleX(0.9200);">72</div>
<div style="left:44.1px;top:93.12px;width:34.2px;height:10px;background:#fb5757;"></div>
<div class="t" style="left:57.84px;top:93.94px;font-size:8.6px;color:#1a1a1a;transform:scaleX(0.9200);">21.56</div>
<div style="left:79.82px;top:93.12px;width:34.2px;height:10px;background:#fa5a5a;"></div>
<div class="t" style="left:93.52px;top:93.94px;font-size:8.6px;color:#1a1a1a;transform:scaleX(0.9200);">21.30</div>
<div style="left:115.54px;top:93.12px;width:34.2px;height:10px;background:#f85e5e;"></div>
<div class="t" style="left:129.32px;top:93.94px;font-size:8.6px;color:#1a1a1a;transform:scaleX(0.9200);">20.77</div>
<div style="left:151.26px;top:93.12px;width:34.2px;height:10px;background:#fe5353;"></div>
<div class="t" style="left:165.04px;top:93.94px;font-size:8.6px;color:#1a1a1a;transform:scaleX(0.9200);">22.09</div>
<div style="left:186.98px;top:93.12px;width:34.2px;height:10px;background:#fe5353;"></div>
<div class="t" style="left:200.76px;top:93.94px;font-size:8.6px;color:#1a1a1a;transform:scaleX(0.9200);">22.09</div>
<div style="left:222.7px;top:93.12px;width:34.2px;height:10px;background:#fe5353;"></div>
<div class="t" style="left:236.48px;top:93.94px;font-size:8.6px;color:#1a1a1a;transform:scaleX(0.9200);">22.09</div>
<div style="left:258.42px;top:93.12px;width:34.2px;height:10px;background:#fa5a5a;"></div>
<div class="t" style="left:272.2px;top:93.94px;font-size:8.6px;color:#1a1a1a;transform:scaleX(0.9200);">21.21</div>
<div style="left:294.14px;top:93.12px;width:34.2px;height:10px;background:#f36868;"></div>
<div class="t" style="left:307.92px;top:93.94px;font-size:8.6px;color:#1a1a1a;transform:scaleX(0.9200);">19.62</div>
<div style="left:329.86px;top:93.12px;width:34.2px;height:10px;background:#ef7171;"></div>
<div class="t" style="left:343.64px;top:93.94px;font-size:8.6px;color:#1a1a1a;transform:scaleX(0.9200);">18.57</div>
<div style="left:365.58px;top:93.12px;width:34.2px;height:10px;background:#f07070;"></div>
<div class="t" style="left:379.32px;top:93.94px;font-size:8.6px;color:#1a1a1a;transform:scaleX(0.9200);">18.66</div>
<div style="left:401.3px;top:93.12px;width:34.2px;height:10px;background:#f07070;"></div>
<div class="t" style="left:415.04px;top:93.94px;font-size:8.6px;color:#1a1a1a;transform:scaleX(0.9200);">18.66</div>
<div style="left:437.02px;top:93.12px;width:34.2px;height:10px;background:#ed7575;"></div>
<div class="t" style="left:450.64px;top:93.94px;font-size:8.6px;color:#1a1a1a;transform:scaleX(0.9200);">18.04</div>
<div style="left:472.74px;top:93.12px;width:34.2px;height:10px;background:#ec7878;"></div>
<div class="t" style="left:486.48px;top:93.94px;font-size:8.6px;color:#1a1a1a;transform:scaleX(0.9200);">17.78</div>
<div style="left:508.46px;top:93.12px;width:34.2px;height:10px;background:#eb7979;"></div>
<div class="t" style="left:522.16px;top:93.94px;font-size:8.6px;color:#1a1a1a;transform:scaleX(0.9200);">17.60</div>
<div style="left:544.18px;top:93.12px;width:34.2px;height:10px;background:#9effff;"></div>
<div class="t" style="left:562.27px;top:93.94px;font-size:8.6px;color:#1a1a1a;transform:scaleX(0.9200);">0.00</div>
<div style="left:579.9px;top:93.12px;width:34.2px;height:10px;background:#9effff;"></div>
<div class="t" style="left:597.99px;top:93.94px;font-size:8.6px;color:#1a1a1a;transform:scaleX(0.9200);">0.00</div>
<div style="left:615.62px;top:93.12px;width:34.2px;height:10px;background:#9effff;"></div>
<div class="t" style="left:633.71px;top:93.94px;font-size:8.6px;color:#1a1a1a;transform:scaleX(0.9200);">0.00</div>
<div style="left:7.7px;top:104.88px;width:33.7px;height:10px;background:#f0f0f0;border-right:1px solid #c6c6c6;border-bottom:1px solid #c6c6c6;box-sizing:border-box;"></div>
<div class="t" style="left:30.94px;top:106.26px;font-size:9px;color:#262626;transform:scaleX(0.9200);">76</div>
<div style="left:44.1px;top:104.88px;width:34.2px;height:10px;background:#fa5b5b;"></div>
<div class="t" style="left:57.88px;top:105.7px;font-size:8.6px;color:#1a1a1a;transform:scaleX(0.9200);">21.12</div>
<div style="left:79.82px;top:104.88px;width:34.2px;height:10px;background:#f95d5d;"></div>
<div class="t" style="left:93.56px;top:105.7px;font-size:8.6px;color:#1a1a1a;transform:scaleX(0.9200);">20.86</div>
<div style="left:115.54px;top:104.88px;width:34.2px;height:10px;background:#f66262;"></div>
<div class="t" style="left:129.28px;top:105.7px;font-size:8.6px;color:#1a1a1a;transform:scaleX(0.9200);">20.33</div>
<div style="left:151.26px;top:104.88px;width:34.2px;height:10px;background:#ff5050;"></div>
<div class="t" style="left:164.88px;top:105.7px;font-size:8.6px;color:#1a1a1a;transform:scaleX(0.9200);">22.44</div>
<div style="left:186.98px;top:104.88px;width:34.2px;height:10px;background:#ff5050;"></div>
<div class="t" style="left:200.6px;top:105.7px;font-size:8.6px;color:#1a1a1a;transform:scaleX(0.9200);">22.44</div>
<div style="left:222.7px;top:104.88px;width:34.2px;height:10px;background:#ff5050;"></div>
<div class="t" style="left:236.32px;top:105.7px;font-size:8.6px;color:#1a1a1a;transform:scaleX(0.9200);">22.44</div>
<div style="left:258.42px;top:104.88px;width:34.2px;height:10px;background:#fc5757;"></div>
<div class="t" style="left:272.16px;top:105.7px;font-size:8.6px;color:#1a1a1a;transform:scaleX(0.9200);">21.65</div>
<div style="left:294.14px;top:104.88px;width:34.2px;height:10px;background:#f36868;"></div>
<div class="t" style="left:307.92px;top:105.7px;font-size:8.6px;color:#1a1a1a;transform:scaleX(0.9200);">19.62</div>
<div style="left:329.86px;top:104.88px;width:34.2px;height:10px;background:#ef7171;"></div>
<div class="t" style="left:343.64px;top:105.7px;font-size:8.6px;color:#1a1a1a;transform:scaleX(0.9200);">18.57</div>
<div style="left:365.58px;top:104.88px;width:34.2px;height:10px;background:#f07070;"></div>
<div class="t" style="left:379.32px;top:105.7px;font-size:8.6px;color:#1a1a1a;transform:scaleX(0.9200);">18.66</div>
<div style="left:401.3px;top:104.88px;width:34.2px;height:10px;background:#f07070;"></div>
<div class="t" style="left:415.04px;top:105.7px;font-size:8.6px;color:#1a1a1a;transform:scaleX(0.9200);">18.66</div>
<div style="left:437.02px;top:104.88px;width:34.2px;height:10px;background:#ed7575;"></div>
<div class="t" style="left:450.64px;top:105.7px;font-size:8.6px;color:#1a1a1a;transform:scaleX(0.9200);">18.04</div>
<div style="left:472.74px;top:104.88px;width:34.2px;height:10px;background:#ec7878;"></div>
<div class="t" style="left:486.48px;top:105.7px;font-size:8.6px;color:#1a1a1a;transform:scaleX(0.9200);">17.78</div>
<div style="left:508.46px;top:104.88px;width:34.2px;height:10px;background:#eb7979;"></div>
<div class="t" style="left:522.16px;top:105.7px;font-size:8.6px;color:#1a1a1a;transform:scaleX(0.9200);">17.60</div>
<div style="left:544.18px;top:104.88px;width:34.2px;height:10px;background:#9effff;"></div>
<div class="t" style="left:562.27px;top:105.7px;font-size:8.6px;color:#1a1a1a;transform:scaleX(0.9200);">0.00</div>
<div style="left:579.9px;top:104.88px;width:34.2px;height:10px;background:#9effff;"></div>
<div class="t" style="left:597.99px;top:105.7px;font-size:8.6px;color:#1a1a1a;transform:scaleX(0.9200);">0.00</div>
<div style="left:615.62px;top:104.88px;width:34.2px;height:10px;background:#9effff;"></div>
<div class="t" style="left:633.71px;top:105.7px;font-size:8.6px;color:#1a1a1a;transform:scaleX(0.9200);">0.00</div>
<div style="left:7.7px;top:116.64px;width:33.7px;height:10px;background:#f0f0f0;border-right:1px solid #c6c6c6;border-bottom:1px solid #c6c6c6;box-sizing:border-box;"></div>
<div class="t" style="left:30.9px;top:118.02px;font-size:9px;color:#262626;transform:scaleX(0.9200);">80</div>
<div style="left:44.1px;top:116.64px;width:34.2px;height:10px;background:#f85f5f;"></div>
<div class="t" style="left:57.84px;top:117.46px;font-size:8.6px;color:#1a1a1a;transform:scaleX(0.9200);">20.68</div>
<div style="left:79.82px;top:116.64px;width:34.2px;height:10px;background:#f76161;"></div>
<div class="t" style="left:93.6px;top:117.46px;font-size:8.6px;color:#1a1a1a;transform:scaleX(0.9200);">20.42</div>
<div style="left:115.54px;top:116.64px;width:34.2px;height:10px;background:#f56666;"></div>
<div class="t" style="left:129.32px;top:117.46px;font-size:8.6px;color:#1a1a1a;transform:scaleX(0.9200);">19.89</div>
<div style="left:151.26px;top:116.64px;width:34.2px;height:10px;background:#ff5050;"></div>
<div class="t" style="left:164.88px;top:117.46px;font-size:8.6px;color:#1a1a1a;transform:scaleX(0.9200);">22.44</div>
<div style="left:186.98px;top:116.64px;width:34.2px;height:10px;background:#ff5050;"></div>
<div class="t" style="left:200.6px;top:117.46px;font-size:8.6px;color:#1a1a1a;transform:scaleX(0.9200);">22.44</div>
<div style="left:222.7px;top:116.64px;width:34.2px;height:10px;background:#ff5050;"></div>
<div class="t" style="left:236.32px;top:117.46px;font-size:8.6px;color:#1a1a1a;transform:scaleX(0.9200);">22.44</div>
<div style="left:258.42px;top:116.64px;width:34.2px;height:10px;background:#fe5252;"></div>
<div class="t" style="left:272.16px;top:117.46px;font-size:8.6px;color:#1a1a1a;transform:scaleX(0.9200);">22.18</div>
<div style="left:294.14px;top:116.64px;width:34.2px;height:10px;background:#f36868;"></div>
<div class="t" style="left:307.92px;top:117.46px;font-size:8.6px;color:#1a1a1a;transform:scaleX(0.9200);">19.62</div>
<div style="left:329.86px;top:116.64px;width:34.2px;height:10px;background:#ef7171;"></div>
<div class="t" style="left:343.64px;top:117.46px;font-size:8.6px;color:#1a1a1a;transform:scaleX(0.9200);">18.57</div>
<div style="left:365.58px;top:116.64px;width:34.2px;height:10px;background:#f07070;"></div>
<div class="t" style="left:379.32px;top:117.46px;font-size:8.6px;color:#1a1a1a;transform:scaleX(0.9200);">18.66</div>
<div style="left:401.3px;top:116.64px;width:34.2px;height:10px;background:#f07070;"></div>
<div class="t" style="left:415.04px;top:117.46px;font-size:8.6px;color:#1a1a1a;transform:scaleX(0.9200);">18.66</div>
<div style="left:437.02px;top:116.64px;width:34.2px;height:10px;background:#ed7575;"></div>
<div class="t" style="left:450.64px;top:117.46px;font-size:8.6px;color:#1a1a1a;transform:scaleX(0.9200);">18.04</div>
<div style="left:472.74px;top:116.64px;width:34.2px;height:10px;background:#ec7878;"></div>
<div class="t" style="left:486.48px;top:117.46px;font-size:8.6px;color:#1a1a1a;transform:scaleX(0.9200);">17.78</div>
<div style="left:508.46px;top:116.64px;width:34.2px;height:10px;background:#eb7979;"></div>
<div class="t" style="left:522.16px;top:117.46px;font-size:8.6px;color:#1a1a1a;transform:scaleX(0.9200);">17.60</div>
<div style="left:544.18px;top:116.64px;width:34.2px;height:10px;background:#9effff;"></div>
<div class="t" style="left:562.27px;top:117.46px;font-size:8.6px;color:#1a1a1a;transform:scaleX(0.9200);">0.00</div>
<div style="left:579.9px;top:116.64px;width:34.2px;height:10px;background:#9effff;"></div>
<div class="t" style="left:597.99px;top:117.46px;font-size:8.6px;color:#1a1a1a;transform:scaleX(0.9200);">0.00</div>
<div style="left:615.62px;top:116.64px;width:34.2px;height:10px;background:#9effff;"></div>
<div class="t" style="left:633.71px;top:117.46px;font-size:8.6px;color:#1a1a1a;transform:scaleX(0.9200);">0.00</div>
<div style="left:7.7px;top:128.4px;width:33.7px;height:10px;background:#f0f0f0;border-right:1px solid #c6c6c6;border-bottom:1px solid #c6c6c6;box-sizing:border-box;"></div>
<div class="t" style="left:30.82px;top:129.78px;font-size:9px;color:#262626;transform:scaleX(0.9200);">84</div>
<div style="left:44.1px;top:128.4px;width:34.2px;height:10px;background:#f66363;"></div>
<div class="t" style="left:57.72px;top:129.22px;font-size:8.6px;color:#1a1a1a;transform:scaleX(0.9200);">20.24</div>
<div style="left:79.82px;top:128.4px;width:34.2px;height:10px;background:#f56565;"></div>
<div class="t" style="left:93.56px;top:129.22px;font-size:8.6px;color:#1a1a1a;transform:scaleX(0.9200);">19.98</div>
<div style="left:115.54px;top:128.4px;width:34.2px;height:10px;background:#f36969;"></div>
<div class="t" style="left:129.28px;top:129.22px;font-size:8.6px;color:#1a1a1a;transform:scaleX(0.9200);">19.45</div>
<div style="left:151.26px;top:128.4px;width:34.2px;height:10px;background:#ff5050;"></div>
<div class="t" style="left:164.88px;top:129.22px;font-size:8.6px;color:#1a1a1a;transform:scaleX(0.9200);">22.44</div>
<div style="left:186.98px;top:128.4px;width:34.2px;height:10px;background:#ff5050;"></div>
<div class="t" style="left:200.6px;top:129.22px;font-size:8.6px;color:#1a1a1a;transform:scaleX(0.9200);">22.44</div>
<div style="left:222.7px;top:128.4px;width:34.2px;height:10px;background:#ff5050;"></div>
<div class="t" style="left:236.32px;top:129.22px;font-size:8.6px;color:#1a1a1a;transform:scaleX(0.9200);">22.44</div>
<div style="left:258.42px;top:128.4px;width:34.2px;height:10px;background:#ff5050;"></div>
<div class="t" style="left:272.04px;top:129.22px;font-size:8.6px;color:#1a1a1a;transform:scaleX(0.9200);">22.44</div>
<div style="left:294.14px;top:128.4px;width:34.2px;height:10px;background:#f36868;"></div>
<div class="t" style="left:307.92px;top:129.22px;font-size:8.6px;color:#1a1a1a;transform:scaleX(0.9200);">19.62</div>
<div style="left:329.86px;top:128.4px;width:34.2px;height:10px;background:#ef7171;"></div>
<div class="t" style="left:343.64px;top:129.22px;font-size:8.6px;color:#1a1a1a;transform:scaleX(0.9200);">18.57</div>
<div style="left:365.58px;top:128.4px;width:34.2px;height:10px;background:#f07070;"></div>
<div class="t" style="left:379.32px;top:129.22px;font-size:8.6px;color:#1a1a1a;transform:scaleX(0.9200);">18.66</div>
<div style="left:401.3px;top:128.4px;width:34.2px;height:10px;background:#f07070;"></div>
<div class="t" style="left:415.04px;top:129.22px;font-size:8.6px;color:#1a1a1a;transform:scaleX(0.9200);">18.66</div>
<div style="left:437.02px;top:128.4px;width:34.2px;height:10px;background:#ed7575;"></div>
<div class="t" style="left:450.64px;top:129.22px;font-size:8.6px;color:#1a1a1a;transform:scaleX(0.9200);">18.04</div>
<div style="left:472.74px;top:128.4px;width:34.2px;height:10px;background:#ec7878;"></div>
<div class="t" style="left:486.48px;top:129.22px;font-size:8.6px;color:#1a1a1a;transform:scaleX(0.9200);">17.78</div>
<div style="left:508.46px;top:128.4px;width:34.2px;height:10px;background:#eb7979;"></div>
<div class="t" style="left:522.16px;top:129.22px;font-size:8.6px;color:#1a1a1a;transform:scaleX(0.9200);">17.60</div>
<div style="left:544.18px;top:128.4px;width:34.2px;height:10px;background:#9effff;"></div>
<div class="t" style="left:562.27px;top:129.22px;font-size:8.6px;color:#1a1a1a;transform:scaleX(0.9200);">0.00</div>
<div style="left:579.9px;top:128.4px;width:34.2px;height:10px;background:#9effff;"></div>
<div class="t" style="left:597.99px;top:129.22px;font-size:8.6px;color:#1a1a1a;transform:scaleX(0.9200);">0.00</div>
<div style="left:615.62px;top:128.4px;width:34.2px;height:10px;background:#9effff;"></div>
<div class="t" style="left:633.71px;top:129.22px;font-size:8.6px;color:#1a1a1a;transform:scaleX(0.9200);">0.00</div>
<div style="left:7.7px;top:140.16px;width:33.7px;height:10px;background:#f0f0f0;border-right:1px solid #c6c6c6;border-bottom:1px solid #c6c6c6;box-sizing:border-box;"></div>
<div class="t" style="left:30.94px;top:141.54px;font-size:9px;color:#262626;transform:scaleX(0.9200);">88</div>
<div style="left:44.1px;top:140.16px;width:34.2px;height:10px;background:#f46666;"></div>
<div class="t" style="left:57.8px;top:140.98px;font-size:8.6px;color:#1a1a1a;transform:scaleX(0.9200);">19.80</div>
<div style="left:79.82px;top:140.16px;width:34.2px;height:10px;background:#f36969;"></div>
<div class="t" style="left:93.44px;top:140.98px;font-size:8.6px;color:#1a1a1a;transform:scaleX(0.9200);">19.54</div>
<div style="left:115.54px;top:140.16px;width:34.2px;height:10px;background:#f16d6d;"></div>
<div class="t" style="left:129.32px;top:140.98px;font-size:8.6px;color:#1a1a1a;transform:scaleX(0.9200);">19.01</div>
<div style="left:151.26px;top:140.16px;width:34.2px;height:10px;background:#ff5050;"></div>
<div class="t" style="left:164.88px;top:140.98px;font-size:8.6px;color:#1a1a1a;transform:scaleX(0.9200);">22.44</div>
<div style="left:186.98px;top:140.16px;width:34.2px;height:10px;background:#ff5050;"></div>
<div class="t" style="left:200.6px;top:140.98px;font-size:8.6px;color:#1a1a1a;transform:scaleX(0.9200);">22.44</div>
<div style="left:222.7px;top:140.16px;width:34.2px;height:10px;background:#ff5050;"></div>
<div class="t" style="left:236.32px;top:140.98px;font-size:8.6px;color:#1a1a1a;transform:scaleX(0.9200);">22.44</div>
<div style="left:258.42px;top:140.16px;width:34.2px;height:10px;background:#ff5050;"></div>
<div class="t" style="left:272.04px;top:140.98px;font-size:8.6px;color:#1a1a1a;transform:scaleX(0.9200);">22.44</div>
<div style="left:294.14px;top:140.16px;width:34.2px;height:10px;background:#f36868;"></div>
<div class="t" style="left:307.92px;top:140.98px;font-size:8.6px;color:#1a1a1a;transform:scaleX(0.9200);">19.62</div>
<div style="left:329.86px;top:140.16px;width:34.2px;height:10px;background:#ef7171;"></div>
<div class="t" style="left:343.64px;top:140.98px;font-size:8.6px;color:#1a1a1a;transform:scaleX(0.9200);">18.57</div>
<div style="left:365.58px;top:140.16px;width:34.2px;height:10px;background:#f07070;"></div>
<div class="t" style="left:379.32px;top:140.98px;font-size:8.6px;color:#1a1a1a;transform:scaleX(0.9200);">18.66</div>
<div style="left:401.3px;top:140.16px;width:34.2px;height:10px;background:#f07070;"></div>
<div class="t" style="left:415.04px;top:140.98px;font-size:8.6px;color:#1a1a1a;transform:scaleX(0.9200);">18.66</div>
<div style="left:437.02px;top:140.16px;width:34.2px;height:10px;background:#ed7575;"></div>
<div class="t" style="left:450.64px;top:140.98px;font-size:8.6px;color:#1a1a1a;transform:scaleX(0.9200);">18.04</div>
<div style="left:472.74px;top:140.16px;width:34.2px;height:10px;background:#ec7878;"></div>
<div class="t" style="left:486.48px;top:140.98px;font-size:8.6px;color:#1a1a1a;transform:scaleX(0.9200);">17.78</div>
<div style="left:508.46px;top:140.16px;width:34.2px;height:10px;background:#eb7979;"></div>
<div class="t" style="left:522.16px;top:140.98px;font-size:8.6px;color:#1a1a1a;transform:scaleX(0.9200);">17.60</div>
<div style="left:544.18px;top:140.16px;width:34.2px;height:10px;background:#9effff;"></div>
<div class="t" style="left:562.27px;top:140.98px;font-size:8.6px;color:#1a1a1a;transform:scaleX(0.9200);">0.00</div>
<div style="left:579.9px;top:140.16px;width:34.2px;height:10px;background:#9effff;"></div>
<div class="t" style="left:597.99px;top:140.98px;font-size:8.6px;color:#1a1a1a;transform:scaleX(0.9200);">0.00</div>
<div style="left:615.62px;top:140.16px;width:34.2px;height:10px;background:#9effff;"></div>
<div class="t" style="left:633.71px;top:140.98px;font-size:8.6px;color:#1a1a1a;transform:scaleX(0.9200);">0.00</div>
<div style="left:7.7px;top:151.92px;width:33.7px;height:10px;background:#f0f0f0;border-right:1px solid #c6c6c6;border-bottom:1px solid #c6c6c6;box-sizing:border-box;"></div>
<div class="t" style="left:30.98px;top:153.3px;font-size:9px;color:#262626;transform:scaleX(0.9200);">92</div>
<div style="left:44.1px;top:151.92px;width:34.2px;height:10px;background:#f26a6a;"></div>
<div class="t" style="left:57.84px;top:152.74px;font-size:8.6px;color:#1a1a1a;transform:scaleX(0.9200);">19.36</div>
<div style="left:79.82px;top:151.92px;width:34.2px;height:10px;background:#f16c6c;"></div>
<div class="t" style="left:93.52px;top:152.74px;font-size:8.6px;color:#1a1a1a;transform:scaleX(0.9200);">19.10</div>
<div style="left:115.54px;top:151.92px;width:34.2px;height:10px;background:#ef7171;"></div>
<div class="t" style="left:129.32px;top:152.74px;font-size:8.6px;color:#1a1a1a;transform:scaleX(0.9200);">18.57</div>
<div style="left:151.26px;top:151.92px;width:34.2px;height:10px;background:#ff5050;"></div>
<div class="t" style="left:164.88px;top:152.74px;font-size:8.6px;color:#1a1a1a;transform:scaleX(0.9200);">22.44</div>
<div style="left:186.98px;top:151.92px;width:34.2px;height:10px;background:#ff5050;"></div>
<div class="t" style="left:200.6px;top:152.74px;font-size:8.6px;color:#1a1a1a;transform:scaleX(0.9200);">22.44</div>
<div style="left:222.7px;top:151.92px;width:34.2px;height:10px;background:#ff5050;"></div>
<div class="t" style="left:236.32px;top:152.74px;font-size:8.6px;color:#1a1a1a;transform:scaleX(0.9200);">22.44</div>
<div style="left:258.42px;top:151.92px;width:34.2px;height:10px;background:#ff5050;"></div>
<div class="t" style="left:272.04px;top:152.74px;font-size:8.6px;color:#1a1a1a;transform:scaleX(0.9200);">22.44</div>
<div style="left:294.14px;top:151.92px;width:34.2px;height:10px;background:#f36868;"></div>
<div class="t" style="left:307.92px;top:152.74px;font-size:8.6px;color:#1a1a1a;transform:scaleX(0.9200);">19.62</div>
<div style="left:329.86px;top:151.92px;width:34.2px;height:10px;background:#ef7171;"></div>
<div class="t" style="left:343.64px;top:152.74px;font-size:8.6px;color:#1a1a1a;transform:scaleX(0.9200);">18.57</div>
<div style="left:365.58px;top:151.92px;width:34.2px;height:10px;background:#f07070;"></div>
<div class="t" style="left:379.32px;top:152.74px;font-size:8.6px;color:#1a1a1a;transform:scaleX(0.9200);">18.66</div>
<div style="left:401.3px;top:151.92px;width:34.2px;height:10px;background:#f07070;"></div>
<div class="t" style="left:415.04px;top:152.74px;font-size:8.6px;color:#1a1a1a;transform:scaleX(0.9200);">18.66</div>
<div style="left:437.02px;top:151.92px;width:34.2px;height:10px;background:#ed7575;"></div>
<div class="t" style="left:450.64px;top:152.74px;font-size:8.6px;color:#1a1a1a;transform:scaleX(0.9200);">18.04</div>
<div style="left:472.74px;top:151.92px;width:34.2px;height:10px;background:#ec7878;"></div>
<div class="t" style="left:486.48px;top:152.74px;font-size:8.6px;color:#1a1a1a;transform:scaleX(0.9200);">17.78</div>
<div style="left:508.46px;top:151.92px;width:34.2px;height:10px;background:#eb7979;"></div>
<div class="t" style="left:522.16px;top:152.74px;font-size:8.6px;color:#1a1a1a;transform:scaleX(0.9200);">17.60</div>
<div style="left:544.18px;top:151.92px;width:34.2px;height:10px;background:#9effff;"></div>
<div class="t" style="left:562.27px;top:152.74px;font-size:8.6px;color:#1a1a1a;transform:scaleX(0.9200);">0.00</div>
<div style="left:579.9px;top:151.92px;width:34.2px;height:10px;background:#9effff;"></div>
<div class="t" style="left:597.99px;top:152.74px;font-size:8.6px;color:#1a1a1a;transform:scaleX(0.9200);">0.00</div>
<div style="left:615.62px;top:151.92px;width:34.2px;height:10px;background:#9effff;"></div>
<div class="t" style="left:633.71px;top:152.74px;font-size:8.6px;color:#1a1a1a;transform:scaleX(0.9200);">0.00</div>
<div style="left:7.7px;top:163.68px;width:33.7px;height:10px;background:#f0f0f0;border-right:1px solid #c6c6c6;border-bottom:1px solid #c6c6c6;box-sizing:border-box;"></div>
<div class="t" style="left:30.94px;top:165.06px;font-size:9px;color:#262626;transform:scaleX(0.9200);">96</div>
<div style="left:44.1px;top:163.68px;width:34.2px;height:10px;background:#f16e6e;"></div>
<div class="t" style="left:57.88px;top:164.5px;font-size:8.6px;color:#1a1a1a;transform:scaleX(0.9200);">18.92</div>
<div style="left:79.82px;top:163.68px;width:34.2px;height:10px;background:#f07070;"></div>
<div class="t" style="left:93.56px;top:164.5px;font-size:8.6px;color:#1a1a1a;transform:scaleX(0.9200);">18.66</div>
<div style="left:115.54px;top:163.68px;width:34.2px;height:10px;background:#ed7575;"></div>
<div class="t" style="left:129.28px;top:164.5px;font-size:8.6px;color:#1a1a1a;transform:scaleX(0.9200);">18.13</div>
<div style="left:151.26px;top:163.68px;width:34.2px;height:10px;background:#ff5050;"></div>
<div class="t" style="left:164.88px;top:164.5px;font-size:8.6px;color:#1a1a1a;transform:scaleX(0.9200);">22.44</div>
<div style="left:186.98px;top:163.68px;width:34.2px;height:10px;background:#ff5050;"></div>
<div class="t" style="left:200.6px;top:164.5px;font-size:8.6px;color:#1a1a1a;transform:scaleX(0.9200);">22.44</div>
<div style="left:222.7px;top:163.68px;width:34.2px;height:10px;background:#ff5050;"></div>
<div class="t" style="left:236.32px;top:164.5px;font-size:8.6px;color:#1a1a1a;transform:scaleX(0.9200);">22.44</div>
<div style="left:258.42px;top:163.68px;width:34.2px;height:10px;background:#ff5050;"></div>
<div class="t" style="left:272.04px;top:164.5px;font-size:8.6px;color:#1a1a1a;transform:scaleX(0.9200);">22.44</div>
<div style="left:294.14px;top:163.68px;width:34.2px;height:10px;background:#f36868;"></div>
<div class="t" style="left:307.92px;top:164.5px;font-size:8.6px;color:#1a1a1a;transform:scaleX(0.9200);">19.62</div>
<div style="left:329.86px;top:163.68px;width:34.2px;height:10px;background:#ef7171;"></div>
<div class="t" style="left:343.64px;top:164.5px;font-size:8.6px;color:#1a1a1a;transform:scaleX(0.9200);">18.57</div>
<div style="left:365.58px;top:163.68px;width:34.2px;height:10px;background:#f07070;"></div>
<div class="t" style="left:379.32px;top:164.5px;font-size:8.6px;color:#1a1a1a;transform:scaleX(0.9200);">18.66</div>
<div style="left:401.3px;top:163.68px;width:34.2px;height:10px;background:#f07070;"></div>
<div class="t" style="left:415.04px;top:164.5px;font-size:8.6px;color:#1a1a1a;transform:scaleX(0.9200);">18.66</div>
<div style="left:437.02px;top:163.68px;width:34.2px;height:10px;background:#ed7575;"></div>
<div class="t" style="left:450.64px;top:164.5px;font-size:8.6px;color:#1a1a1a;transform:scaleX(0.9200);">18.04</div>
<div style="left:472.74px;top:163.68px;width:34.2px;height:10px;background:#ec7878;"></div>
<div class="t" style="left:486.48px;top:164.5px;font-size:8.6px;color:#1a1a1a;transform:scaleX(0.9200);">17.78</div>
<div style="left:508.46px;top:163.68px;width:34.2px;height:10px;background:#eb7979;"></div>
<div class="t" style="left:522.16px;top:164.5px;font-size:8.6px;color:#1a1a1a;transform:scaleX(0.9200);">17.60</div>
<div style="left:544.18px;top:163.68px;width:34.2px;height:10px;background:#9effff;"></div>
<div class="t" style="left:562.27px;top:164.5px;font-size:8.6px;color:#1a1a1a;transform:scaleX(0.9200);">0.00</div>
<div style="left:579.9px;top:163.68px;width:34.2px;height:10px;background:#9effff;"></div>
<div class="t" style="left:597.99px;top:164.5px;font-size:8.6px;color:#1a1a1a;transform:scaleX(0.9200);">0.00</div>
<div style="left:615.62px;top:163.68px;width:34.2px;height:10px;background:#9effff;"></div>
<div class="t" style="left:633.71px;top:164.5px;font-size:8.6px;color:#1a1a1a;transform:scaleX(0.9200);">0.00</div>
<div style="left:6px;top:198.3px;width:666px;height:19px;background:#f0f0f0;border-top:1px solid #dcdcdc;box-sizing:border-box;"></div>
<div style="left:63.8px;top:200.3px;width:1px;height:16px;background:#dadada;"></div>
<div style="left:122.5px;top:200.3px;width:1px;height:16px;background:#dadada;"></div>
<svg style="position:absolute;left:662.5px;top:207.8px" width="8" height="8" viewBox="0 0 8 8"><rect x="6" y="0" width="1.5" height="1.5" fill="#a0a0a0"/><rect x="6" y="3" width="1.5" height="1.5" fill="#a0a0a0"/><rect x="3" y="3" width="1.5" height="1.5" fill="#a0a0a0"/><rect x="6" y="6" width="1.5" height="1.5" fill="#a0a0a0"/><rect x="3" y="6" width="1.5" height="1.5" fill="#a0a0a0"/><rect x="0" y="6" width="1.5" height="1.5" fill="#a0a0a0"/></svg>
</div>
<div class="win" style="left:-0.3px;top:457.4px;width:392.3px;height:129.6px;">
<div style="left:0px;top:0px;width:392.3px;height:129.6px;background:linear-gradient(#bccad9 0px,#c6d4e3 10px,#d4e0ed 22px,#d8e4f0 30px);border:1px solid #80868e;border-bottom-color:#8a9098;border-radius:6px 6px 0 0;box-sizing:border-box;"></div>
<svg style="position:absolute;left:7.1px;top:9.9px" width="13.2" height="9.8" viewBox="0 0 13.2 9.8"><rect x="0.3" y="2.1" width="12.6" height="5.6" rx="1" fill="#000"/><rect x="1.20" y="0" width="1.3" height="2.6" fill="#222"/><rect x="1.20" y="7.2" width="1.3" height="2.6" fill="#222"/><rect x="3.60" y="0" width="1.3" height="2.6" fill="#222"/><rect x="3.60" y="7.2" width="1.3" height="2.6" fill="#222"/><rect x="6.00" y="0" width="1.3" height="2.6" fill="#222"/><rect x="6.00" y="7.2" width="1.3" height="2.6" fill="#222"/><rect x="8.40" y="0" width="1.3" height="2.6" fill="#222"/><rect x="8.40" y="7.2" width="1.3" height="2.6" fill="#222"/><rect x="10.80" y="0" width="1.3" height="2.6" fill="#222"/><rect x="10.80" y="7.2" width="1.3" height="2.6" fill="#222"/></svg>
<div class="t" style="left:23.87px;top:11.25px;font-size:9.15px;color:#9ea6b0;">Pump Calibration Low Fuel, Fuel to PW</div>
<svg style="position:absolute;left:359.3px;top:7.85px" width="25.2" height="13.5" viewBox="0 0 25.2 13.5"><rect x="0.5" y="0.5" width="24.2" height="12.5" rx="2.5" fill="#c9d5e2" stroke="#8d9bae" stroke-width="1"/><path d="M9.2 4.6 L14.6 8.6 M14.6 4.6 L9.2 8.6" stroke="#737b86" stroke-width="3.4" stroke-linecap="round" fill="none"/><path d="M9.2 4.6 L14.6 8.6 M14.6 4.6 L9.2 8.6" stroke="#f0f0f0" stroke-width="1.8" stroke-linecap="round" fill="none"/></svg>
<div style="left:6px;top:24.4px;width:379.8px;height:99px;background:#f0f0f0;"></div>
<div style="left:8.2px;top:25.8px;width:1px;height:15px;background:#c4c4c4;border-right:1px solid #fff;"></div>
<svg style="position:absolute;left:15.8px;top:28.6px" width="11" height="11" viewBox="0 0 11 11"><rect x="0.5" y="0.5" width="10" height="10" fill="#808000" stroke="#000" stroke-width="1"/><rect x="2.6" y="1" width="5.6" height="4.4" fill="#fff"/><rect x="2.6" y="7" width="6" height="3" fill="#000"/><rect x="6.6" y="7.8" width="1.3" height="1.6" fill="#fff"/></svg>
<svg style="position:absolute;left:34.6px;top:29.2px" width="9.2" height="10.6" viewBox="0 0 9.2 10.6"><path d="M1 1 L8.2 9.6 M8.2 1 L1 9.6" stroke="#ff0000" stroke-width="1.8" fill="none"/></svg>
<svg style="position:absolute;left:51.5px;top:29.5px" width="12" height="10.4" viewBox="0 0 12 10.4"><rect x="0.3" y="0" width="1.1" height="9.6" fill="#a8a8a8"/><path d="M0.3 9.7 H12" stroke="#333" stroke-width="1.1" stroke-dasharray="1.3 1.1" fill="none"/><path d="M0.8 3.6 L3.3 6.2 L5.6 4.2 L8.2 6.6 L11.6 2.2" stroke="#ff2020" stroke-width="1.3" fill="none"/></svg>
<svg style="position:absolute;left:68.8px;top:27.8px" width="12.6" height="11.8" viewBox="0 0 12.6 11.8"><path d="M1.6 2.8 L6.3 1.4 L11 2.8" stroke="#111" stroke-width="1.3" fill="none"/><circle cx="6.3" cy="1.2" r="1.1" fill="#000"/><rect x="5.7" y="1" width="1.3" height="10" fill="#222"/><path d="M1.8 2.8 L0.2 6.6 M1.8 2.8 L3.6 6.6 M10.8 2.8 L9 6.6 M10.8 2.8 L12.4 6.6" stroke="#888" stroke-width="0.7" fill="none"/><path d="M-0.2 6.3 H4.2 Q4 8.6 2 8.6 Q0 8.6 -0.2 6.3 Z" fill="#e2e200" stroke="#666" stroke-width="0.5"/><path d="M8.4 6.3 H12.8 Q12.6 8.6 10.6 8.6 Q8.6 8.6 8.4 6.3 Z" fill="#e2e200" stroke="#666" stroke-width="0.5"/><path d="M2.4 11.6 Q6.3 9.6 10.2 11.6 Z" fill="#000"/></svg>
<svg style="position:absolute;left:87.5px;top:27.6px" width="11" height="11.8" viewBox="0 0 11 11.8"><path d="M8.8 1.4 H2.6 Q1.5 1.4 1.5 2.6 V9.8 H7.8" stroke="#2020ff" stroke-width="2.1" fill="none"/><path d="M5.0 0.3 L0.7 11.0 H10.3 Z" stroke="#000" stroke-width="1.4" fill="none" stroke-linejoin="miter"/></svg>
<svg style="position:absolute;left:105px;top:28.8px" width="12" height="11" viewBox="0 0 12 11"><path d="M0.8 0.2 L6.3 8.5 M6.3 0.2 L0.8 8.5 L0.3 10.8" stroke="#a8a8a8" stroke-width="1.6" fill="none"/><path d="M3.2 11 L8.3 5.8 L12 11 Z" fill="#a8a8a8"/></svg>
<svg style="position:absolute;left:122.6px;top:28.8px" width="12" height="11" viewBox="0 0 12 11"><path d="M0.5 0.5 L3.3 5.2 L6.1 0.5 M3.3 5 V10.8" stroke="#a8a8a8" stroke-width="1.7" fill="none"/><path d="M8.2 11 V4.5" stroke="#a8a8a8" stroke-width="1.7" fill="none"/><path d="M4.6 5.6 L8.2 0.2 L11.8 5.6 Z" fill="#a8a8a8"/></svg>
<svg style="position:absolute;left:142.6px;top:28.8px" width="8.4" height="10.6" viewBox="0 0 8.4 10.6"><path d="M0.7 10.3 L4.2 0.5 L7.7 10.3 M2 6.8 H6.4" stroke="#a8a8a8" stroke-width="1.5" fill="none"/></svg>
<div style="left:158.6px;top:25.8px;width:1px;height:16px;background:#c4c4c4;border-right:1px solid #fff;"></div>
<div class="t" style="left:166.5px;top:30.08px;font-size:9px;color:#1e1e1e;transform:scaleX(0.9661);">Function:</div>
<div style="left:205.3px;top:26.1px;width:70.9px;height:14.6px;background:#e6e6e6;border:1px solid #bcbcbc;box-sizing:border-box;"></div>
<div class="t" style="left:207.37px;top:30.08px;font-size:9px;color:#1e1e1e;transform:scaleX(1.0577);">Offset (+/-)</div>
<svg style="position:absolute;left:265.2px;top:31.8px" width="8" height="5" viewBox="0 0 8 5"><path d="M0.5 0.5 L4 4 L7.5 0.5" stroke="#5a5a5a" stroke-width="1" fill="none"/></svg>
<div class="t" style="left:281.2px;top:30.08px;font-size:9px;color:#1e1e1e;transform:scaleX(0.8930);">Value:</div>
<div style="left:306.7px;top:25.9px;width:36.7px;height:15.3px;background:#fff;border:1px solid #a5a5a5;box-sizing:border-box;"></div>
<div class="t" style="left:311.38px;top:30.08px;font-size:9px;color:#1e1e1e;transform:scaleX(0.9115);">1.0</div>
<div style="left:345.1px;top:26.8px;width:38.3px;height:14px;background:#e1e1e1;border:1px solid #adadad;box-sizing:border-box;"></div>
<div class="t" style="left:348.43px;top:30.08px;font-size:9px;color:#1e1e1e;transform:scaleX(0.9296);">Execute</div>
<div style="left:6px;top:43.7px;width:379.8px;height:60.2px;background:#808080;"></div>
<div style="left:7.5px;top:45.3px;width:377.6px;height:13px;background:#d6d6d6;"></div>
<div style="left:7.6px;top:45.3px;width:377.3px;height:11.4px;background:#f0f0f0;border-right:1px solid #c4c4c4;border-bottom:1px solid #c4c4c4;box-sizing:border-box;"></div>
<div class="t" style="left:111.28px;top:47.2px;font-size:9.1px;color:#000;font-weight:bold;">Pump Calibration Low Fuel, Fuel to PW</div>
<div style="left:7.5px;top:56.7px;width:356.56px;height:22.9px;background:#e2e2e2;"></div>
<div style="left:7.7px;top:58.3px;width:33.7px;height:10px;background:#f0f0f0;border-right:1px solid #c6c6c6;border-bottom:1px solid #c6c6c6;box-sizing:border-box;"></div>
<div style="left:44.1px;top:58.3px;width:34.2px;height:10px;background:#dcdcdc;border:1px solid #c4c4c4;border-right-color:#b0b0b0;border-bottom-color:#b0b0b0;box-sizing:border-box;"></div>
<div class="t" style="left:56.6px;top:60.98px;font-size:9px;color:#262626;transform:scaleX(0.9200);">00</div>
<div style="left:79.82px;top:58.3px;width:34.2px;height:10px;background:#f0f0f0;border:1px solid #c4c4c4;border-right-color:#b0b0b0;border-bottom-color:#b0b0b0;box-sizing:border-box;"></div>
<div class="t" style="left:92.35px;top:60.98px;font-size:9px;color:#262626;transform:scaleX(0.9200);">08</div>
<div style="left:115.54px;top:58.3px;width:34.2px;height:10px;background:#f0f0f0;border:1px solid #c4c4c4;border-right-color:#b0b0b0;border-bottom-color:#b0b0b0;box-sizing:border-box;"></div>
<div class="t" style="left:127.9px;top:60.98px;font-size:9px;color:#262626;transform:scaleX(0.9200);">16</div>
<div style="left:151.26px;top:58.3px;width:34.2px;height:10px;background:#f0f0f0;border:1px solid #c4c4c4;border-right-color:#b0b0b0;border-bottom-color:#b0b0b0;box-sizing:border-box;"></div>
<div class="t" style="left:163.66px;top:60.98px;font-size:9px;color:#262626;transform:scaleX(0.9200);">24</div>
<div style="left:186.98px;top:58.3px;width:34.2px;height:10px;background:#f0f0f0;border:1px solid #c4c4c4;border-right-color:#b0b0b0;border-bottom-color:#b0b0b0;box-sizing:border-box;"></div>
<div class="t" style="left:199.53px;top:60.98px;font-size:9px;color:#262626;transform:scaleX(0.9200);">32</div>
<div style="left:222.7px;top:58.3px;width:34.2px;height:10px;background:#f0f0f0;border:1px solid #c4c4c4;border-right-color:#b0b0b0;border-bottom-color:#b0b0b0;box-sizing:border-box;"></div>
<div class="t" style="left:235.27px;top:60.98px;font-size:9px;color:#262626;transform:scaleX(0.9200);">40</div>
<div style="left:258.42px;top:58.3px;width:34.2px;height:10px;background:#f0f0f0;border:1px solid #c4c4c4;border-right-color:#b0b0b0;border-bottom-color:#b0b0b0;box-sizing:border-box;"></div>
<div class="t" style="left:271.01px;top:60.98px;font-size:9px;color:#262626;transform:scaleX(0.9200);">48</div>
<div style="left:294.14px;top:58.3px;width:34.2px;height:10px;background:#f0f0f0;border:1px solid #c4c4c4;border-right-color:#b0b0b0;border-bottom-color:#b0b0b0;box-sizing:border-box;"></div>
<div class="t" style="left:306.64px;top:60.98px;font-size:9px;color:#262626;transform:scaleX(0.9200);">56</div>
<div style="left:329.86px;top:58.3px;width:34.2px;height:10px;background:#f0f0f0;border:1px solid #c4c4c4;border-right-color:#b0b0b0;border-bottom-color:#b0b0b0;box-sizing:border-box;"></div>
<div class="t" style="left:342.26px;top:60.98px;font-size:9px;color:#262626;transform:scaleX(0.9200);">64</div>
<div style="left:7.7px;top:69.6px;width:33.7px;height:10px;background:#dedede;border-right:1px solid #c6c6c6;border-bottom:1px solid #c6c6c6;box-sizing:border-box;"></div>
<div style="left:43.6px;top:69.1px;width:35.4px;height:11.2px;background:#a6dbdb;border:1.5px solid #505050;box-sizing:border-box;"></div>
<div class="t" style="left:53.37px;top:70.42px;font-size:8.6px;color:#1a1a1a;transform:scaleX(0.9200);">100.00</div>
<div style="left:79.82px;top:69.6px;width:34.2px;height:10px;background:#abecec;"></div>
<div class="t" style="left:89.68px;top:70.42px;font-size:8.6px;color:#1a1a1a;transform:scaleX(0.9200);">110.00</div>
<div style="left:115.54px;top:69.6px;width:34.2px;height:10px;background:#b8dada;"></div>
<div class="t" style="left:124.81px;top:70.42px;font-size:8.6px;color:#1a1a1a;transform:scaleX(0.9200);">120.00</div>
<div style="left:151.26px;top:69.6px;width:34.2px;height:10px;background:#c5c7c7;"></div>
<div class="t" style="left:160.53px;top:70.42px;font-size:8.6px;color:#1a1a1a;transform:scaleX(0.9200);">130.00</div>
<div style="left:186.98px;top:69.6px;width:34.2px;height:10px;background:#d1afaf;"></div>
<div class="t" style="left:196.25px;top:70.42px;font-size:8.6px;color:#1a1a1a;transform:scaleX(0.9200);">140.00</div>
<div style="left:222.7px;top:69.6px;width:34.2px;height:10px;background:#dd9797;"></div>
<div class="t" style="left:231.97px;top:70.42px;font-size:8.6px;color:#1a1a1a;transform:scaleX(0.9200);">150.00</div>
<div style="left:258.42px;top:69.6px;width:34.2px;height:10px;background:#e88080;"></div>
<div class="t" style="left:267.69px;top:70.42px;font-size:8.6px;color:#1a1a1a;transform:scaleX(0.9200);">160.00</div>
<div style="left:294.14px;top:69.6px;width:34.2px;height:10px;background:#f46868;"></div>
<div class="t" style="left:303.41px;top:70.42px;font-size:8.6px;color:#1a1a1a;transform:scaleX(0.9200);">170.00</div>
<div style="left:329.86px;top:69.6px;width:34.2px;height:10px;background:#ff5050;"></div>
<div class="t" style="left:339.13px;top:70.42px;font-size:8.6px;color:#1a1a1a;transform:scaleX(0.9200);">180.00</div>
<div style="left:6px;top:103.9px;width:379.8px;height:19.5px;background:#f0f0f0;border-top:1px solid #dcdcdc;box-sizing:border-box;"></div>
<div style="left:63.8px;top:105.9px;width:1px;height:16.5px;background:#dadada;"></div>
<div style="left:122.5px;top:105.9px;width:1px;height:16.5px;background:#dadada;"></div>
<svg style="position:absolute;left:376.3px;top:113.9px" width="8" height="8" viewBox="0 0 8 8"><rect x="6" y="0" width="1.5" height="1.5" fill="#a0a0a0"/><rect x="6" y="3" width="1.5" height="1.5" fill="#a0a0a0"/><rect x="3" y="3" width="1.5" height="1.5" fill="#a0a0a0"/><rect x="6" y="6" width="1.5" height="1.5" fill="#a0a0a0"/><rect x="3" y="6" width="1.5" height="1.5" fill="#a0a0a0"/><rect x="0" y="6" width="1.5" height="1.5" fill="#a0a0a0"/></svg>
</div>
<div class="win" style="left:396.7px;top:457.4px;width:393.4px;height:129.6px;">
<div style="left:0px;top:0px;width:393.4px;height:129.6px;background:linear-gradient(#bccad9 0px,#c6d4e3 10px,#d4e0ed 22px,#d8e4f0 30px);border:1px solid #80868e;border-bottom-color:#8a9098;border-radius:6px 6px 0 0;box-sizing:border-box;"></div>
<svg style="position:absolute;left:7.1px;top:9.9px" width="13.2" height="9.8" viewBox="0 0 13.2 9.8"><rect x="0.3" y="2.1" width="12.6" height="5.6" rx="1" fill="#000"/><rect x="1.20" y="0" width="1.3" height="2.6" fill="#222"/><rect x="1.20" y="7.2" width="1.3" height="2.6" fill="#222"/><rect x="3.60" y="0" width="1.3" height="2.6" fill="#222"/><rect x="3.60" y="7.2" width="1.3" height="2.6" fill="#222"/><rect x="6.00" y="0" width="1.3" height="2.6" fill="#222"/><rect x="6.00" y="7.2" width="1.3" height="2.6" fill="#222"/><rect x="8.40" y="0" width="1.3" height="2.6" fill="#222"/><rect x="8.40" y="7.2" width="1.3" height="2.6" fill="#222"/><rect x="10.80" y="0" width="1.3" height="2.6" fill="#222"/><rect x="10.80" y="7.2" width="1.3" height="2.6" fill="#222"/></svg>
<div class="t" style="left:23.87px;top:11.25px;font-size:9.15px;color:#9ea6b0;">Pump Calibration High Fuel, Fuel to PW</div>
<svg style="position:absolute;left:360.4px;top:7.85px" width="25.2" height="13.5" viewBox="0 0 25.2 13.5"><rect x="0.5" y="0.5" width="24.2" height="12.5" rx="2.5" fill="#c9d5e2" stroke="#8d9bae" stroke-width="1"/><path d="M9.2 4.6 L14.6 8.6 M14.6 4.6 L9.2 8.6" stroke="#737b86" stroke-width="3.4" stroke-linecap="round" fill="none"/><path d="M9.2 4.6 L14.6 8.6 M14.6 4.6 L9.2 8.6" stroke="#f0f0f0" stroke-width="1.8" stroke-linecap="round" fill="none"/></svg>
<div style="left:6px;top:24.4px;width:380.9px;height:99px;background:#f0f0f0;"></div>
<div style="left:8.2px;top:25.8px;width:1px;height:15px;background:#c4c4c4;border-right:1px solid #fff;"></div>
<svg style="position:absolute;left:15.8px;top:28.6px" width="11" height="11" viewBox="0 0 11 11"><rect x="0.5" y="0.5" width="10" height="10" fill="#808000" stroke="#000" stroke-width="1"/><rect x="2.6" y="1" width="5.6" height="4.4" fill="#fff"/><rect x="2.6" y="7" width="6" height="3" fill="#000"/><rect x="6.6" y="7.8" width="1.3" height="1.6" fill="#fff"/></svg>
<svg style="position:absolute;left:34.6px;top:29.2px" width="9.2" height="10.6" viewBox="0 0 9.2 10.6"><path d="M1 1 L8.2 9.6 M8.2 1 L1 9.6" stroke="#ff0000" stroke-width="1.8" fill="none"/></svg>
<svg style="position:absolute;left:51.5px;top:29.5px" width="12" height="10.4" viewBox="0 0 12 10.4"><rect x="0.3" y="0" width="1.1" height="9.6" fill="#a8a8a8"/><path d="M0.3 9.7 H12" stroke="#333" stroke-width="1.1" stroke-dasharray="1.3 1.1" fill="none"/><path d="M0.8 3.6 L3.3 6.2 L5.6 4.2 L8.2 6.6 L11.6 2.2" stroke="#ff2020" stroke-width="1.3" fill="none"/></svg>
<svg style="position:absolute;left:68.8px;top:27.8px" width="12.6" height="11.8" viewBox="0 0 12.6 11.8"><path d="M1.6 2.8 L6.3 1.4 L11 2.8" stroke="#111" stroke-width="1.3" fill="none"/><circle cx="6.3" cy="1.2" r="1.1" fill="#000"/><rect x="5.7" y="1" width="1.3" height="10" fill="#222"/><path d="M1.8 2.8 L0.2 6.6 M1.8 2.8 L3.6 6.6 M10.8 2.8 L9 6.6 M10.8 2.8 L12.4 6.6" stroke="#888" stroke-width="0.7" fill="none"/><path d="M-0.2 6.3 H4.2 Q4 8.6 2 8.6 Q0 8.6 -0.2 6.3 Z" fill="#e2e200" stroke="#666" stroke-width="0.5"/><path d="M8.4 6.3 H12.8 Q12.6 8.6 10.6 8.6 Q8.6 8.6 8.4 6.3 Z" fill="#e2e200" stroke="#666" stroke-width="0.5"/><path d="M2.4 11.6 Q6.3 9.6 10.2 11.6 Z" fill="#000"/></svg>
<svg style="position:absolute;left:87.5px;top:27.6px" width="11" height="11.8" viewBox="0 0 11 11.8"><path d="M8.8 1.4 H2.6 Q1.5 1.4 1.5 2.6 V9.8 H7.8" stroke="#2020ff" stroke-width="2.1" fill="none"/><path d="M5.0 0.3 L0.7 11.0 H10.3 Z" stroke="#000" stroke-width="1.4" fill="none" stroke-linejoin="miter"/></svg>
<svg style="position:absolute;left:105px;top:28.8px" width="12" height="11" viewBox="0 0 12 11"><path d="M0.8 0.2 L6.3 8.5 M6.3 0.2 L0.8 8.5 L0.3 10.8" stroke="#a8a8a8" stroke-width="1.6" fill="none"/><path d="M3.2 11 L8.3 5.8 L12 11 Z" fill="#a8a8a8"/></svg>
<svg style="position:absolute;left:122.6px;top:28.8px" width="12" height="11" viewBox="0 0 12 11"><path d="M0.5 0.5 L3.3 5.2 L6.1 0.5 M3.3 5 V10.8" stroke="#a8a8a8" stroke-width="1.7" fill="none"/><path d="M8.2 11 V4.5" stroke="#a8a8a8" stroke-width="1.7" fill="none"/><path d="M4.6 5.6 L8.2 0.2 L11.8 5.6 Z" fill="#a8a8a8"/></svg>
<svg style="position:absolute;left:142.6px;top:28.8px" width="8.4" height="10.6" viewBox="0 0 8.4 10.6"><path d="M0.7 10.3 L4.2 0.5 L7.7 10.3 M2 6.8 H6.4" stroke="#a8a8a8" stroke-width="1.5" fill="none"/></svg>
<div style="left:158.6px;top:25.8px;width:1px;height:16px;background:#c4c4c4;border-right:1px solid #fff;"></div>
<div class="t" style="left:166.5px;top:30.08px;font-size:9px;color:#1e1e1e;transform:scaleX(0.9661);">Function:</div>
<div style="left:205.3px;top:26.1px;width:70.9px;height:14.6px;background:#e6e6e6;border:1px solid #bcbcbc;box-sizing:border-box;"></div>
<div class="t" style="left:207.37px;top:30.08px;font-size:9px;color:#1e1e1e;transform:scaleX(1.0577);">Offset (+/-)</div>
<svg style="position:absolute;left:265.2px;top:31.8px" width="8" height="5" viewBox="0 0 8 5"><path d="M0.5 0.5 L4 4 L7.5 0.5" stroke="#5a5a5a" stroke-width="1" fill="none"/></svg>
<div class="t" style="left:281.2px;top:30.08px;font-size:9px;color:#1e1e1e;transform:scaleX(0.8930);">Value:</div>
<div style="left:306.7px;top:25.9px;width:36.7px;height:15.3px;background:#fff;border:1px solid #a5a5a5;box-sizing:border-box;"></div>
<div class="t" style="left:311.38px;top:30.08px;font-size:9px;color:#1e1e1e;transform:scaleX(0.9115);">1.0</div>
<div style="left:345.1px;top:26.8px;width:38.3px;height:14px;background:#e1e1e1;border:1px solid #adadad;box-sizing:border-box;"></div>
<div class="t" style="left:348.43px;top:30.08px;font-size:9px;color:#1e1e1e;transform:scaleX(0.9296);">Execute</div>
<div style="left:6px;top:43.7px;width:380.9px;height:60.2px;background:#808080;"></div>
<div style="left:7.5px;top:45.3px;width:378.7px;height:13px;background:#d6d6d6;"></div>
<div style="left:7.6px;top:45.3px;width:378.4px;height:11.4px;background:#f0f0f0;border-right:1px solid #c4c4c4;border-bottom:1px solid #c4c4c4;box-sizing:border-box;"></div>
<div class="t" style="left:110.8px;top:47.2px;font-size:9.1px;color:#000;font-weight:bold;">Pump Calibration High Fuel, Fuel to PW</div>
<div style="left:7.5px;top:56.7px;width:356.56px;height:22.9px;background:#e2e2e2;"></div>
<div style="left:7.7px;top:58.3px;width:33.7px;height:10px;background:#f0f0f0;border-right:1px solid #c6c6c6;border-bottom:1px solid #c6c6c6;box-sizing:border-box;"></div>
<div style="left:44.1px;top:58.3px;width:34.2px;height:10px;background:#dcdcdc;border:1px solid #c4c4c4;border-right-color:#b0b0b0;border-bottom-color:#b0b0b0;box-sizing:border-box;"></div>
<div class="t" style="left:56.5px;top:60.98px;font-size:9px;color:#262626;transform:scaleX(0.9200);">64</div>
<div style="left:79.82px;top:58.3px;width:34.2px;height:10px;background:#f0f0f0;border:1px solid #c4c4c4;border-right-color:#b0b0b0;border-bottom-color:#b0b0b0;box-sizing:border-box;"></div>
<div class="t" style="left:92.28px;top:60.98px;font-size:9px;color:#262626;transform:scaleX(0.9200);">68</div>
<div style="left:115.54px;top:58.3px;width:34.2px;height:10px;background:#f0f0f0;border:1px solid #c4c4c4;border-right-color:#b0b0b0;border-bottom-color:#b0b0b0;box-sizing:border-box;"></div>
<div class="t" style="left:128.02px;top:60.98px;font-size:9px;color:#262626;transform:scaleX(0.9200);">72</div>
<div style="left:151.26px;top:58.3px;width:34.2px;height:10px;background:#f0f0f0;border:1px solid #c4c4c4;border-right-color:#b0b0b0;border-bottom-color:#b0b0b0;box-sizing:border-box;"></div>
<div class="t" style="left:163.72px;top:60.98px;font-size:9px;color:#262626;transform:scaleX(0.9200);">76</div>
<div style="left:186.98px;top:58.3px;width:34.2px;height:10px;background:#f0f0f0;border:1px solid #c4c4c4;border-right-color:#b0b0b0;border-bottom-color:#b0b0b0;box-sizing:border-box;"></div>
<div class="t" style="left:199.46px;top:60.98px;font-size:9px;color:#262626;transform:scaleX(0.9200);">80</div>
<div style="left:222.7px;top:58.3px;width:34.2px;height:10px;background:#f0f0f0;border:1px solid #c4c4c4;border-right-color:#b0b0b0;border-bottom-color:#b0b0b0;box-sizing:border-box;"></div>
<div class="t" style="left:235.14px;top:60.98px;font-size:9px;color:#262626;transform:scaleX(0.9200);">84</div>
<div style="left:258.42px;top:58.3px;width:34.2px;height:10px;background:#f0f0f0;border:1px solid #c4c4c4;border-right-color:#b0b0b0;border-bottom-color:#b0b0b0;box-sizing:border-box;"></div>
<div class="t" style="left:270.92px;top:60.98px;font-size:9px;color:#262626;transform:scaleX(0.9200);">88</div>
<div style="left:294.14px;top:58.3px;width:34.2px;height:10px;background:#f0f0f0;border:1px solid #c4c4c4;border-right-color:#b0b0b0;border-bottom-color:#b0b0b0;box-sizing:border-box;"></div>
<div class="t" style="left:306.64px;top:60.98px;font-size:9px;color:#262626;transform:scaleX(0.9200);">92</div>
<div style="left:329.86px;top:58.3px;width:34.2px;height:10px;background:#f0f0f0;border:1px solid #c4c4c4;border-right-color:#b0b0b0;border-bottom-color:#b0b0b0;box-sizing:border-box;"></div>
<div class="t" style="left:342.34px;top:60.98px;font-size:9px;color:#262626;transform:scaleX(0.9200);">96</div>
<div style="left:7.7px;top:69.6px;width:33.7px;height:10px;background:#dedede;border-right:1px solid #c6c6c6;border-bottom:1px solid #c6c6c6;box-sizing:border-box;"></div>
<div style="left:43.6px;top:69.1px;width:35.4px;height:11.2px;background:#a6dbdb;border:1.5px solid #505050;box-sizing:border-box;"></div>
<div class="t" style="left:53.37px;top:70.42px;font-size:8.6px;color:#1a1a1a;transform:scaleX(0.9200);">180.00</div>
<div style="left:79.82px;top:69.6px;width:34.2px;height:10px;background:#abecec;"></div>
<div class="t" style="left:89.09px;top:70.42px;font-size:8.6px;color:#1a1a1a;transform:scaleX(0.9200);">185.00</div>
<div style="left:115.54px;top:69.6px;width:34.2px;height:10px;background:#b8dada;"></div>
<div class="t" style="left:124.81px;top:70.42px;font-size:8.6px;color:#1a1a1a;transform:scaleX(0.9200);">190.00</div>
<div style="left:151.26px;top:69.6px;width:34.2px;height:10px;background:#c5c7c7;"></div>
<div class="t" style="left:160.53px;top:70.42px;font-size:8.6px;color:#1a1a1a;transform:scaleX(0.9200);">195.00</div>
<div style="left:186.98px;top:69.6px;width:34.2px;height:10px;background:#d1afaf;"></div>
<div class="t" style="left:196.25px;top:70.42px;font-size:8.6px;color:#1a1a1a;transform:scaleX(0.9200);">200.00</div>
<div style="left:222.7px;top:69.6px;width:34.2px;height:10px;background:#dd9797;"></div>
<div class="t" style="left:231.97px;top:70.42px;font-size:8.6px;color:#1a1a1a;transform:scaleX(0.9200);">205.00</div>
<div style="left:258.42px;top:69.6px;width:34.2px;height:10px;background:#e88080;"></div>
<div class="t" style="left:267.69px;top:70.42px;font-size:8.6px;color:#1a1a1a;transform:scaleX(0.9200);">210.00</div>
<div style="left:294.14px;top:69.6px;width:34.2px;height:10px;background:#f46868;"></div>
<div class="t" style="left:303.41px;top:70.42px;font-size:8.6px;color:#1a1a1a;transform:scaleX(0.9200);">215.00</div>
<div style="left:329.86px;top:69.6px;width:34.2px;height:10px;background:#ff5050;"></div>
<div class="t" style="left:339.13px;top:70.42px;font-size:8.6px;color:#1a1a1a;transform:scaleX(0.9200);">220.00</div>
<div style="left:6px;top:103.9px;width:380.9px;height:19.5px;background:#f0f0f0;border-top:1px solid #dcdcdc;box-sizing:border-box;"></div>
<div style="left:63.8px;top:105.9px;width:1px;height:16.5px;background:#dadada;"></div>
<div style="left:122.5px;top:105.9px;width:1px;height:16.5px;background:#dadada;"></div>
<svg style="position:absolute;left:377.4px;top:113.9px" width="8" height="8" viewBox="0 0 8 8"><rect x="6" y="0" width="1.5" height="1.5" fill="#a0a0a0"/><rect x="6" y="3" width="1.5" height="1.5" fill="#a0a0a0"/><rect x="3" y="3" width="1.5" height="1.5" fill="#a0a0a0"/><rect x="6" y="6" width="1.5" height="1.5" fill="#a0a0a0"/><rect x="3" y="6" width="1.5" height="1.5" fill="#a0a0a0"/><rect x="0" y="6" width="1.5" height="1.5" fill="#a0a0a0"/></svg>
</div>
</body></html>
